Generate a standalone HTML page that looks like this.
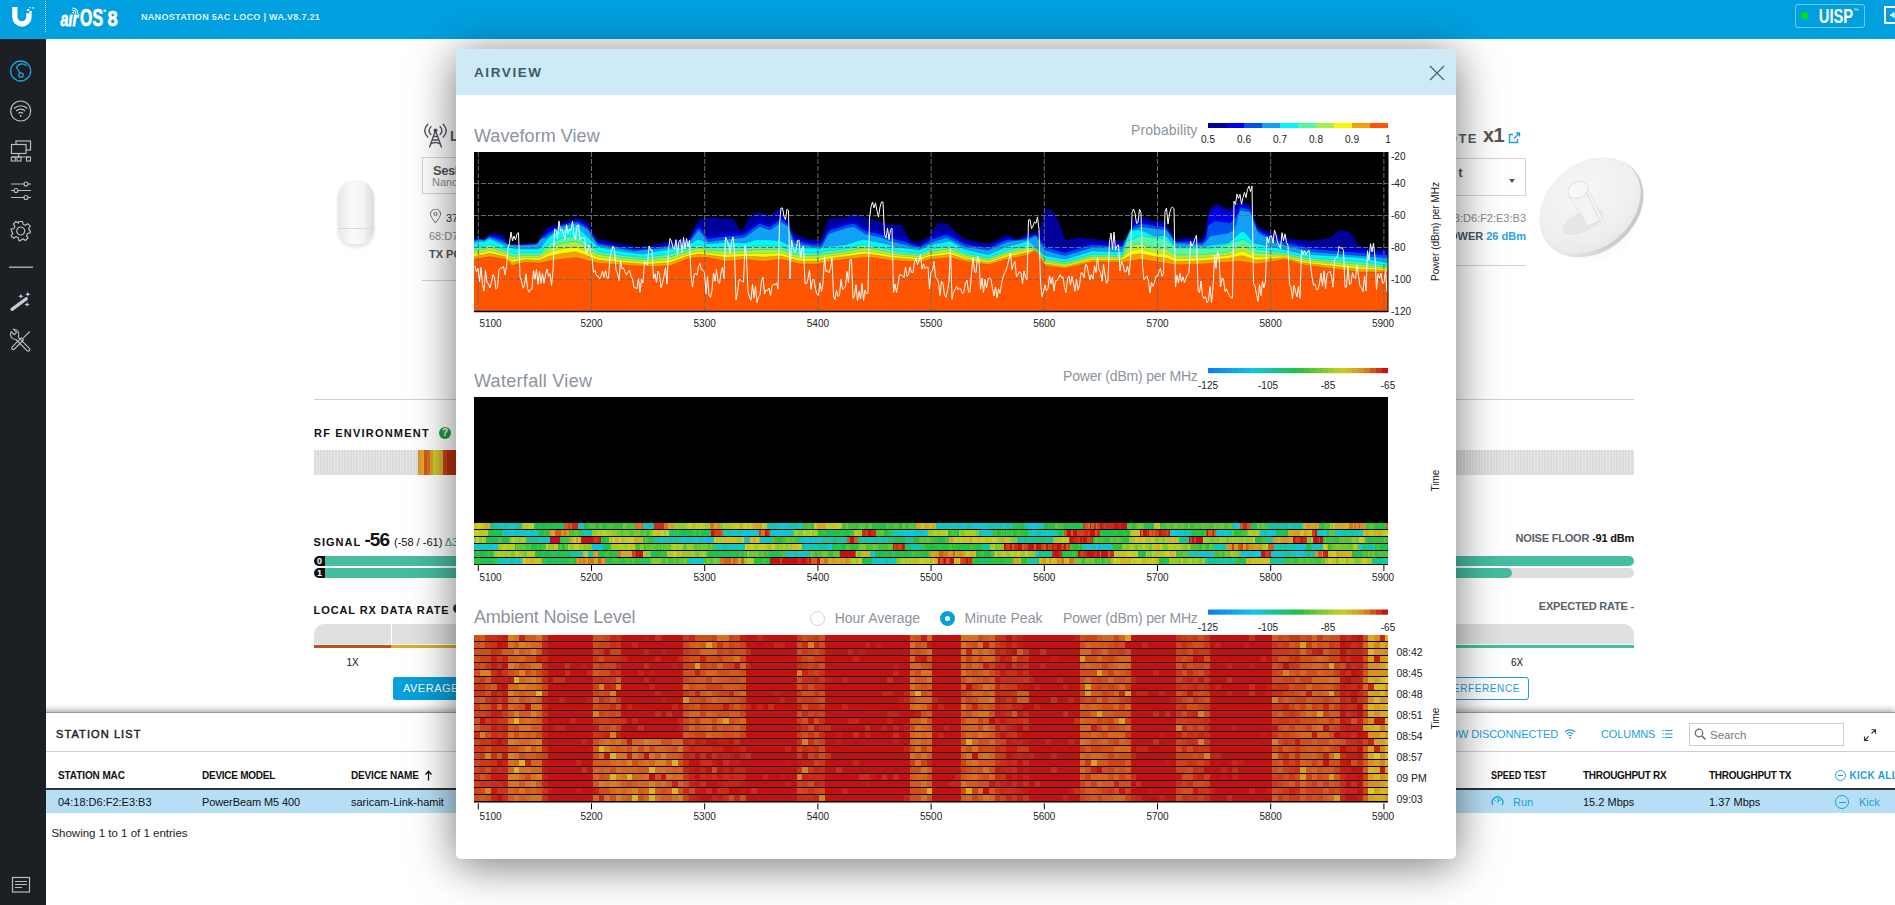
<!DOCTYPE html>
<html><head><meta charset="utf-8"><title>airOS AirView</title><style>
*{margin:0;padding:0}
html,body{width:1895px;height:905px;overflow:hidden;background:#fff;font-family:"Liberation Sans", sans-serif}
body{position:relative}
.t{position:absolute;white-space:nowrap;line-height:1}
#topbar{position:absolute;left:0;top:0;width:1895px;height:39px;background:#00a0e0}
#sidebar{position:absolute;left:0;top:39px;width:46px;height:866px;background:#1c1f24;z-index:3}
#stations{position:absolute;left:0;top:712px;width:1895px;height:193px;background:#fff;border-top:1px solid #9a9a9a;box-sizing:border-box;box-shadow:0 -2px 6px rgba(0,0,0,.32)}
#modal{position:absolute;left:456px;top:49px;width:1000px;height:810px;background:#fff;border-radius:5px;box-shadow:0 6px 45px rgba(0,0,0,.55);overflow:hidden}
#mhead{position:absolute;left:0;top:0;width:1000px;height:46px;background:#cdeaf6}
</style></head>
<body>
<div id="topbar"></div>
<svg style="position:absolute;left:0;top:0" width="40" height="39" viewBox="0 0 40 39">
<path d="M12.2 7 V17 A9.7 9.7 0 0 0 31.6 17 V13.2 H26.2 V17 A4.35 4.35 0 0 1 17.5 17 V7 Z" fill="#fff"/>
<rect x="29.3" y="11" width="2.5" height="2.2" fill="#fff"/>
<rect x="27.1" y="9" width="2.1" height="2" fill="#fff"/>
<rect x="29.6" y="7" width="1.2" height="1.3" fill="#fff"/>
<rect x="32.3" y="7.2" width="1.5" height="1.5" fill="#fff"/>
</svg>
<div style="position:absolute;left:45px;top:1px;width:0;height:31px;border-left:1px dotted rgba(255,255,255,.75)"></div>
<svg style="position:absolute;left:0;top:0" width="130" height="39" viewBox="0 0 130 39">
<text x="60.5" y="26" font-family="Liberation Sans" font-style="italic" font-weight="bold" font-size="21" fill="#fff" stroke="#fff" stroke-width="0.8" textLength="17.5" lengthAdjust="spacingAndGlyphs">a&#305;r</text>
<text x="80" y="26" font-family="Liberation Sans" font-weight="bold" font-size="23.6" fill="#fff" stroke="#fff" stroke-width="0.7" textLength="23" lengthAdjust="spacingAndGlyphs">OS</text>
<text x="107.4" y="26" font-family="Liberation Sans" font-weight="bold" font-size="22.6" fill="#fff" stroke="#fff" stroke-width="0.7" textLength="10.2" lengthAdjust="spacingAndGlyphs">8</text>
<path d="M72.3 12.3 a1.4 1.4 0 0 1 1.4 1.4 M72.3 10.2 a3.5 3.5 0 0 1 3.5 3.5 M72.3 8 a5.7 5.7 0 0 1 5.7 5.7" stroke="#fff" stroke-width="1.1" fill="none"/>
<rect x="103.5" y="9.5" width="2.6" height="2.4" fill="#d4eefa"/>
</svg>
<div class="t " style="left:141.0px;top:12.8px;font-size:9px;font-weight:bold;letter-spacing:0.3px;color:#dff2fb">NANOSTATION 5AC LOCO | WA.V8.7.21</div>
<div style="position:absolute;left:1795px;top:4px;width:68px;height:22px;border:1.5px solid rgba(255,255,255,.45);border-radius:3px;box-sizing:border-box;height:24px;width:70px"></div>
<div style="position:absolute;left:1801px;top:12px;width:7px;height:7px;border-radius:50%;background:#00e400"></div>
<svg style="position:absolute;left:1810px;top:0" width="55" height="30" viewBox="1810 0 55 30"><text x="1818.8" y="22.75" font-family="Liberation Sans" font-weight="bold" font-size="20.5" fill="#fff" textLength="34.3" lengthAdjust="spacingAndGlyphs">UISP</text><path d="M1854 8.8 h2.2 M1855.1 8.8 v2 M1856.8 10.8 v-2 l0.6 1 0.6 -1 v2" stroke="#fff" stroke-width="0.5" fill="none"/></svg>
<div style="position:absolute;left:1884px;top:6px;width:16px;height:18px;border:2px solid #fff;box-sizing:border-box"></div>
<svg style="position:absolute;left:1884px;top:0" width="11" height="39" viewBox="1884 0 11 39"><path d="M1890 15 H1896 M1894.3 12.6 L1891.8 15 L1894.3 17.4" stroke="#fff" stroke-width="1.6" fill="none"/></svg>
<div id="sidebar"></div>
<svg style="position:absolute;left:0;top:39px;z-index:4" width="46" height="866" viewBox="0 39 46 866">
<circle cx="20.7" cy="71" r="10" fill="none" stroke="#1aa3df" stroke-width="1.3"/>
<path d="M26.5 66 A6 6 0 0 0 16.5 67.5 L20 73" fill="none" stroke="#1aa3df" stroke-width="1.3"/>
<circle cx="21" cy="75" r="2.2" fill="none" stroke="#1aa3df" stroke-width="1.3"/>
<circle cx="20.7" cy="111" r="10" fill="none" stroke="#b9bec4" stroke-width="1.2"/>
<path d="M14 108.5 a9.5 9.5 0 0 1 13.4 0 M16.2 111 a6.4 6.4 0 0 1 9 0 M18.5 113.5 a3.2 3.2 0 0 1 4.4 0" fill="none" stroke="#b9bec4" stroke-width="1.2"/>
<circle cx="20.7" cy="116" r="0.9" fill="#b9bec4"/>
<rect x="16" y="141" width="14.5" height="9" fill="none" stroke="#b9bec4" stroke-width="1.2"/>
<rect x="11.5" y="144.5" width="14.5" height="9" fill="#1c1f24" stroke="#b9bec4" stroke-width="1.2"/>
<path d="M18.7 153.5 V157 M12 157 H29" stroke="#b9bec4" stroke-width="1.2"/>
<rect x="11.3" y="157" width="4" height="4" fill="none" stroke="#b9bec4" stroke-width="1.1"/>
<rect x="17" y="157" width="4" height="4" fill="none" stroke="#b9bec4" stroke-width="1.1"/>
<rect x="26.5" y="157" width="4" height="4" fill="none" stroke="#b9bec4" stroke-width="1.1"/>
<path d="M11 184 H31 M11 190.5 H31 M11 197.5 H31" stroke="#b9bec4" stroke-width="1.2"/>
<circle cx="26" cy="184" r="2" fill="#1c1f24" stroke="#b9bec4" stroke-width="1.1"/>
<circle cx="16" cy="190.5" r="2" fill="#1c1f24" stroke="#b9bec4" stroke-width="1.1"/>
<circle cx="26" cy="197.5" r="2" fill="#1c1f24" stroke="#b9bec4" stroke-width="1.1"/>
<g transform="translate(20.7,231)" fill="none" stroke="#b9bec4" stroke-width="1.2">
<path d="M-1.8,-9.5 L1.8,-9.5 L2.4,-6.8 L4.6,-5.8 L7,-7.3 L9.5,-4.8 L8,-2.4 L9,-0.2 L9.6,0 L9.6,1.8 L6.8,2.4 L5.8,4.6 L7.3,7 L4.8,9.5 L2.4,8 L0.2,9 L0,9.6 L-1.8,9.6 L-2.4,6.8 L-4.6,5.8 L-7,7.3 L-9.5,4.8 L-8,2.4 L-9,0.2 L-9.6,-1.8 L-6.8,-2.4 L-5.8,-4.6 L-7.3,-7 L-4.8,-9.5 L-2.4,-8 Z"/>
<circle cx="0" cy="0" r="4"/>
</g>
<path d="M9 267.2 H33" stroke="#b9bec4" stroke-width="1.3"/>
<path d="M12 309.3 L26.2 298.8" stroke="#b9bec4" stroke-width="3.4" stroke-linecap="round"/>
<path d="M12 309.3 L26.2 298.8" stroke="#c4d0d8" stroke-width="1.8" stroke-linecap="round"/>
<path d="M20.9 293.0 Q20.9 296.2 24.099999999999998 296.2 Q20.9 296.2 20.9 299.4 Q20.9 296.2 17.7 296.2 Q20.9 296.2 20.9 293.0Z M27.8 291.1 Q27.8 294.3 31.0 294.3 Q27.8 294.3 27.8 297.5 Q27.8 294.3 24.6 294.3 Q27.8 294.3 27.8 291.1Z M27.1 301.2 Q27.1 304.4 30.3 304.4 Q27.1 304.4 27.1 307.59999999999997 Q27.1 304.4 23.900000000000002 304.4 Q27.1 304.4 27.1 301.2Z" fill="#c4d0d8"/>
<g fill="none" stroke="#b9bec4" stroke-width="1.1">
<path d="M18.2 337.2 L29.3 348.3 a1.6 1.6 0 0 1 -2.3 2.3 L15.9 339.5"/>
<path d="M15.9 339.5 A5.2 5.2 0 0 1 11.2 331.6 L14.3 334.7 L16.6 332.4 L13.5 329.3 A5.2 5.2 0 0 1 18.2 337.2"/>
<path d="M12.2 346.8 L21.3 337.7 L23.5 339.9 L14.4 349 a1.55 1.55 0 0 1 -2.2 -2.2z"/>
<path d="M22.4 338.8 L29.7 331.5"/>
</g>
<rect x="12.5" y="877.5" width="17" height="14.5" fill="none" stroke="#b9bec4" stroke-width="1.2"/>
<path d="M15 881.5 H27 M15 884.5 H27 M15 887.5 H22" stroke="#b9bec4" stroke-width="1.2"/>
</svg>
<div style="position:absolute;left:338px;top:180px;width:36px;height:64px;border-radius:17px 17px 15px 15px;background:linear-gradient(90deg,#e8e8e8,#fafafa 40%,#f4f4f4 70%,#dcdcdc);box-shadow:0 3px 4px rgba(0,0,0,.12)"></div>
<div style="position:absolute;left:339px;top:228px;width:34px;height:1px;background:#d8d8d8"></div>
<svg style="position:absolute;left:418px;top:118px" width="36" height="32" viewBox="0 0 36 32">
<g fill="none" stroke="#50565c" stroke-width="1.4" stroke-linecap="round">
<path d="M9.8 6.2 Q3.8 12.6 9.8 19 M25.2 6.2 Q31.2 12.6 25.2 19 M12.9 8.6 Q9.3 12.6 12.9 16.6 M22.1 8.6 Q25.7 12.6 22.1 16.6"/>
<path d="M17.5 12.5 L11.6 29 M17.5 12.5 L23.4 29 M15.2 18.5 H19.8 M14.2 22 H20.8 M12.8 26 Q17.5 23 22.2 26"/>
</g><circle cx="17.5" cy="12.3" r="1.9" fill="#50565c"/></svg>
<div class="t " style="left:450.0px;top:129.1px;font-size:14px;font-weight:bold;color:#56606a">L</div>
<div style="position:absolute;left:422px;top:157px;width:120px;height:37px;border:1px solid #d4d4d4;box-sizing:border-box"></div>
<div class="t " style="left:433.0px;top:164.0px;font-size:13px;font-weight:bold;color:#555;letter-spacing:-0.5px">Seslikaya</div>
<div class="t " style="left:432.0px;top:177.2px;font-size:11px;color:#8a8a8a">NanoStation</div>
<svg style="position:absolute;left:429px;top:209px" width="13" height="15" viewBox="0 0 13 15"><path d="M6.5 14 C3 9 1.5 7 1.5 5 a5 5 0 0 1 10 0 c0 2 -1.5 4 -5 9z" fill="none" stroke="#666" stroke-width="1"/><circle cx="6.5" cy="5" r="1.6" fill="none" stroke="#666" stroke-width="1"/></svg>
<div class="t " style="left:446.0px;top:212.7px;font-size:11px;color:#333">37.1</div>
<div class="t " style="left:429.0px;top:230.7px;font-size:11px;color:#8a8a8a">68:D7:9A</div>
<div class="t " style="left:429.0px;top:248.7px;font-size:11px;font-weight:bold;color:#4a5660">TX POWER</div>
<div style="position:absolute;left:422px;top:280px;width:40px;height:1px;background:#d0d0d0"></div>
<div class="t " style="right:417.0px;top:132.0px;font-size:13px;font-weight:bold;letter-spacing:1.5px;color:#56606a">REMOTE</div>
<div class="t " style="left:1483.0px;top:125.1px;font-size:20px;font-weight:bold;color:#555;letter-spacing:-0.5px">x1</div>
<svg style="position:absolute;left:1508px;top:132px" width="13" height="12" viewBox="0 0 13 12"><path d="M5 2.5 H1.5 V10.5 H9.5 V7 M6 6.5 L11.5 1 M8 1 H11.5 V4.5" fill="none" stroke="#1f9fdc" stroke-width="1.4"/></svg>
<div style="position:absolute;left:1400px;top:158px;width:126px;height:38px;border:1px solid #d4d4d4;box-sizing:border-box"></div>
<div class="t " style="right:432.5px;top:166.0px;font-size:13px;font-weight:bold;color:#555">t</div>
<div style="position:absolute;left:1509px;top:179px;width:0;height:0;border-left:3.5px solid transparent;border-right:3.5px solid transparent;border-top:4px solid #555"></div>
<div class="t " style="right:369.0px;top:212.7px;font-size:11px;color:#8a8a8a">04:18:D6:F2:E3:B3</div>
<div class="t " style="right:369.0px;top:230.7px;font-size:11px;font-weight:bold;color:#4a5660">TX POWER <span style="color:#2aa5e0;font-weight:bold">26 dBm</span></div>
<div style="position:absolute;left:1420px;top:265px;width:106px;height:1px;background:#d0d0d0"></div>
<svg style="position:absolute;left:1530px;top:150px" width="125" height="125" viewBox="1530 150 125 125">
<defs><radialGradient id="dg" cx="0.55" cy="0.35" r="0.75"><stop offset="0" stop-color="#f6f6f6"/><stop offset="0.6" stop-color="#f0f0f0"/><stop offset="1" stop-color="#e6e6e6"/></radialGradient>
<linearGradient id="rim" x1="0" y1="0" x2="0.6" y2="1"><stop offset="0" stop-color="#f2f2f2"/><stop offset="0.6" stop-color="#e4e4e4"/><stop offset="1" stop-color="#c8c8c8"/></linearGradient>
<radialGradient id="sh" cx="0.5" cy="0.5" r="0.5"><stop offset="0" stop-color="#000" stop-opacity="0.12"/><stop offset="1" stop-color="#000" stop-opacity="0"/></radialGradient></defs>
<ellipse cx="1600" cy="222" rx="50" ry="36" transform="rotate(-40 1600 222)" fill="url(#sh)"/>
<ellipse cx="1591.5" cy="207.5" rx="57" ry="44" transform="rotate(-40 1591.5 207.5)" fill="url(#rim)"/>
<ellipse cx="1590" cy="205.5" rx="55.5" ry="42.5" transform="rotate(-40 1590 205.5)" fill="url(#dg)"/>
<ellipse cx="1583" cy="222" rx="22" ry="10" transform="rotate(-25 1583 222)" fill="#e2e2e2" opacity="0.8"/>
<path d="M1569 196 L1588 226 L1603 219 L1586 186 Z" fill="#f4f4f4" stroke="#dcdcdc" stroke-width="0.7"/>
<path d="M1585 190 L1599 219" stroke="#dedede" stroke-width="1"/>
<ellipse cx="1578" cy="190" rx="10.5" ry="8" transform="rotate(-25 1578 190)" fill="#f8f8f8" stroke="#dadada" stroke-width="0.8"/>
</svg>
<div style="position:absolute;left:314px;top:398.5px;width:1320px;height:1px;background:#cfcfcf"></div>
<div class="t " style="left:314.0px;top:427.7px;font-size:11px;font-weight:bold;letter-spacing:1.2px;color:#111">RF ENVIRONMENT</div>
<div style="position:absolute;left:439px;top:427px;width:12px;height:12px;border-radius:50%;background:#1c9d3f;color:#fff;font-size:10px;line-height:12px;text-align:center;font-weight:bold">?</div>
<div style="position:absolute;left:314px;top:450px;width:1320px;height:25px;background:repeating-linear-gradient(90deg,#dcdcdc 0 2px,#e6e6e6 2px 3px)"></div>
<div style="position:absolute;left:418px;top:450px;width:40px;height:25px;background:linear-gradient(90deg,#d89a2a 0 3px,#e0a830 3px 6px,#d05a18 6px 9px,#d86c20 9px 12px,#d8a030 12px 15px,#c8d030 15px 18px,#d0c030 18px 21px,#d0b030 21px 25px,#c84018 25px 29px,#b83010 29px 40px)"></div>
<div class="t " style="left:313.6px;top:536.7px;font-size:11px;font-weight:bold;letter-spacing:1px;color:#111">SIGNAL</div>
<div class="t " style="left:364.5px;top:529.9px;font-size:19px;color:#111;letter-spacing:-1px;font-weight:bold">-56</div>
<div class="t " style="left:394.0px;top:536.7px;font-size:11px;color:#111">(-58 / -61) <span style="color:#2aa27a">&Delta;3</span></div>
<div style="position:absolute;left:314px;top:556px;width:11px;height:10px;background:#111;border-radius:5px 0 0 5px;color:#fff;font-size:9px;line-height:10px;text-align:center;font-weight:bold">0</div>
<div style="position:absolute;left:314px;top:568px;width:11px;height:10px;background:#111;border-radius:5px 0 0 5px;color:#fff;font-size:9px;line-height:10px;text-align:center;font-weight:bold">1</div>
<div style="position:absolute;left:325px;top:556px;width:1309px;height:10px;background:#46bda0;border-radius:0 5px 5px 0"></div>
<div style="position:absolute;left:325px;top:568px;width:1309px;height:10px;background:#dcdedd;border-radius:0 5px 5px 0"></div>
<div style="position:absolute;left:325px;top:568px;width:1187px;height:10px;background:#46bda0;border-radius:0 5px 5px 0"></div>
<div class="t " style="right:261.0px;top:532.7px;font-size:11px;font-weight:bold;color:#58626a;letter-spacing:-0.2px">NOISE FLOOR <span style="color:#111">-91 dBm</span></div>
<div class="t " style="left:313.6px;top:604.7px;font-size:11px;font-weight:bold;letter-spacing:0.9px;color:#111">LOCAL RX DATA RATE</div>
<div style="position:absolute;left:453px;top:604px;width:9px;height:9px;border-radius:50%;background:#333"></div>
<div class="t " style="right:261.0px;top:600.7px;font-size:11px;font-weight:bold;color:#58626a;letter-spacing:-0.2px">EXPECTED RATE -</div>
<div style="position:absolute;left:314px;top:624px;width:1320px;height:20px;background:#dfe0e0;border-radius:10px 10px 0 0"></div>
<div style="position:absolute;left:391px;top:624px;width:1px;height:20px;background:#fff"></div>
<div style="position:absolute;left:314px;top:644.5px;width:77px;height:3.5px;background:#c84b1c"></div>
<div style="position:absolute;left:391px;top:644.5px;width:100px;height:3.5px;background:#d8ad28"></div>
<div style="position:absolute;left:1400px;top:644.5px;width:234px;height:3.5px;background:#46bda0"></div>
<div class="t " style="left:346.5px;top:657.5px;font-size:10px;color:#111">1X</div>
<div class="t " style="left:1511.0px;top:657.5px;font-size:10px;color:#111">6X</div>
<div style="position:absolute;left:393px;top:677px;width:150px;height:23px;background:#079fdc;border-radius:3px"></div>
<div class="t " style="left:403.0px;top:682.7px;font-size:11px;color:#fff;letter-spacing:0.5px">AVERAGE CCQ</div>
<div style="position:absolute;left:1380px;top:677px;width:149px;height:23px;border:1px solid #1b9fdc;border-radius:3px;box-sizing:border-box"></div>
<div class="t " style="right:375.0px;top:683.5px;font-size:10px;color:#1b9fdc;letter-spacing:0.6px">INTERFERENCE</div>
<div id="stations"></div>
<div class="t " style="left:56.0px;top:728.7px;font-size:11px;letter-spacing:1.1px;color:#222;-webkit-text-stroke:0.45px #222">STATION LIST</div>
<div style="position:absolute;left:46px;top:751px;width:1849px;height:1px;background:#cfcfcf"></div>
<div class="t " style="left:58.0px;top:770.5px;font-size:10px;font-weight:bold;color:#111;letter-spacing:-0.1px">STATION MAC</div>
<div class="t " style="left:202.0px;top:770.5px;font-size:10px;font-weight:bold;color:#111;letter-spacing:-0.25px">DEVICE MODEL</div>
<div class="t " style="left:351.0px;top:770.5px;font-size:10px;font-weight:bold;color:#111;letter-spacing:-0.15px">DEVICE NAME</div>
<svg style="position:absolute;left:424px;top:770px" width="9" height="11" viewBox="0 0 9 11"><path d="M4.5 10.5 V1.5 M1.5 4.5 L4.5 1.3 L7.5 4.5" fill="none" stroke="#111" stroke-width="1.3"/></svg>
<div class="t " style="left:1490.5px;top:770.5px;font-size:10px;font-weight:bold;color:#111;letter-spacing:-0.1px;transform:scaleX(0.9);transform-origin:0 0">SPEED TEST</div>
<div class="t " style="left:1583.0px;top:770.5px;font-size:10px;font-weight:bold;color:#111;letter-spacing:-0.3px">THROUGHPUT RX</div>
<div class="t " style="left:1709.0px;top:770.5px;font-size:10px;font-weight:bold;color:#111;letter-spacing:-0.3px">THROUGHPUT TX</div>
<div style="position:absolute;left:1835px;top:770px;width:9px;height:9px;border:1px solid #1b9fdc;border-radius:50%"></div><div style="position:absolute;left:1838px;top:775px;width:5px;height:1px;background:#1b9fdc"></div>
<div class="t " style="left:1849.5px;top:770.5px;font-size:10px;font-weight:bold;color:#1b9fdc;letter-spacing:0.3px">KICK ALL</div>
<div style="position:absolute;left:46px;top:788px;width:1849px;height:2px;background:#2f3336"></div>
<div style="position:absolute;left:46px;top:790px;width:1849px;height:23px;background:#b6dff5"></div>
<div class="t " style="left:58.0px;top:796.7px;font-size:11px;color:#111">04:18:D6:F2:E3:B3</div>
<div class="t " style="left:202.0px;top:796.7px;font-size:11px;color:#111;letter-spacing:-0.1px">PowerBeam M5 400</div>
<div class="t " style="left:351.0px;top:796.7px;font-size:11px;color:#111">saricam-Link-hamit</div>
<svg style="position:absolute;left:1491px;top:795px" width="13" height="12" viewBox="0 0 13 12"><path d="M2 10 A5.3 5.3 0 1 1 11 10" fill="none" stroke="#1b9fdc" stroke-width="1.3"/><path d="M6.5 7.5 L8.5 4" stroke="#1b9fdc" stroke-width="1.3"/><path d="M3.5 5 l1 1 M9.5 5 l-1 1 M6.5 3 v1.3" stroke="#1b9fdc" stroke-width="1"/></svg>
<div class="t " style="left:1513.0px;top:796.7px;font-size:11px;color:#1b9fdc">Run</div>
<div class="t " style="left:1583.0px;top:796.7px;font-size:11px;color:#111">15.2 Mbps</div>
<div class="t " style="left:1709.0px;top:796.7px;font-size:11px;color:#111">1.37 Mbps</div>
<div style="position:absolute;left:1835px;top:795px;width:14px;height:14px;border:1.3px solid #1b9fdc;border-radius:50%;box-sizing:border-box"></div><div style="position:absolute;left:1838.5px;top:801.5px;width:7px;height:1.3px;background:#1b9fdc"></div>
<div class="t " style="left:1859.0px;top:796.7px;font-size:11px;color:#1b9fdc">Kick</div>
<div class="t " style="left:51.4px;top:828.3px;font-size:11.5px;color:#222">Showing 1 to 1 of 1 entries</div>
<div class="t " style="right:337.0px;top:728.7px;font-size:11px;color:#1b9fdc;letter-spacing:-0.1px">SHOW DISCONNECTED</div>
<svg style="position:absolute;left:1564px;top:729px" width="12" height="10" viewBox="0 0 12 10"><path d="M1 3 a7 7 0 0 1 10 0 M2.8 5 a4.5 4.5 0 0 1 6.4 0 M4.5 7 a2 2 0 0 1 3 0" fill="none" stroke="#1b9fdc" stroke-width="1.1"/><circle cx="6" cy="8.8" r="0.9" fill="#1b9fdc"/></svg>
<div class="t " style="left:1601.0px;top:728.7px;font-size:11px;color:#1b9fdc;letter-spacing:-0.1px">COLUMNS</div>
<svg style="position:absolute;left:1662px;top:729px" width="11" height="10" viewBox="0 0 11 10"><path d="M3 1.5 H10.5 M3 5 H10.5 M3 8.5 H10.5" stroke="#1b9fdc" stroke-width="1.2"/><path d="M0.5 1.5 H1.8 M0.5 5 H1.8 M0.5 8.5 H1.8" stroke="#1b9fdc" stroke-width="1.2"/></svg>
<div style="position:absolute;left:1689px;top:723px;width:155px;height:23px;border:1px solid #cfcfcf;box-sizing:border-box"></div>
<svg style="position:absolute;left:1694px;top:728px" width="13" height="13" viewBox="0 0 13 13"><circle cx="5" cy="5" r="3.8" fill="none" stroke="#666" stroke-width="1.2"/><path d="M7.8 7.8 L11.5 11.5" stroke="#666" stroke-width="1.5"/></svg>
<div class="t " style="left:1710.0px;top:730.3px;font-size:11.5px;color:#777">Search</div>
<svg style="position:absolute;left:1863px;top:729px" width="14" height="13" viewBox="0 0 14 13"><path d="M1.5 11.5 L5.5 7.5 M8.5 4.5 L12.5 0.8 M1.5 7.5 V11.5 H5.5 M8.5 0.8 H12.5 V4.8" fill="none" stroke="#333" stroke-width="1.1"/></svg>
<div id="modal"><div id="mhead"></div></div>
<div class="t m" style="left:474.0px;top:65.8px;font-size:13.5px;font-weight:bold;letter-spacing:1.6px;color:#3d5a69">AIRVIEW</div>
<svg class="m" style="position:absolute;left:1429px;top:65px" width="16" height="16" viewBox="0 0 16 16"><path d="M1 1 L15 15 M15 1 L1 15" stroke="#4b6470" stroke-width="1.3"/></svg>
<div class="t m" style="left:474.0px;top:126.6px;font-size:18px;color:#8b949d;letter-spacing:0.05px">Waveform View</div>
<div class="t m" style="left:1131.0px;top:123.1px;font-size:14px;color:#8b949d;letter-spacing:0.1px">Probability</div>
<div class="t m" style="left:474.0px;top:371.5px;font-size:18px;color:#8b949d;letter-spacing:0.3px">Waterfall View</div>
<div class="t m" style="left:1063.0px;top:368.6px;font-size:14px;color:#8b949d;letter-spacing:-0.2px">Power (dBm) per MHz</div>
<div class="t m" style="left:474.0px;top:607.9px;font-size:18px;color:#8b949d;letter-spacing:-0.2px">Ambient Noise Level</div>
<div class="t m" style="left:834.7px;top:610.5px;font-size:14px;color:#8b949d">Hour Average</div>
<div class="t m" style="left:964.6px;top:610.5px;font-size:14px;color:#8b949d">Minute Peak</div>
<div class="t m" style="left:1063.0px;top:610.6px;font-size:14px;color:#8b949d;letter-spacing:-0.2px">Power (dBm) per MHz</div>
<div class="m" style="position:absolute;left:810px;top:611px;width:15px;height:15px;border:1px solid #cfd3d6;border-radius:50%;box-sizing:border-box;background:#fff"></div>
<div class="m" style="position:absolute;left:940px;top:611px;width:15px;height:15px;border-radius:50%;box-sizing:border-box;background:#079fdc"></div>
<div class="m" style="position:absolute;left:945px;top:616px;width:5px;height:5px;border-radius:50%;background:#fff"></div>
<svg class="m" style="position:absolute;left:0;top:0" width="1895" height="905" font-family="Liberation Sans" fill="#222"><rect x="474" y="152" width="914" height="159" fill="#000"/>
<polygon fill="#00009a" points="474,311 474,236.6 476,237.1 478,237.6 480,238.1 482,238.6 484,239.1 486,237.7 488,235.3 490,233.0 492,233.3 494,233.5 496,233.8 498,234.1 500,234.3 502,234.6 504,236.6 506,239.8 508,243.0 510,243.2 512,243.4 514,243.6 516,243.8 518,243.9 520,243.8 522,243.7 524,243.6 526,243.5 528,243.4 530,243.3 532,243.2 534,243.1 536,243.0 538,241.4 540,238.3 542,235.1 544,231.9 546,228.8 548,227.5 550,226.8 552,226.1 554,225.4 556,224.7 558,224.0 560,223.3 562,222.7 564,222.0 566,221.3 568,220.6 570,219.9 572,219.3 574,218.6 576,217.9 578,217.7 580,218.7 582,219.7 584,220.7 586,221.7 588,222.7 590,226.2 592,230.5 594,234.8 596,238.5 598,238.9 600,239.4 602,239.8 604,240.3 606,240.8 608,241.2 610,241.7 612,242.1 614,242.6 616,243.0 618,243.4 620,243.7 622,244.0 624,244.3 626,244.7 628,245.0 630,245.3 632,245.7 634,246.0 636,246.3 638,246.6 640,246.4 642,246.2 644,246.1 646,245.9 648,245.7 650,245.4 652,245.0 654,244.5 656,244.1 658,243.7 660,243.3 662,242.8 664,242.4 666,242.0 668,241.5 670,241.1 672,240.8 674,240.5 676,240.2 678,239.9 680,239.6 682,239.4 684,239.1 686,238.8 688,238.5 690,235.9 692,232.1 694,228.3 696,224.5 698,220.6 700,219.1 702,218.8 704,218.5 706,218.2 708,218.0 710,217.7 712,217.4 714,217.6 716,217.7 718,217.9 720,218.1 722,218.2 724,218.4 726,218.6 728,218.8 730,219.0 732,219.1 734,219.8 736,223.3 738,226.8 740,230.3 742,230.2 744,226.5 746,222.9 748,219.2 750,215.6 752,214.8 754,214.0 756,213.2 758,212.4 760,212.3 762,213.0 764,213.6 766,214.3 768,214.9 770,215.6 772,214.0 774,212.4 776,210.7 778,209.1 780,209.7 782,212.5 784,215.4 786,218.2 788,221.0 790,225.3 792,229.5 794,233.8 796,234.6 798,235.3 800,236.1 802,236.8 804,237.6 806,238.4 808,239.1 810,239.4 812,239.5 814,239.6 816,239.7 818,239.8 820,239.9 822,237.1 824,231.3 826,225.5 828,219.7 830,218.2 832,218.1 834,218.0 836,217.9 838,217.8 840,217.7 842,217.6 844,217.5 846,217.0 848,216.2 850,215.4 852,214.6 854,213.8 856,214.5 858,215.1 860,215.8 862,216.4 864,217.1 866,217.7 868,218.2 870,218.8 872,219.3 874,219.9 876,220.5 878,221.1 880,221.6 882,222.2 884,222.8 886,223.4 888,224.0 890,224.6 892,224.7 894,224.7 896,224.7 898,224.7 900,224.7 902,225.8 904,229.4 906,232.9 908,236.5 910,240.1 912,241.2 914,241.4 916,241.6 918,241.8 920,242.0 922,240.7 924,239.5 926,238.2 928,237.0 930,235.7 932,232.0 934,228.4 936,224.7 938,223.0 940,223.1 942,223.3 944,223.5 946,223.6 948,223.8 950,226.0 952,228.1 954,230.3 956,232.3 958,233.9 960,235.5 962,237.1 964,238.7 966,239.5 968,239.9 970,240.3 972,240.6 974,241.0 976,241.4 978,241.8 980,242.2 982,242.7 984,243.1 986,243.5 988,243.9 990,242.9 992,241.9 994,240.9 996,239.9 998,239.0 1000,238.0 1002,237.0 1004,236.0 1006,235.0 1008,235.3 1010,236.1 1012,237.0 1014,237.8 1016,238.7 1018,239.0 1020,237.9 1022,236.7 1024,235.6 1026,234.4 1028,233.3 1030,232.9 1032,232.7 1034,232.5 1036,232.3 1038,232.1 1040,228.2 1042,220.6 1044,213.0 1046,209.3 1048,209.5 1050,209.8 1052,210.0 1054,213.5 1056,217.0 1058,220.5 1060,224.8 1062,231.0 1064,237.1 1066,240.0 1068,239.6 1070,239.3 1072,238.9 1074,238.5 1076,238.2 1078,237.8 1080,237.6 1082,237.8 1084,238.0 1086,238.2 1088,238.4 1090,238.6 1092,238.9 1094,239.1 1096,239.3 1098,239.5 1100,239.8 1102,240.0 1104,240.2 1106,240.5 1108,240.7 1110,240.9 1112,240.9 1114,240.8 1116,240.7 1118,240.6 1120,240.5 1122,240.4 1124,240.3 1126,237.9 1128,233.2 1130,228.6 1132,223.9 1134,219.3 1136,218.5 1138,217.7 1140,216.9 1142,216.9 1144,217.6 1146,218.3 1148,219.0 1150,219.7 1152,220.4 1154,221.0 1156,221.0 1158,221.0 1160,221.0 1162,221.0 1164,221.0 1166,223.3 1168,226.7 1170,230.0 1172,233.3 1174,236.6 1176,239.2 1178,239.0 1180,238.8 1182,238.5 1184,238.2 1186,238.0 1188,237.8 1190,237.5 1192,237.8 1194,238.1 1196,238.3 1198,238.6 1200,238.9 1202,239.2 1204,234.9 1206,226.0 1208,217.2 1210,208.3 1212,207.1 1214,205.9 1216,204.7 1218,204.1 1220,205.2 1222,206.4 1224,207.5 1226,208.6 1228,209.8 1230,208.7 1232,207.1 1234,205.4 1236,203.8 1238,202.1 1240,201.2 1242,201.9 1244,202.6 1246,203.2 1248,203.9 1250,204.6 1252,209.8 1254,215.7 1256,221.7 1258,226.7 1260,227.6 1262,228.5 1264,229.4 1266,230.3 1268,231.2 1270,232.1 1272,233.0 1274,233.9 1276,234.8 1278,235.3 1280,235.8 1282,236.3 1284,236.8 1286,237.3 1288,237.8 1290,238.3 1292,238.8 1294,239.3 1296,239.5 1298,239.7 1300,239.9 1302,240.1 1304,240.2 1306,240.4 1308,240.6 1310,240.8 1312,241.0 1314,240.6 1316,240.2 1318,239.9 1320,239.5 1322,239.1 1324,238.7 1326,238.4 1328,238.0 1330,237.6 1332,236.3 1334,234.7 1336,233.1 1338,231.5 1340,230.3 1342,230.6 1344,230.9 1346,231.3 1348,231.6 1350,231.9 1352,234.6 1354,238.0 1356,241.4 1358,244.8 1360,245.3 1362,245.9 1364,246.4 1366,246.9 1368,247.4 1370,248.0 1372,248.5 1374,249.0 1376,249.3 1378,249.3 1380,249.3 1382,249.3 1384,249.3 1386,249.3 1388,249.3 1388,311"/>
<polygon fill="#0000ee" points="474,311 474,238.1 476,238.3 478,238.5 480,238.7 482,239.1 484,239.7 486,238.2 488,236.2 490,234.5 492,235.0 494,235.4 496,235.8 498,236.3 500,236.7 502,237.2 504,238.8 506,241.1 508,243.5 510,243.7 512,243.9 514,244.1 516,244.3 518,244.4 520,244.3 522,244.2 524,244.1 526,244.0 528,243.9 530,243.8 532,243.7 534,243.6 536,243.6 538,241.9 540,238.8 542,236.2 544,234.0 546,231.8 548,230.5 550,229.5 552,228.6 554,227.6 556,226.6 558,225.6 560,224.7 562,223.9 564,223.3 566,222.7 568,222.1 570,221.5 572,220.9 574,220.3 576,219.7 578,219.6 580,220.7 582,221.8 584,222.9 586,224.0 588,225.1 590,228.3 592,232.3 594,236.2 596,239.7 598,240.9 600,241.4 602,241.8 604,242.2 606,242.6 608,243.0 610,243.5 612,243.9 614,244.3 616,244.7 618,245.0 620,245.4 622,245.7 624,246.0 626,246.4 628,246.7 630,247.0 632,247.4 634,247.7 636,247.8 638,247.9 640,247.8 642,247.6 644,247.4 646,247.3 648,247.1 650,246.8 652,246.4 654,246.1 656,245.7 658,245.4 660,245.0 662,244.7 664,244.3 666,244.0 668,243.6 670,243.3 672,242.9 674,242.6 676,242.2 678,241.9 680,241.5 682,241.2 684,240.8 686,240.4 688,240.1 690,237.8 692,234.3 694,230.9 696,227.5 698,224.9 700,225.6 702,228.2 704,230.7 706,233.2 708,235.7 710,235.7 712,235.4 714,235.1 716,234.8 718,234.6 720,234.3 722,234.0 724,233.7 726,233.4 728,233.2 730,233.0 732,232.8 734,232.6 736,232.4 738,232.2 740,232.9 742,232.8 744,231.6 746,230.5 748,229.0 750,227.5 752,226.0 754,224.5 756,223.0 758,221.5 760,220.7 762,221.4 764,222.0 766,222.7 768,223.3 770,223.9 772,222.7 774,221.2 776,219.7 778,218.3 780,216.8 782,216.6 784,218.2 786,220.5 788,222.8 790,227.3 792,232.2 794,237.0 796,237.6 798,238.2 800,238.8 802,239.4 804,240.1 806,240.7 808,241.3 810,241.6 812,241.8 814,241.9 816,242.1 818,242.3 820,242.5 822,240.1 824,236.2 826,232.5 828,228.7 830,227.3 832,226.6 834,226.0 836,225.3 838,224.7 840,224.0 842,223.4 844,222.7 846,222.2 848,221.8 850,221.3 852,220.9 854,220.5 856,221.8 858,223.2 860,224.5 862,225.8 864,227.1 866,228.0 868,228.5 870,228.9 872,229.4 874,229.8 876,230.3 878,230.7 880,231.2 882,231.7 884,232.5 886,233.3 888,234.0 890,234.8 892,235.4 894,235.9 896,236.4 898,236.9 900,237.4 902,237.9 904,238.4 906,238.9 908,239.5 910,242.1 912,242.9 914,243.2 916,243.6 918,243.9 920,244.2 922,243.0 924,241.8 926,240.6 928,239.4 930,238.2 932,236.3 934,235.7 936,235.0 938,234.3 940,233.7 942,233.0 944,232.3 946,231.7 948,232.2 950,233.2 952,234.2 954,235.2 956,236.2 958,237.2 960,238.5 962,239.9 964,241.3 966,242.0 968,242.4 970,242.7 972,243.0 974,243.4 976,243.8 978,244.1 980,244.5 982,244.9 984,245.3 986,245.6 988,246.0 990,245.1 992,244.2 994,243.2 996,242.3 998,241.3 1000,240.3 1002,239.4 1004,238.4 1006,237.5 1008,237.5 1010,238.0 1012,238.5 1014,238.9 1016,239.4 1018,239.6 1020,238.7 1022,237.9 1024,237.0 1026,236.2 1028,235.4 1030,234.8 1032,234.3 1034,233.9 1036,233.6 1038,234.5 1040,236.4 1042,239.6 1044,242.8 1046,244.5 1048,245.1 1050,245.6 1052,246.2 1054,246.7 1056,247.3 1058,247.8 1060,248.4 1062,248.9 1064,249.5 1066,249.4 1068,248.8 1070,248.2 1072,247.6 1074,247.0 1076,246.4 1078,245.8 1080,245.2 1082,244.6 1084,244.0 1086,243.4 1088,242.8 1090,242.2 1092,241.8 1094,242.0 1096,242.1 1098,242.3 1100,242.5 1102,242.7 1104,242.8 1106,243.0 1108,243.2 1110,243.4 1112,243.4 1114,243.3 1116,243.3 1118,243.2 1120,243.1 1122,243.1 1124,241.5 1126,238.4 1128,233.7 1130,229.1 1132,225.8 1134,222.7 1136,222.1 1138,221.4 1140,220.8 1142,220.7 1144,221.0 1146,221.3 1148,221.9 1150,222.5 1152,223.0 1154,223.5 1156,223.6 1158,223.7 1160,223.8 1162,223.9 1164,224.0 1166,225.6 1168,228.5 1170,231.7 1172,234.9 1174,238.0 1176,240.5 1178,240.4 1180,240.3 1182,240.2 1184,240.1 1186,239.9 1188,239.8 1190,239.7 1192,239.9 1194,240.1 1196,240.4 1198,240.6 1200,240.8 1202,241.1 1204,237.8 1206,235.1 1208,217.2 1210,211.2 1212,210.0 1214,208.8 1216,207.6 1218,207.5 1220,208.6 1222,209.7 1224,210.8 1226,211.9 1228,213.0 1230,211.7 1232,210.3 1234,209.0 1236,207.7 1238,210.1 1240,204.3 1242,204.8 1244,205.4 1246,206.0 1248,206.5 1250,207.1 1252,212.1 1254,217.9 1256,223.7 1258,228.6 1260,229.6 1262,230.6 1264,231.6 1266,232.6 1268,233.6 1270,234.6 1272,235.6 1274,236.6 1276,237.6 1278,238.1 1280,238.6 1282,239.1 1284,239.6 1286,240.1 1288,240.6 1290,241.1 1292,241.6 1294,242.1 1296,242.4 1298,242.7 1300,243.0 1302,243.5 1304,244.0 1306,244.4 1308,244.9 1310,245.4 1312,245.9 1314,246.1 1316,246.3 1318,246.4 1320,246.6 1322,246.8 1324,246.9 1326,247.1 1328,247.2 1330,247.4 1332,247.5 1334,247.7 1336,247.8 1338,248.0 1340,248.1 1342,248.3 1344,248.5 1346,248.6 1348,248.8 1350,248.9 1352,249.1 1354,249.2 1356,249.4 1358,249.5 1360,249.7 1362,249.9 1364,250.0 1366,250.2 1368,250.5 1370,250.9 1372,251.3 1374,251.7 1376,251.9 1378,252.0 1380,252.0 1382,252.1 1384,252.1 1386,252.2 1388,252.3 1388,311"/>
<polyline fill="none" stroke="rgba(0,0,0,0.22)" stroke-width="0.6" points="474,238.1 476,238.3 478,238.5 480,238.7 482,239.1 484,239.7 486,238.2 488,236.2 490,234.5 492,235.0 494,235.4 496,235.8 498,236.3 500,236.7 502,237.2 504,238.8 506,241.1 508,243.5 510,243.7 512,243.9 514,244.1 516,244.3 518,244.4 520,244.3 522,244.2 524,244.1 526,244.0 528,243.9 530,243.8 532,243.7 534,243.6 536,243.6 538,241.9 540,238.8 542,236.2 544,234.0 546,231.8 548,230.5 550,229.5 552,228.6 554,227.6 556,226.6 558,225.6 560,224.7 562,223.9 564,223.3 566,222.7 568,222.1 570,221.5 572,220.9 574,220.3 576,219.7 578,219.6 580,220.7 582,221.8 584,222.9 586,224.0 588,225.1 590,228.3 592,232.3 594,236.2 596,239.7 598,240.9 600,241.4 602,241.8 604,242.2 606,242.6 608,243.0 610,243.5 612,243.9 614,244.3 616,244.7 618,245.0 620,245.4 622,245.7 624,246.0 626,246.4 628,246.7 630,247.0 632,247.4 634,247.7 636,247.8 638,247.9 640,247.8 642,247.6 644,247.4 646,247.3 648,247.1 650,246.8 652,246.4 654,246.1 656,245.7 658,245.4 660,245.0 662,244.7 664,244.3 666,244.0 668,243.6 670,243.3 672,242.9 674,242.6 676,242.2 678,241.9 680,241.5 682,241.2 684,240.8 686,240.4 688,240.1 690,237.8 692,234.3 694,230.9 696,227.5 698,224.9 700,225.6 702,228.2 704,230.7 706,233.2 708,235.7 710,235.7 712,235.4 714,235.1 716,234.8 718,234.6 720,234.3 722,234.0 724,233.7 726,233.4 728,233.2 730,233.0 732,232.8 734,232.6 736,232.4 738,232.2 740,232.9 742,232.8 744,231.6 746,230.5 748,229.0 750,227.5 752,226.0 754,224.5 756,223.0 758,221.5 760,220.7 762,221.4 764,222.0 766,222.7 768,223.3 770,223.9 772,222.7 774,221.2 776,219.7 778,218.3 780,216.8 782,216.6 784,218.2 786,220.5 788,222.8 790,227.3 792,232.2 794,237.0 796,237.6 798,238.2 800,238.8 802,239.4 804,240.1 806,240.7 808,241.3 810,241.6 812,241.8 814,241.9 816,242.1 818,242.3 820,242.5 822,240.1 824,236.2 826,232.5 828,228.7 830,227.3 832,226.6 834,226.0 836,225.3 838,224.7 840,224.0 842,223.4 844,222.7 846,222.2 848,221.8 850,221.3 852,220.9 854,220.5 856,221.8 858,223.2 860,224.5 862,225.8 864,227.1 866,228.0 868,228.5 870,228.9 872,229.4 874,229.8 876,230.3 878,230.7 880,231.2 882,231.7 884,232.5 886,233.3 888,234.0 890,234.8 892,235.4 894,235.9 896,236.4 898,236.9 900,237.4 902,237.9 904,238.4 906,238.9 908,239.5 910,242.1 912,242.9 914,243.2 916,243.6 918,243.9 920,244.2 922,243.0 924,241.8 926,240.6 928,239.4 930,238.2 932,236.3 934,235.7 936,235.0 938,234.3 940,233.7 942,233.0 944,232.3 946,231.7 948,232.2 950,233.2 952,234.2 954,235.2 956,236.2 958,237.2 960,238.5 962,239.9 964,241.3 966,242.0 968,242.4 970,242.7 972,243.0 974,243.4 976,243.8 978,244.1 980,244.5 982,244.9 984,245.3 986,245.6 988,246.0 990,245.1 992,244.2 994,243.2 996,242.3 998,241.3 1000,240.3 1002,239.4 1004,238.4 1006,237.5 1008,237.5 1010,238.0 1012,238.5 1014,238.9 1016,239.4 1018,239.6 1020,238.7 1022,237.9 1024,237.0 1026,236.2 1028,235.4 1030,234.8 1032,234.3 1034,233.9 1036,233.6 1038,234.5 1040,236.4 1042,239.6 1044,242.8 1046,244.5 1048,245.1 1050,245.6 1052,246.2 1054,246.7 1056,247.3 1058,247.8 1060,248.4 1062,248.9 1064,249.5 1066,249.4 1068,248.8 1070,248.2 1072,247.6 1074,247.0 1076,246.4 1078,245.8 1080,245.2 1082,244.6 1084,244.0 1086,243.4 1088,242.8 1090,242.2 1092,241.8 1094,242.0 1096,242.1 1098,242.3 1100,242.5 1102,242.7 1104,242.8 1106,243.0 1108,243.2 1110,243.4 1112,243.4 1114,243.3 1116,243.3 1118,243.2 1120,243.1 1122,243.1 1124,241.5 1126,238.4 1128,233.7 1130,229.1 1132,225.8 1134,222.7 1136,222.1 1138,221.4 1140,220.8 1142,220.7 1144,221.0 1146,221.3 1148,221.9 1150,222.5 1152,223.0 1154,223.5 1156,223.6 1158,223.7 1160,223.8 1162,223.9 1164,224.0 1166,225.6 1168,228.5 1170,231.7 1172,234.9 1174,238.0 1176,240.5 1178,240.4 1180,240.3 1182,240.2 1184,240.1 1186,239.9 1188,239.8 1190,239.7 1192,239.9 1194,240.1 1196,240.4 1198,240.6 1200,240.8 1202,241.1 1204,237.8 1206,235.1 1208,217.2 1210,211.2 1212,210.0 1214,208.8 1216,207.6 1218,207.5 1220,208.6 1222,209.7 1224,210.8 1226,211.9 1228,213.0 1230,211.7 1232,210.3 1234,209.0 1236,207.7 1238,210.1 1240,204.3 1242,204.8 1244,205.4 1246,206.0 1248,206.5 1250,207.1 1252,212.1 1254,217.9 1256,223.7 1258,228.6 1260,229.6 1262,230.6 1264,231.6 1266,232.6 1268,233.6 1270,234.6 1272,235.6 1274,236.6 1276,237.6 1278,238.1 1280,238.6 1282,239.1 1284,239.6 1286,240.1 1288,240.6 1290,241.1 1292,241.6 1294,242.1 1296,242.4 1298,242.7 1300,243.0 1302,243.5 1304,244.0 1306,244.4 1308,244.9 1310,245.4 1312,245.9 1314,246.1 1316,246.3 1318,246.4 1320,246.6 1322,246.8 1324,246.9 1326,247.1 1328,247.2 1330,247.4 1332,247.5 1334,247.7 1336,247.8 1338,248.0 1340,248.1 1342,248.3 1344,248.5 1346,248.6 1348,248.8 1350,248.9 1352,249.1 1354,249.2 1356,249.4 1358,249.5 1360,249.7 1362,249.9 1364,250.0 1366,250.2 1368,250.5 1370,250.9 1372,251.3 1374,251.7 1376,251.9 1378,252.0 1380,252.0 1382,252.1 1384,252.1 1386,252.2 1388,252.3"/>
<polygon fill="#0050f0" points="474,311 474,239.5 476,239.4 478,239.3 480,239.2 482,239.6 484,240.2 486,238.7 488,237.1 490,236.0 492,236.6 494,237.2 496,237.8 498,238.4 500,239.1 502,239.7 504,240.8 506,242.4 508,244.0 510,244.2 512,244.4 514,244.6 516,244.8 518,244.9 520,244.8 522,244.7 524,244.6 526,244.5 528,244.4 530,244.3 532,244.2 534,244.1 536,244.0 538,242.4 540,239.3 542,237.2 544,235.9 546,234.7 548,233.4 550,232.2 552,230.9 554,229.7 556,228.5 558,227.2 560,226.0 562,225.1 564,224.6 566,224.1 568,223.6 570,223.1 572,222.5 574,222.0 576,221.5 578,221.4 580,222.6 582,223.8 584,225.0 586,226.2 588,227.4 590,230.4 592,234.0 594,237.6 596,241.0 598,242.9 600,243.3 602,243.7 604,244.0 606,244.4 608,244.8 610,245.2 612,245.6 614,245.9 616,246.3 618,246.7 620,247.0 622,247.3 624,247.7 626,248.0 628,248.3 630,248.7 632,249.0 634,249.3 636,249.3 638,249.3 640,249.1 642,248.9 644,248.7 646,248.6 648,248.4 650,248.1 652,247.9 654,247.6 656,247.3 658,247.0 660,246.8 662,246.5 664,246.2 666,246.0 668,245.7 670,245.4 672,245.0 674,244.6 676,244.2 678,243.8 680,243.3 682,242.9 684,242.5 686,242.1 688,241.6 690,239.5 692,236.5 694,233.5 696,230.5 698,227.9 700,228.6 702,231.2 704,233.7 706,236.2 708,238.7 710,238.7 712,238.4 714,238.1 716,237.8 718,237.6 720,237.3 722,237.0 724,236.7 726,236.4 728,236.2 730,236.0 732,235.8 734,235.6 736,235.4 738,235.2 740,235.4 742,235.3 744,234.6 746,233.5 748,232.0 750,230.5 752,229.0 754,227.5 756,226.0 758,224.5 760,223.7 762,224.4 764,225.0 766,225.7 768,226.3 770,226.9 772,225.7 774,224.2 776,222.7 778,221.3 780,219.8 782,219.6 784,221.0 786,222.8 788,224.5 790,229.3 792,234.7 794,240.0 796,240.5 798,241.0 800,241.5 802,242.0 804,242.5 806,243.0 808,243.5 810,243.8 812,244.0 814,244.2 816,244.4 818,244.7 820,244.9 822,243.1 824,239.2 826,235.5 828,231.7 830,230.3 832,229.6 834,229.0 836,228.3 838,227.7 840,227.0 842,226.4 844,225.7 846,225.2 848,224.8 850,224.3 852,223.9 854,223.5 856,224.8 858,226.2 860,227.5 862,228.8 864,230.1 866,231.0 868,231.5 870,231.9 872,232.4 874,232.8 876,233.3 878,233.7 880,234.2 882,234.7 884,235.5 886,236.3 888,237.0 890,237.8 892,238.4 894,238.9 896,239.4 898,239.9 900,240.4 902,240.9 904,241.4 906,241.9 908,242.5 910,244.0 912,244.7 914,245.1 916,245.5 918,245.9 920,246.3 922,245.1 924,244.0 926,242.9 928,241.7 930,240.6 932,239.3 934,238.7 936,238.0 938,237.3 940,236.7 942,236.0 944,235.3 946,234.7 948,235.2 950,236.2 952,237.2 954,238.2 956,239.2 958,240.2 960,241.4 962,242.6 964,243.8 966,244.4 968,244.7 970,245.1 972,245.4 974,245.7 976,246.0 978,246.4 980,246.7 982,247.1 984,247.4 986,247.7 988,248.1 990,247.3 992,246.4 994,245.5 996,244.5 998,243.6 1000,242.7 1002,241.7 1004,240.8 1006,239.9 1008,239.7 1010,239.8 1012,239.9 1014,240.0 1016,240.1 1018,240.1 1020,239.5 1022,239.0 1024,238.4 1026,237.9 1028,237.4 1030,236.7 1032,236.0 1034,235.2 1036,234.8 1038,236.9 1040,239.4 1042,242.6 1044,245.8 1046,247.5 1048,248.1 1050,248.6 1052,249.2 1054,249.7 1056,250.3 1058,250.8 1060,251.4 1062,251.9 1064,252.5 1066,252.4 1068,251.8 1070,251.2 1072,250.6 1074,250.0 1076,249.4 1078,248.8 1080,248.2 1082,247.6 1084,247.0 1086,246.4 1088,245.8 1090,245.2 1092,244.7 1094,244.8 1096,244.9 1098,245.0 1100,245.1 1102,245.2 1104,245.3 1106,245.5 1108,245.6 1110,245.7 1112,245.7 1114,245.7 1116,245.7 1118,245.7 1120,245.7 1122,245.7 1124,242.6 1126,238.9 1128,234.2 1130,229.6 1132,227.6 1134,225.7 1136,225.1 1138,224.4 1140,223.8 1142,223.7 1144,224.0 1146,224.3 1148,224.7 1150,225.2 1152,225.6 1154,226.0 1156,226.2 1158,226.3 1160,226.5 1162,226.7 1164,226.8 1166,227.8 1168,230.3 1170,233.3 1172,236.4 1174,239.4 1176,241.8 1178,241.8 1180,241.8 1182,241.8 1184,241.8 1186,241.8 1188,241.8 1190,241.8 1192,242.0 1194,242.2 1196,242.4 1198,242.5 1200,242.7 1202,242.9 1204,240.6 1206,238.1 1208,225.4 1210,224.1 1212,222.9 1214,221.6 1216,221.1 1218,221.4 1220,221.7 1222,221.9 1224,222.2 1226,222.5 1228,222.7 1230,223.0 1232,220.7 1234,218.4 1236,216.1 1238,213.1 1240,207.2 1242,207.7 1244,208.1 1246,208.6 1248,209.1 1250,209.5 1252,214.4 1254,220.0 1256,225.7 1258,230.4 1260,231.5 1262,232.6 1264,233.7 1266,234.8 1268,235.9 1270,237.0 1272,238.2 1274,239.3 1276,240.3 1278,240.8 1280,241.3 1282,241.8 1284,242.3 1286,242.8 1288,243.3 1290,243.8 1292,244.3 1294,244.8 1296,245.2 1298,245.6 1300,246.0 1302,246.5 1304,247.0 1306,247.4 1308,247.9 1310,248.4 1312,248.9 1314,249.1 1316,249.3 1318,249.4 1320,249.6 1322,249.8 1324,249.9 1326,250.1 1328,250.2 1330,250.4 1332,250.5 1334,250.7 1336,250.8 1338,251.0 1340,251.1 1342,251.3 1344,251.5 1346,251.6 1348,251.8 1350,251.9 1352,252.1 1354,252.2 1356,252.4 1358,252.5 1360,252.7 1362,252.9 1364,253.0 1366,253.2 1368,253.4 1370,253.7 1372,254.0 1374,254.3 1376,254.5 1378,254.6 1380,254.7 1382,254.8 1384,254.9 1386,255.0 1388,255.1 1388,311"/>
<polyline fill="none" stroke="rgba(0,0,0,0.22)" stroke-width="0.6" points="474,239.5 476,239.4 478,239.3 480,239.2 482,239.6 484,240.2 486,238.7 488,237.1 490,236.0 492,236.6 494,237.2 496,237.8 498,238.4 500,239.1 502,239.7 504,240.8 506,242.4 508,244.0 510,244.2 512,244.4 514,244.6 516,244.8 518,244.9 520,244.8 522,244.7 524,244.6 526,244.5 528,244.4 530,244.3 532,244.2 534,244.1 536,244.0 538,242.4 540,239.3 542,237.2 544,235.9 546,234.7 548,233.4 550,232.2 552,230.9 554,229.7 556,228.5 558,227.2 560,226.0 562,225.1 564,224.6 566,224.1 568,223.6 570,223.1 572,222.5 574,222.0 576,221.5 578,221.4 580,222.6 582,223.8 584,225.0 586,226.2 588,227.4 590,230.4 592,234.0 594,237.6 596,241.0 598,242.9 600,243.3 602,243.7 604,244.0 606,244.4 608,244.8 610,245.2 612,245.6 614,245.9 616,246.3 618,246.7 620,247.0 622,247.3 624,247.7 626,248.0 628,248.3 630,248.7 632,249.0 634,249.3 636,249.3 638,249.3 640,249.1 642,248.9 644,248.7 646,248.6 648,248.4 650,248.1 652,247.9 654,247.6 656,247.3 658,247.0 660,246.8 662,246.5 664,246.2 666,246.0 668,245.7 670,245.4 672,245.0 674,244.6 676,244.2 678,243.8 680,243.3 682,242.9 684,242.5 686,242.1 688,241.6 690,239.5 692,236.5 694,233.5 696,230.5 698,227.9 700,228.6 702,231.2 704,233.7 706,236.2 708,238.7 710,238.7 712,238.4 714,238.1 716,237.8 718,237.6 720,237.3 722,237.0 724,236.7 726,236.4 728,236.2 730,236.0 732,235.8 734,235.6 736,235.4 738,235.2 740,235.4 742,235.3 744,234.6 746,233.5 748,232.0 750,230.5 752,229.0 754,227.5 756,226.0 758,224.5 760,223.7 762,224.4 764,225.0 766,225.7 768,226.3 770,226.9 772,225.7 774,224.2 776,222.7 778,221.3 780,219.8 782,219.6 784,221.0 786,222.8 788,224.5 790,229.3 792,234.7 794,240.0 796,240.5 798,241.0 800,241.5 802,242.0 804,242.5 806,243.0 808,243.5 810,243.8 812,244.0 814,244.2 816,244.4 818,244.7 820,244.9 822,243.1 824,239.2 826,235.5 828,231.7 830,230.3 832,229.6 834,229.0 836,228.3 838,227.7 840,227.0 842,226.4 844,225.7 846,225.2 848,224.8 850,224.3 852,223.9 854,223.5 856,224.8 858,226.2 860,227.5 862,228.8 864,230.1 866,231.0 868,231.5 870,231.9 872,232.4 874,232.8 876,233.3 878,233.7 880,234.2 882,234.7 884,235.5 886,236.3 888,237.0 890,237.8 892,238.4 894,238.9 896,239.4 898,239.9 900,240.4 902,240.9 904,241.4 906,241.9 908,242.5 910,244.0 912,244.7 914,245.1 916,245.5 918,245.9 920,246.3 922,245.1 924,244.0 926,242.9 928,241.7 930,240.6 932,239.3 934,238.7 936,238.0 938,237.3 940,236.7 942,236.0 944,235.3 946,234.7 948,235.2 950,236.2 952,237.2 954,238.2 956,239.2 958,240.2 960,241.4 962,242.6 964,243.8 966,244.4 968,244.7 970,245.1 972,245.4 974,245.7 976,246.0 978,246.4 980,246.7 982,247.1 984,247.4 986,247.7 988,248.1 990,247.3 992,246.4 994,245.5 996,244.5 998,243.6 1000,242.7 1002,241.7 1004,240.8 1006,239.9 1008,239.7 1010,239.8 1012,239.9 1014,240.0 1016,240.1 1018,240.1 1020,239.5 1022,239.0 1024,238.4 1026,237.9 1028,237.4 1030,236.7 1032,236.0 1034,235.2 1036,234.8 1038,236.9 1040,239.4 1042,242.6 1044,245.8 1046,247.5 1048,248.1 1050,248.6 1052,249.2 1054,249.7 1056,250.3 1058,250.8 1060,251.4 1062,251.9 1064,252.5 1066,252.4 1068,251.8 1070,251.2 1072,250.6 1074,250.0 1076,249.4 1078,248.8 1080,248.2 1082,247.6 1084,247.0 1086,246.4 1088,245.8 1090,245.2 1092,244.7 1094,244.8 1096,244.9 1098,245.0 1100,245.1 1102,245.2 1104,245.3 1106,245.5 1108,245.6 1110,245.7 1112,245.7 1114,245.7 1116,245.7 1118,245.7 1120,245.7 1122,245.7 1124,242.6 1126,238.9 1128,234.2 1130,229.6 1132,227.6 1134,225.7 1136,225.1 1138,224.4 1140,223.8 1142,223.7 1144,224.0 1146,224.3 1148,224.7 1150,225.2 1152,225.6 1154,226.0 1156,226.2 1158,226.3 1160,226.5 1162,226.7 1164,226.8 1166,227.8 1168,230.3 1170,233.3 1172,236.4 1174,239.4 1176,241.8 1178,241.8 1180,241.8 1182,241.8 1184,241.8 1186,241.8 1188,241.8 1190,241.8 1192,242.0 1194,242.2 1196,242.4 1198,242.5 1200,242.7 1202,242.9 1204,240.6 1206,238.1 1208,225.4 1210,224.1 1212,222.9 1214,221.6 1216,221.1 1218,221.4 1220,221.7 1222,221.9 1224,222.2 1226,222.5 1228,222.7 1230,223.0 1232,220.7 1234,218.4 1236,216.1 1238,213.1 1240,207.2 1242,207.7 1244,208.1 1246,208.6 1248,209.1 1250,209.5 1252,214.4 1254,220.0 1256,225.7 1258,230.4 1260,231.5 1262,232.6 1264,233.7 1266,234.8 1268,235.9 1270,237.0 1272,238.2 1274,239.3 1276,240.3 1278,240.8 1280,241.3 1282,241.8 1284,242.3 1286,242.8 1288,243.3 1290,243.8 1292,244.3 1294,244.8 1296,245.2 1298,245.6 1300,246.0 1302,246.5 1304,247.0 1306,247.4 1308,247.9 1310,248.4 1312,248.9 1314,249.1 1316,249.3 1318,249.4 1320,249.6 1322,249.8 1324,249.9 1326,250.1 1328,250.2 1330,250.4 1332,250.5 1334,250.7 1336,250.8 1338,251.0 1340,251.1 1342,251.3 1344,251.5 1346,251.6 1348,251.8 1350,251.9 1352,252.1 1354,252.2 1356,252.4 1358,252.5 1360,252.7 1362,252.9 1364,253.0 1366,253.2 1368,253.4 1370,253.7 1372,254.0 1374,254.3 1376,254.5 1378,254.6 1380,254.7 1382,254.8 1384,254.9 1386,255.0 1388,255.1"/>
<polygon fill="#10a0f8" points="474,311 474,241.0 476,240.6 478,240.1 480,239.7 482,240.1 484,240.6 486,239.2 488,237.9 490,237.5 492,238.3 494,239.1 496,239.8 498,240.6 500,241.4 502,242.2 504,242.9 506,243.7 508,244.5 510,244.7 512,244.9 514,245.1 516,245.3 518,245.4 520,245.3 522,245.2 524,245.1 526,245.0 528,244.9 530,244.8 532,244.7 534,244.6 536,244.5 538,242.9 540,239.8 542,238.2 544,237.9 546,237.6 548,236.4 550,234.8 552,233.3 554,231.8 556,230.3 558,228.8 560,227.3 562,226.3 564,225.9 566,225.4 568,225.0 570,224.6 572,224.2 574,223.7 576,223.3 578,223.3 580,224.6 582,225.9 584,227.1 586,228.4 588,229.7 590,232.4 592,235.7 594,238.9 596,242.2 598,244.9 600,245.2 602,245.5 604,245.9 606,246.2 608,246.6 610,246.9 612,247.3 614,247.6 616,247.9 618,248.3 620,248.6 622,249.0 624,249.3 626,249.6 628,250.0 630,250.3 632,250.7 634,251.0 636,250.8 638,250.6 640,250.4 642,250.2 644,250.0 646,249.8 648,249.7 650,249.5 652,249.3 654,249.1 656,248.9 658,248.7 660,248.5 662,248.3 664,248.1 666,247.9 668,247.7 670,247.5 672,247.1 674,246.6 676,246.1 678,245.6 680,245.2 682,244.7 684,244.2 686,243.7 688,243.2 690,241.3 692,238.7 694,236.1 696,233.5 698,230.9 700,231.6 702,234.2 704,236.7 706,239.2 708,241.7 710,241.7 712,241.4 714,241.1 716,240.8 718,240.6 720,240.3 722,240.0 724,239.7 726,239.4 728,239.2 730,239.0 732,238.8 734,238.6 736,238.4 738,238.2 740,238.0 742,237.8 744,237.6 746,236.5 748,235.0 750,233.5 752,232.0 754,230.5 756,229.0 758,227.5 760,226.7 762,227.4 764,228.0 766,228.7 768,229.3 770,229.9 772,228.7 774,227.2 776,225.7 778,224.3 780,222.8 782,222.6 784,223.8 786,225.0 788,226.3 790,231.3 792,237.3 794,243.0 796,243.4 798,243.8 800,244.1 802,244.5 804,244.9 806,245.2 808,245.6 810,245.9 812,246.2 814,246.5 816,246.8 818,247.0 820,247.3 822,246.0 824,242.2 826,238.5 828,234.7 830,233.3 832,232.6 834,232.0 836,231.3 838,230.7 840,230.0 842,229.4 844,228.7 846,228.2 848,227.8 850,227.3 852,226.9 854,226.5 856,227.8 858,229.2 860,230.5 862,231.8 864,233.1 866,234.0 868,234.5 870,234.9 872,235.4 874,235.8 876,236.3 878,236.7 880,237.2 882,237.7 884,238.5 886,239.3 888,240.0 890,240.8 892,241.4 894,241.9 896,242.4 898,242.9 900,243.4 902,243.9 904,244.4 906,244.9 908,245.4 910,245.9 912,246.4 914,246.9 916,247.4 918,247.9 920,248.4 922,247.3 924,246.2 926,245.2 928,244.1 930,243.0 932,242.3 934,241.7 936,241.0 938,240.3 940,239.7 942,239.0 944,238.3 946,237.7 948,238.2 950,239.2 952,240.2 954,241.2 956,242.2 958,243.2 960,244.2 962,245.2 964,246.2 966,246.8 968,247.1 970,247.4 972,247.7 974,248.0 976,248.3 978,248.6 980,248.9 982,249.2 984,249.5 986,249.8 988,250.1 990,249.5 992,248.6 994,247.7 996,246.8 998,245.9 1000,245.0 1002,244.1 1004,243.2 1006,242.3 1008,241.8 1010,241.6 1012,241.3 1014,241.1 1016,240.8 1018,240.6 1020,240.3 1022,240.1 1024,239.9 1026,239.6 1028,239.4 1030,238.6 1032,237.6 1034,236.6 1036,236.0 1038,239.2 1040,242.4 1042,245.6 1044,248.8 1046,250.5 1048,251.1 1050,251.6 1052,252.2 1054,252.7 1056,253.3 1058,253.8 1060,254.4 1062,254.9 1064,255.5 1066,255.4 1068,254.8 1070,254.2 1072,253.6 1074,253.0 1076,252.4 1078,251.8 1080,251.2 1082,250.6 1084,250.0 1086,249.4 1088,248.8 1090,248.2 1092,247.6 1094,247.6 1096,247.6 1098,247.7 1100,247.7 1102,247.8 1104,247.9 1106,247.9 1108,248.0 1110,248.0 1112,248.1 1114,248.2 1116,248.2 1118,248.3 1120,248.3 1122,248.4 1124,243.8 1126,239.4 1128,234.7 1130,230.1 1132,229.4 1134,228.7 1136,228.1 1138,227.4 1140,226.8 1142,226.7 1144,227.0 1146,227.3 1148,227.6 1150,227.9 1152,228.1 1154,228.4 1156,228.7 1158,228.9 1160,229.2 1162,229.4 1164,229.7 1166,229.9 1168,232.1 1170,235.0 1172,237.9 1174,240.7 1176,243.0 1178,243.2 1180,243.3 1182,243.4 1184,243.6 1186,243.7 1188,243.8 1190,243.9 1192,244.1 1194,244.2 1196,244.3 1198,244.5 1200,244.6 1202,244.7 1204,243.5 1206,241.1 1208,238.7 1210,236.2 1212,235.7 1214,235.4 1216,235.0 1218,234.7 1220,234.4 1222,234.1 1224,233.7 1226,233.4 1228,233.1 1230,232.0 1232,230.8 1234,229.6 1236,224.7 1238,216.1 1240,210.2 1242,210.6 1244,210.9 1246,211.3 1248,211.6 1250,211.9 1252,216.7 1254,222.1 1256,227.6 1258,232.2 1260,233.5 1262,234.7 1264,235.9 1266,237.1 1268,238.3 1270,239.5 1272,240.7 1274,241.9 1276,243.0 1278,243.5 1280,244.0 1282,244.5 1284,245.0 1286,245.5 1288,246.0 1290,246.5 1292,247.0 1294,247.5 1296,248.0 1298,248.5 1300,249.0 1302,249.5 1304,250.0 1306,250.4 1308,250.9 1310,251.4 1312,251.9 1314,252.1 1316,252.3 1318,252.4 1320,252.6 1322,252.8 1324,252.9 1326,253.1 1328,253.2 1330,253.4 1332,253.5 1334,253.7 1336,253.8 1338,254.0 1340,254.1 1342,254.3 1344,254.5 1346,254.6 1348,254.8 1350,254.9 1352,255.1 1354,255.2 1356,255.4 1358,255.5 1360,255.7 1362,255.9 1364,256.0 1366,256.2 1368,256.4 1370,256.5 1372,256.7 1374,256.9 1376,257.0 1378,257.2 1380,257.3 1382,257.5 1384,257.7 1386,257.8 1388,258.0 1388,311"/>
<polyline fill="none" stroke="rgba(0,0,0,0.22)" stroke-width="0.6" points="474,241.0 476,240.6 478,240.1 480,239.7 482,240.1 484,240.6 486,239.2 488,237.9 490,237.5 492,238.3 494,239.1 496,239.8 498,240.6 500,241.4 502,242.2 504,242.9 506,243.7 508,244.5 510,244.7 512,244.9 514,245.1 516,245.3 518,245.4 520,245.3 522,245.2 524,245.1 526,245.0 528,244.9 530,244.8 532,244.7 534,244.6 536,244.5 538,242.9 540,239.8 542,238.2 544,237.9 546,237.6 548,236.4 550,234.8 552,233.3 554,231.8 556,230.3 558,228.8 560,227.3 562,226.3 564,225.9 566,225.4 568,225.0 570,224.6 572,224.2 574,223.7 576,223.3 578,223.3 580,224.6 582,225.9 584,227.1 586,228.4 588,229.7 590,232.4 592,235.7 594,238.9 596,242.2 598,244.9 600,245.2 602,245.5 604,245.9 606,246.2 608,246.6 610,246.9 612,247.3 614,247.6 616,247.9 618,248.3 620,248.6 622,249.0 624,249.3 626,249.6 628,250.0 630,250.3 632,250.7 634,251.0 636,250.8 638,250.6 640,250.4 642,250.2 644,250.0 646,249.8 648,249.7 650,249.5 652,249.3 654,249.1 656,248.9 658,248.7 660,248.5 662,248.3 664,248.1 666,247.9 668,247.7 670,247.5 672,247.1 674,246.6 676,246.1 678,245.6 680,245.2 682,244.7 684,244.2 686,243.7 688,243.2 690,241.3 692,238.7 694,236.1 696,233.5 698,230.9 700,231.6 702,234.2 704,236.7 706,239.2 708,241.7 710,241.7 712,241.4 714,241.1 716,240.8 718,240.6 720,240.3 722,240.0 724,239.7 726,239.4 728,239.2 730,239.0 732,238.8 734,238.6 736,238.4 738,238.2 740,238.0 742,237.8 744,237.6 746,236.5 748,235.0 750,233.5 752,232.0 754,230.5 756,229.0 758,227.5 760,226.7 762,227.4 764,228.0 766,228.7 768,229.3 770,229.9 772,228.7 774,227.2 776,225.7 778,224.3 780,222.8 782,222.6 784,223.8 786,225.0 788,226.3 790,231.3 792,237.3 794,243.0 796,243.4 798,243.8 800,244.1 802,244.5 804,244.9 806,245.2 808,245.6 810,245.9 812,246.2 814,246.5 816,246.8 818,247.0 820,247.3 822,246.0 824,242.2 826,238.5 828,234.7 830,233.3 832,232.6 834,232.0 836,231.3 838,230.7 840,230.0 842,229.4 844,228.7 846,228.2 848,227.8 850,227.3 852,226.9 854,226.5 856,227.8 858,229.2 860,230.5 862,231.8 864,233.1 866,234.0 868,234.5 870,234.9 872,235.4 874,235.8 876,236.3 878,236.7 880,237.2 882,237.7 884,238.5 886,239.3 888,240.0 890,240.8 892,241.4 894,241.9 896,242.4 898,242.9 900,243.4 902,243.9 904,244.4 906,244.9 908,245.4 910,245.9 912,246.4 914,246.9 916,247.4 918,247.9 920,248.4 922,247.3 924,246.2 926,245.2 928,244.1 930,243.0 932,242.3 934,241.7 936,241.0 938,240.3 940,239.7 942,239.0 944,238.3 946,237.7 948,238.2 950,239.2 952,240.2 954,241.2 956,242.2 958,243.2 960,244.2 962,245.2 964,246.2 966,246.8 968,247.1 970,247.4 972,247.7 974,248.0 976,248.3 978,248.6 980,248.9 982,249.2 984,249.5 986,249.8 988,250.1 990,249.5 992,248.6 994,247.7 996,246.8 998,245.9 1000,245.0 1002,244.1 1004,243.2 1006,242.3 1008,241.8 1010,241.6 1012,241.3 1014,241.1 1016,240.8 1018,240.6 1020,240.3 1022,240.1 1024,239.9 1026,239.6 1028,239.4 1030,238.6 1032,237.6 1034,236.6 1036,236.0 1038,239.2 1040,242.4 1042,245.6 1044,248.8 1046,250.5 1048,251.1 1050,251.6 1052,252.2 1054,252.7 1056,253.3 1058,253.8 1060,254.4 1062,254.9 1064,255.5 1066,255.4 1068,254.8 1070,254.2 1072,253.6 1074,253.0 1076,252.4 1078,251.8 1080,251.2 1082,250.6 1084,250.0 1086,249.4 1088,248.8 1090,248.2 1092,247.6 1094,247.6 1096,247.6 1098,247.7 1100,247.7 1102,247.8 1104,247.9 1106,247.9 1108,248.0 1110,248.0 1112,248.1 1114,248.2 1116,248.2 1118,248.3 1120,248.3 1122,248.4 1124,243.8 1126,239.4 1128,234.7 1130,230.1 1132,229.4 1134,228.7 1136,228.1 1138,227.4 1140,226.8 1142,226.7 1144,227.0 1146,227.3 1148,227.6 1150,227.9 1152,228.1 1154,228.4 1156,228.7 1158,228.9 1160,229.2 1162,229.4 1164,229.7 1166,229.9 1168,232.1 1170,235.0 1172,237.9 1174,240.7 1176,243.0 1178,243.2 1180,243.3 1182,243.4 1184,243.6 1186,243.7 1188,243.8 1190,243.9 1192,244.1 1194,244.2 1196,244.3 1198,244.5 1200,244.6 1202,244.7 1204,243.5 1206,241.1 1208,238.7 1210,236.2 1212,235.7 1214,235.4 1216,235.0 1218,234.7 1220,234.4 1222,234.1 1224,233.7 1226,233.4 1228,233.1 1230,232.0 1232,230.8 1234,229.6 1236,224.7 1238,216.1 1240,210.2 1242,210.6 1244,210.9 1246,211.3 1248,211.6 1250,211.9 1252,216.7 1254,222.1 1256,227.6 1258,232.2 1260,233.5 1262,234.7 1264,235.9 1266,237.1 1268,238.3 1270,239.5 1272,240.7 1274,241.9 1276,243.0 1278,243.5 1280,244.0 1282,244.5 1284,245.0 1286,245.5 1288,246.0 1290,246.5 1292,247.0 1294,247.5 1296,248.0 1298,248.5 1300,249.0 1302,249.5 1304,250.0 1306,250.4 1308,250.9 1310,251.4 1312,251.9 1314,252.1 1316,252.3 1318,252.4 1320,252.6 1322,252.8 1324,252.9 1326,253.1 1328,253.2 1330,253.4 1332,253.5 1334,253.7 1336,253.8 1338,254.0 1340,254.1 1342,254.3 1344,254.5 1346,254.6 1348,254.8 1350,254.9 1352,255.1 1354,255.2 1356,255.4 1358,255.5 1360,255.7 1362,255.9 1364,256.0 1366,256.2 1368,256.4 1370,256.5 1372,256.7 1374,256.9 1376,257.0 1378,257.2 1380,257.3 1382,257.5 1384,257.7 1386,257.8 1388,258.0"/>
<polygon fill="#00f8f8" points="474,311 474,243.0 476,242.5 478,242.0 480,241.5 482,241.6 484,242.1 486,240.7 488,239.5 490,239.0 492,239.9 494,240.8 496,241.8 498,242.7 500,243.6 502,244.5 504,245.4 506,246.4 508,246.9 510,247.4 512,247.8 514,248.3 516,248.7 518,249.0 520,249.0 522,249.0 524,249.0 526,249.0 528,249.0 530,249.0 532,249.0 534,249.0 536,249.0 538,249.0 540,248.1 542,245.7 544,243.3 546,240.8 548,238.4 550,236.3 552,234.8 554,233.7 556,232.7 558,231.6 560,230.6 562,229.8 564,229.3 566,228.8 568,228.3 570,227.9 572,227.4 574,226.9 576,226.8 578,228.4 580,230.1 582,231.8 584,233.5 586,235.2 588,237.1 590,239.1 592,241.1 594,243.0 596,245.0 598,246.7 600,247.1 602,247.5 604,247.9 606,248.3 608,248.7 610,249.1 612,249.4 614,249.8 616,250.2 618,250.6 620,251.0 622,251.4 624,251.8 626,252.1 628,252.3 630,252.6 632,252.8 634,253.0 636,253.2 638,253.4 640,253.7 642,253.9 644,253.8 646,253.5 648,253.1 650,252.7 652,252.4 654,252.0 656,251.6 658,251.3 660,250.9 662,250.6 664,250.2 666,249.8 668,249.5 670,249.1 672,248.7 674,248.2 676,247.7 678,247.3 680,246.8 682,246.3 684,245.9 686,245.4 688,245.0 690,244.0 692,242.9 694,241.7 696,240.6 698,239.4 700,239.7 702,240.7 704,241.7 706,242.8 708,243.8 710,243.7 712,243.5 714,243.3 716,243.1 718,242.9 720,242.7 722,242.5 724,242.3 726,242.1 728,242.1 730,242.2 732,242.3 734,242.4 736,242.5 738,242.6 740,242.7 742,242.9 744,243.0 746,242.7 748,242.2 750,241.7 752,241.2 754,240.6 756,240.1 758,239.6 760,239.4 762,239.5 764,239.7 766,239.8 768,240.0 770,240.1 772,240.3 774,240.4 776,240.6 778,240.8 780,240.9 782,241.5 784,242.5 786,243.5 788,244.5 790,245.5 792,246.5 794,246.8 796,247.0 798,247.2 800,247.5 802,247.7 804,247.9 806,248.1 808,248.3 810,248.3 812,248.1 814,248.0 816,248.3 818,248.5 820,248.8 822,247.5 824,246.9 826,246.7 828,246.5 830,246.3 832,246.1 834,245.9 836,245.7 838,245.5 840,245.3 842,245.1 844,244.9 846,244.5 848,243.9 850,243.3 852,242.7 854,242.1 856,241.4 858,240.8 860,240.2 862,239.6 864,239.5 866,239.9 868,240.3 870,240.7 872,241.1 874,241.5 876,241.9 878,242.3 880,242.7 882,243.1 884,243.6 886,244.1 888,244.6 890,245.1 892,245.6 894,246.1 896,246.6 898,247.1 900,247.5 902,247.8 904,248.0 906,248.3 908,248.5 910,248.8 912,249.0 914,249.3 916,249.5 918,249.8 920,250.0 922,249.0 924,247.9 926,246.9 928,245.8 930,244.8 932,244.4 934,244.0 936,243.7 938,243.3 940,242.9 942,242.5 944,242.2 946,241.8 948,241.4 950,241.0 952,242.1 954,243.2 956,244.4 958,245.5 960,246.6 962,247.8 964,248.9 966,249.6 968,250.1 970,250.5 972,251.0 974,251.5 976,251.9 978,252.4 980,252.9 982,253.3 984,253.8 986,254.2 988,254.7 990,254.1 992,253.2 994,252.3 996,251.4 998,250.5 1000,249.6 1002,248.7 1004,247.8 1006,246.9 1008,246.2 1010,245.7 1012,245.2 1014,244.7 1016,244.2 1018,243.7 1020,243.2 1022,242.7 1024,242.2 1026,241.6 1028,241.1 1030,242.3 1032,244.1 1034,245.9 1036,247.7 1038,249.5 1040,251.3 1042,253.1 1044,254.9 1046,255.9 1048,256.3 1050,256.6 1052,257.0 1054,257.3 1056,257.7 1058,258.1 1060,258.4 1062,258.8 1064,259.1 1066,259.0 1068,258.4 1070,257.7 1072,257.1 1074,256.5 1076,255.9 1078,255.3 1080,254.7 1082,254.1 1084,253.5 1086,252.9 1088,252.3 1090,251.7 1092,251.1 1094,251.1 1096,251.1 1098,251.2 1100,251.3 1102,251.3 1104,251.4 1106,251.5 1108,251.5 1110,251.6 1112,251.7 1114,251.7 1116,251.8 1118,251.9 1120,251.9 1122,252.0 1124,246.5 1126,241.0 1128,236.2 1130,231.6 1132,230.9 1134,230.2 1136,230.0 1138,230.0 1140,230.0 1142,230.5 1144,231.5 1146,232.4 1148,233.3 1150,234.3 1152,235.2 1154,236.0 1156,236.0 1158,236.0 1160,236.0 1162,236.0 1164,236.0 1166,236.0 1168,237.7 1170,240.1 1172,242.4 1174,244.7 1176,246.6 1178,246.6 1180,246.6 1182,246.6 1184,246.6 1186,246.6 1188,246.6 1190,246.6 1192,246.6 1194,246.6 1196,246.6 1198,246.6 1200,246.6 1202,246.6 1204,246.4 1206,246.1 1208,245.8 1210,245.4 1212,245.1 1214,244.8 1216,244.5 1218,244.3 1220,244.0 1222,243.8 1224,243.5 1226,243.3 1228,243.0 1230,241.6 1232,239.8 1234,238.1 1236,236.3 1238,234.6 1240,232.8 1242,231.1 1244,231.4 1246,233.7 1248,236.1 1250,238.4 1252,240.8 1254,243.0 1256,243.4 1258,243.8 1260,244.3 1262,244.7 1264,245.1 1266,245.5 1268,245.9 1270,246.3 1272,246.7 1274,247.1 1276,247.5 1278,248.0 1280,248.5 1282,249.0 1284,249.5 1286,250.0 1288,250.5 1290,251.0 1292,251.5 1294,252.0 1296,252.3 1298,252.6 1300,252.9 1302,253.2 1304,253.5 1306,253.8 1308,254.1 1310,254.4 1312,254.8 1314,254.9 1316,255.0 1318,255.1 1320,255.2 1322,255.3 1324,255.5 1326,255.6 1328,255.7 1330,255.8 1332,255.9 1334,256.0 1336,256.1 1338,256.3 1340,256.4 1342,256.5 1344,256.6 1346,256.7 1348,256.8 1350,256.9 1352,257.0 1354,257.2 1356,257.3 1358,257.4 1360,257.5 1362,257.9 1364,258.3 1366,258.7 1368,259.1 1370,259.5 1372,259.9 1374,260.2 1376,260.6 1378,261.0 1380,261.4 1382,261.8 1384,262.2 1386,262.6 1388,263.0 1388,311"/>
<polyline fill="none" stroke="rgba(0,0,0,0.22)" stroke-width="0.6" points="474,243.0 476,242.5 478,242.0 480,241.5 482,241.6 484,242.1 486,240.7 488,239.5 490,239.0 492,239.9 494,240.8 496,241.8 498,242.7 500,243.6 502,244.5 504,245.4 506,246.4 508,246.9 510,247.4 512,247.8 514,248.3 516,248.7 518,249.0 520,249.0 522,249.0 524,249.0 526,249.0 528,249.0 530,249.0 532,249.0 534,249.0 536,249.0 538,249.0 540,248.1 542,245.7 544,243.3 546,240.8 548,238.4 550,236.3 552,234.8 554,233.7 556,232.7 558,231.6 560,230.6 562,229.8 564,229.3 566,228.8 568,228.3 570,227.9 572,227.4 574,226.9 576,226.8 578,228.4 580,230.1 582,231.8 584,233.5 586,235.2 588,237.1 590,239.1 592,241.1 594,243.0 596,245.0 598,246.7 600,247.1 602,247.5 604,247.9 606,248.3 608,248.7 610,249.1 612,249.4 614,249.8 616,250.2 618,250.6 620,251.0 622,251.4 624,251.8 626,252.1 628,252.3 630,252.6 632,252.8 634,253.0 636,253.2 638,253.4 640,253.7 642,253.9 644,253.8 646,253.5 648,253.1 650,252.7 652,252.4 654,252.0 656,251.6 658,251.3 660,250.9 662,250.6 664,250.2 666,249.8 668,249.5 670,249.1 672,248.7 674,248.2 676,247.7 678,247.3 680,246.8 682,246.3 684,245.9 686,245.4 688,245.0 690,244.0 692,242.9 694,241.7 696,240.6 698,239.4 700,239.7 702,240.7 704,241.7 706,242.8 708,243.8 710,243.7 712,243.5 714,243.3 716,243.1 718,242.9 720,242.7 722,242.5 724,242.3 726,242.1 728,242.1 730,242.2 732,242.3 734,242.4 736,242.5 738,242.6 740,242.7 742,242.9 744,243.0 746,242.7 748,242.2 750,241.7 752,241.2 754,240.6 756,240.1 758,239.6 760,239.4 762,239.5 764,239.7 766,239.8 768,240.0 770,240.1 772,240.3 774,240.4 776,240.6 778,240.8 780,240.9 782,241.5 784,242.5 786,243.5 788,244.5 790,245.5 792,246.5 794,246.8 796,247.0 798,247.2 800,247.5 802,247.7 804,247.9 806,248.1 808,248.3 810,248.3 812,248.1 814,248.0 816,248.3 818,248.5 820,248.8 822,247.5 824,246.9 826,246.7 828,246.5 830,246.3 832,246.1 834,245.9 836,245.7 838,245.5 840,245.3 842,245.1 844,244.9 846,244.5 848,243.9 850,243.3 852,242.7 854,242.1 856,241.4 858,240.8 860,240.2 862,239.6 864,239.5 866,239.9 868,240.3 870,240.7 872,241.1 874,241.5 876,241.9 878,242.3 880,242.7 882,243.1 884,243.6 886,244.1 888,244.6 890,245.1 892,245.6 894,246.1 896,246.6 898,247.1 900,247.5 902,247.8 904,248.0 906,248.3 908,248.5 910,248.8 912,249.0 914,249.3 916,249.5 918,249.8 920,250.0 922,249.0 924,247.9 926,246.9 928,245.8 930,244.8 932,244.4 934,244.0 936,243.7 938,243.3 940,242.9 942,242.5 944,242.2 946,241.8 948,241.4 950,241.0 952,242.1 954,243.2 956,244.4 958,245.5 960,246.6 962,247.8 964,248.9 966,249.6 968,250.1 970,250.5 972,251.0 974,251.5 976,251.9 978,252.4 980,252.9 982,253.3 984,253.8 986,254.2 988,254.7 990,254.1 992,253.2 994,252.3 996,251.4 998,250.5 1000,249.6 1002,248.7 1004,247.8 1006,246.9 1008,246.2 1010,245.7 1012,245.2 1014,244.7 1016,244.2 1018,243.7 1020,243.2 1022,242.7 1024,242.2 1026,241.6 1028,241.1 1030,242.3 1032,244.1 1034,245.9 1036,247.7 1038,249.5 1040,251.3 1042,253.1 1044,254.9 1046,255.9 1048,256.3 1050,256.6 1052,257.0 1054,257.3 1056,257.7 1058,258.1 1060,258.4 1062,258.8 1064,259.1 1066,259.0 1068,258.4 1070,257.7 1072,257.1 1074,256.5 1076,255.9 1078,255.3 1080,254.7 1082,254.1 1084,253.5 1086,252.9 1088,252.3 1090,251.7 1092,251.1 1094,251.1 1096,251.1 1098,251.2 1100,251.3 1102,251.3 1104,251.4 1106,251.5 1108,251.5 1110,251.6 1112,251.7 1114,251.7 1116,251.8 1118,251.9 1120,251.9 1122,252.0 1124,246.5 1126,241.0 1128,236.2 1130,231.6 1132,230.9 1134,230.2 1136,230.0 1138,230.0 1140,230.0 1142,230.5 1144,231.5 1146,232.4 1148,233.3 1150,234.3 1152,235.2 1154,236.0 1156,236.0 1158,236.0 1160,236.0 1162,236.0 1164,236.0 1166,236.0 1168,237.7 1170,240.1 1172,242.4 1174,244.7 1176,246.6 1178,246.6 1180,246.6 1182,246.6 1184,246.6 1186,246.6 1188,246.6 1190,246.6 1192,246.6 1194,246.6 1196,246.6 1198,246.6 1200,246.6 1202,246.6 1204,246.4 1206,246.1 1208,245.8 1210,245.4 1212,245.1 1214,244.8 1216,244.5 1218,244.3 1220,244.0 1222,243.8 1224,243.5 1226,243.3 1228,243.0 1230,241.6 1232,239.8 1234,238.1 1236,236.3 1238,234.6 1240,232.8 1242,231.1 1244,231.4 1246,233.7 1248,236.1 1250,238.4 1252,240.8 1254,243.0 1256,243.4 1258,243.8 1260,244.3 1262,244.7 1264,245.1 1266,245.5 1268,245.9 1270,246.3 1272,246.7 1274,247.1 1276,247.5 1278,248.0 1280,248.5 1282,249.0 1284,249.5 1286,250.0 1288,250.5 1290,251.0 1292,251.5 1294,252.0 1296,252.3 1298,252.6 1300,252.9 1302,253.2 1304,253.5 1306,253.8 1308,254.1 1310,254.4 1312,254.8 1314,254.9 1316,255.0 1318,255.1 1320,255.2 1322,255.3 1324,255.5 1326,255.6 1328,255.7 1330,255.8 1332,255.9 1334,256.0 1336,256.1 1338,256.3 1340,256.4 1342,256.5 1344,256.6 1346,256.7 1348,256.8 1350,256.9 1352,257.0 1354,257.2 1356,257.3 1358,257.4 1360,257.5 1362,257.9 1364,258.3 1366,258.7 1368,259.1 1370,259.5 1372,259.9 1374,260.2 1376,260.6 1378,261.0 1380,261.4 1382,261.8 1384,262.2 1386,262.6 1388,263.0"/>
<polygon fill="#50f8a8" points="474,311 474,247.8 476,247.3 478,246.8 480,246.4 482,246.4 484,246.6 486,245.5 488,244.6 490,244.1 492,244.9 494,245.6 496,246.4 498,247.1 500,247.9 502,248.6 504,249.4 506,250.1 508,251.1 510,252.0 512,253.0 514,253.1 516,253.3 518,253.3 520,253.2 522,253.0 524,252.8 526,252.8 528,252.8 530,252.9 532,252.9 534,253.0 536,253.0 538,253.0 540,252.4 542,250.6 544,248.7 546,246.8 548,245.0 550,243.4 552,242.2 554,241.4 556,240.5 558,239.7 560,238.9 562,238.3 564,237.9 566,237.5 568,237.1 570,236.7 572,236.2 574,235.8 576,235.7 578,237.0 580,238.4 582,239.7 584,241.1 586,242.4 588,243.9 590,245.5 592,247.0 594,248.6 596,250.1 598,251.4 600,251.7 602,252.1 604,252.4 606,252.7 608,253.0 610,253.4 612,253.7 614,254.0 616,254.3 618,254.7 620,255.0 622,255.3 624,255.6 626,255.9 628,256.1 630,256.3 632,256.5 634,256.7 636,256.9 638,257.1 640,257.2 642,257.4 644,257.4 646,257.2 648,257.0 650,256.7 652,256.5 654,256.2 656,255.9 658,255.6 660,255.4 662,255.1 664,254.8 666,254.5 668,254.2 670,253.9 672,253.4 674,252.9 676,252.3 678,251.7 680,251.2 682,250.6 684,250.1 686,249.5 688,248.9 690,248.2 692,247.3 694,246.4 696,245.5 698,244.7 700,244.8 702,245.6 704,246.3 706,247.0 708,247.8 710,247.8 712,247.8 714,247.8 716,247.7 718,247.7 720,247.7 722,247.6 724,247.6 726,247.6 728,247.6 730,247.6 732,247.6 734,247.6 736,247.7 738,247.7 740,247.7 742,247.7 744,247.7 746,247.5 748,247.2 750,246.9 752,246.6 754,246.3 756,246.0 758,245.7 760,245.6 762,245.8 764,245.9 766,245.9 768,246.0 770,246.0 772,246.1 774,246.1 776,246.2 778,246.2 780,246.3 782,246.7 784,247.6 786,248.4 788,249.3 790,250.2 792,251.0 794,251.4 796,251.7 798,252.0 800,252.2 802,252.4 804,252.5 806,252.7 808,252.9 810,252.8 812,252.6 814,252.6 816,252.8 818,253.0 820,253.1 822,252.0 824,251.4 826,251.2 828,250.9 830,250.7 832,250.4 834,250.2 836,249.9 838,249.7 840,249.5 842,249.3 844,249.1 846,248.8 848,248.3 850,247.8 852,247.3 854,246.8 856,246.3 858,245.8 860,245.3 862,244.8 864,244.7 866,245.0 868,245.3 870,245.6 872,245.9 874,246.2 876,246.6 878,247.0 880,247.4 882,247.7 884,248.2 886,248.6 888,249.1 890,249.5 892,249.9 894,250.3 896,250.7 898,251.1 900,251.4 902,251.6 904,251.8 906,252.0 908,252.2 910,252.4 912,252.7 914,252.9 916,253.1 918,253.3 920,253.5 922,252.6 924,251.7 926,250.8 928,249.9 930,249.0 932,248.7 934,248.4 936,248.0 938,247.7 940,247.4 942,247.1 944,246.8 946,246.4 948,246.1 950,245.8 952,246.7 954,247.6 956,248.6 958,249.6 960,250.5 962,251.5 964,252.4 966,253.0 968,253.4 970,253.9 972,254.3 974,254.7 976,255.1 978,255.5 980,255.9 982,256.4 984,256.8 986,257.2 988,257.6 990,257.0 992,256.2 994,255.4 996,254.6 998,253.8 1000,253.0 1002,252.2 1004,251.3 1006,250.5 1008,249.9 1010,249.5 1012,249.0 1014,248.5 1016,248.0 1018,247.5 1020,247.1 1022,246.6 1024,246.1 1026,245.6 1028,245.1 1030,245.7 1032,246.6 1034,247.5 1036,248.9 1038,250.8 1040,253.1 1042,255.3 1044,257.6 1046,258.8 1048,259.1 1050,259.5 1052,259.8 1054,260.1 1056,260.5 1058,260.8 1060,261.1 1062,261.5 1064,261.8 1066,261.7 1068,261.1 1070,260.5 1072,259.9 1074,259.4 1076,258.8 1078,258.2 1080,257.7 1082,257.1 1084,256.5 1086,256.0 1088,255.4 1090,254.8 1092,254.2 1094,254.2 1096,254.3 1098,254.3 1100,254.4 1102,254.4 1104,254.5 1106,254.5 1108,254.6 1110,254.6 1112,254.7 1114,254.7 1116,254.8 1118,254.8 1120,254.9 1122,254.9 1124,251.0 1126,242.0 1128,241.2 1130,240.1 1132,239.5 1134,238.6 1136,237.8 1138,237.0 1140,236.1 1142,235.8 1144,236.1 1146,236.4 1148,236.7 1150,237.0 1152,237.3 1154,237.6 1156,237.9 1158,238.1 1160,238.4 1162,238.7 1164,239.0 1166,239.3 1168,241.0 1170,242.8 1172,244.5 1174,246.3 1176,248.0 1178,248.0 1180,248.0 1182,248.1 1184,248.1 1186,248.1 1188,248.1 1190,248.2 1192,248.2 1194,248.2 1196,248.2 1198,248.3 1200,248.3 1202,248.3 1204,248.3 1206,248.4 1208,248.4 1210,248.4 1212,247.9 1214,247.5 1216,247.0 1218,246.6 1220,246.1 1222,245.7 1224,245.2 1226,244.7 1228,244.1 1230,243.4 1232,242.8 1234,242.2 1236,241.5 1238,240.9 1240,240.2 1242,239.6 1244,239.9 1246,241.0 1248,242.1 1250,243.2 1252,244.3 1254,245.4 1256,249.3 1258,249.6 1260,249.8 1262,250.0 1264,250.2 1266,250.4 1268,250.6 1270,250.8 1272,251.0 1274,251.2 1276,251.4 1278,251.6 1280,251.9 1282,252.2 1284,252.4 1286,252.8 1288,253.3 1290,253.9 1292,254.4 1294,254.9 1296,255.3 1298,255.7 1300,256.1 1302,256.5 1304,256.8 1306,257.1 1308,257.4 1310,257.7 1312,258.0 1314,258.2 1316,258.3 1318,258.5 1320,258.6 1322,258.8 1324,258.9 1326,259.1 1328,259.2 1330,259.4 1332,259.6 1334,259.7 1336,259.9 1338,260.0 1340,260.2 1342,260.3 1344,260.5 1346,260.6 1348,260.8 1350,260.9 1352,261.1 1354,261.2 1356,261.4 1358,261.6 1360,261.7 1362,262.0 1364,262.3 1366,262.5 1368,262.8 1370,263.1 1372,263.4 1374,263.7 1376,263.9 1378,264.2 1380,264.5 1382,264.8 1384,265.1 1386,265.3 1388,265.6 1388,311"/>
<polyline fill="none" stroke="rgba(0,0,0,0.22)" stroke-width="0.6" points="474,247.8 476,247.3 478,246.8 480,246.4 482,246.4 484,246.6 486,245.5 488,244.6 490,244.1 492,244.9 494,245.6 496,246.4 498,247.1 500,247.9 502,248.6 504,249.4 506,250.1 508,251.1 510,252.0 512,253.0 514,253.1 516,253.3 518,253.3 520,253.2 522,253.0 524,252.8 526,252.8 528,252.8 530,252.9 532,252.9 534,253.0 536,253.0 538,253.0 540,252.4 542,250.6 544,248.7 546,246.8 548,245.0 550,243.4 552,242.2 554,241.4 556,240.5 558,239.7 560,238.9 562,238.3 564,237.9 566,237.5 568,237.1 570,236.7 572,236.2 574,235.8 576,235.7 578,237.0 580,238.4 582,239.7 584,241.1 586,242.4 588,243.9 590,245.5 592,247.0 594,248.6 596,250.1 598,251.4 600,251.7 602,252.1 604,252.4 606,252.7 608,253.0 610,253.4 612,253.7 614,254.0 616,254.3 618,254.7 620,255.0 622,255.3 624,255.6 626,255.9 628,256.1 630,256.3 632,256.5 634,256.7 636,256.9 638,257.1 640,257.2 642,257.4 644,257.4 646,257.2 648,257.0 650,256.7 652,256.5 654,256.2 656,255.9 658,255.6 660,255.4 662,255.1 664,254.8 666,254.5 668,254.2 670,253.9 672,253.4 674,252.9 676,252.3 678,251.7 680,251.2 682,250.6 684,250.1 686,249.5 688,248.9 690,248.2 692,247.3 694,246.4 696,245.5 698,244.7 700,244.8 702,245.6 704,246.3 706,247.0 708,247.8 710,247.8 712,247.8 714,247.8 716,247.7 718,247.7 720,247.7 722,247.6 724,247.6 726,247.6 728,247.6 730,247.6 732,247.6 734,247.6 736,247.7 738,247.7 740,247.7 742,247.7 744,247.7 746,247.5 748,247.2 750,246.9 752,246.6 754,246.3 756,246.0 758,245.7 760,245.6 762,245.8 764,245.9 766,245.9 768,246.0 770,246.0 772,246.1 774,246.1 776,246.2 778,246.2 780,246.3 782,246.7 784,247.6 786,248.4 788,249.3 790,250.2 792,251.0 794,251.4 796,251.7 798,252.0 800,252.2 802,252.4 804,252.5 806,252.7 808,252.9 810,252.8 812,252.6 814,252.6 816,252.8 818,253.0 820,253.1 822,252.0 824,251.4 826,251.2 828,250.9 830,250.7 832,250.4 834,250.2 836,249.9 838,249.7 840,249.5 842,249.3 844,249.1 846,248.8 848,248.3 850,247.8 852,247.3 854,246.8 856,246.3 858,245.8 860,245.3 862,244.8 864,244.7 866,245.0 868,245.3 870,245.6 872,245.9 874,246.2 876,246.6 878,247.0 880,247.4 882,247.7 884,248.2 886,248.6 888,249.1 890,249.5 892,249.9 894,250.3 896,250.7 898,251.1 900,251.4 902,251.6 904,251.8 906,252.0 908,252.2 910,252.4 912,252.7 914,252.9 916,253.1 918,253.3 920,253.5 922,252.6 924,251.7 926,250.8 928,249.9 930,249.0 932,248.7 934,248.4 936,248.0 938,247.7 940,247.4 942,247.1 944,246.8 946,246.4 948,246.1 950,245.8 952,246.7 954,247.6 956,248.6 958,249.6 960,250.5 962,251.5 964,252.4 966,253.0 968,253.4 970,253.9 972,254.3 974,254.7 976,255.1 978,255.5 980,255.9 982,256.4 984,256.8 986,257.2 988,257.6 990,257.0 992,256.2 994,255.4 996,254.6 998,253.8 1000,253.0 1002,252.2 1004,251.3 1006,250.5 1008,249.9 1010,249.5 1012,249.0 1014,248.5 1016,248.0 1018,247.5 1020,247.1 1022,246.6 1024,246.1 1026,245.6 1028,245.1 1030,245.7 1032,246.6 1034,247.5 1036,248.9 1038,250.8 1040,253.1 1042,255.3 1044,257.6 1046,258.8 1048,259.1 1050,259.5 1052,259.8 1054,260.1 1056,260.5 1058,260.8 1060,261.1 1062,261.5 1064,261.8 1066,261.7 1068,261.1 1070,260.5 1072,259.9 1074,259.4 1076,258.8 1078,258.2 1080,257.7 1082,257.1 1084,256.5 1086,256.0 1088,255.4 1090,254.8 1092,254.2 1094,254.2 1096,254.3 1098,254.3 1100,254.4 1102,254.4 1104,254.5 1106,254.5 1108,254.6 1110,254.6 1112,254.7 1114,254.7 1116,254.8 1118,254.8 1120,254.9 1122,254.9 1124,251.0 1126,242.0 1128,241.2 1130,240.1 1132,239.5 1134,238.6 1136,237.8 1138,237.0 1140,236.1 1142,235.8 1144,236.1 1146,236.4 1148,236.7 1150,237.0 1152,237.3 1154,237.6 1156,237.9 1158,238.1 1160,238.4 1162,238.7 1164,239.0 1166,239.3 1168,241.0 1170,242.8 1172,244.5 1174,246.3 1176,248.0 1178,248.0 1180,248.0 1182,248.1 1184,248.1 1186,248.1 1188,248.1 1190,248.2 1192,248.2 1194,248.2 1196,248.2 1198,248.3 1200,248.3 1202,248.3 1204,248.3 1206,248.4 1208,248.4 1210,248.4 1212,247.9 1214,247.5 1216,247.0 1218,246.6 1220,246.1 1222,245.7 1224,245.2 1226,244.7 1228,244.1 1230,243.4 1232,242.8 1234,242.2 1236,241.5 1238,240.9 1240,240.2 1242,239.6 1244,239.9 1246,241.0 1248,242.1 1250,243.2 1252,244.3 1254,245.4 1256,249.3 1258,249.6 1260,249.8 1262,250.0 1264,250.2 1266,250.4 1268,250.6 1270,250.8 1272,251.0 1274,251.2 1276,251.4 1278,251.6 1280,251.9 1282,252.2 1284,252.4 1286,252.8 1288,253.3 1290,253.9 1292,254.4 1294,254.9 1296,255.3 1298,255.7 1300,256.1 1302,256.5 1304,256.8 1306,257.1 1308,257.4 1310,257.7 1312,258.0 1314,258.2 1316,258.3 1318,258.5 1320,258.6 1322,258.8 1324,258.9 1326,259.1 1328,259.2 1330,259.4 1332,259.6 1334,259.7 1336,259.9 1338,260.0 1340,260.2 1342,260.3 1344,260.5 1346,260.6 1348,260.8 1350,260.9 1352,261.1 1354,261.2 1356,261.4 1358,261.6 1360,261.7 1362,262.0 1364,262.3 1366,262.5 1368,262.8 1370,263.1 1372,263.4 1374,263.7 1376,263.9 1378,264.2 1380,264.5 1382,264.8 1384,265.1 1386,265.3 1388,265.6"/>
<polygon fill="#a8f048" points="474,311 474,250.7 476,250.3 478,249.8 480,249.4 482,249.3 484,249.4 486,248.5 488,247.7 490,247.3 492,247.9 494,248.6 496,249.2 498,249.9 500,250.5 502,251.2 504,251.8 506,252.5 508,253.6 510,254.9 512,256.2 514,256.2 516,256.1 518,256.0 520,255.7 522,255.5 524,255.2 526,255.2 528,255.2 530,255.3 532,255.3 534,255.4 536,255.5 538,255.5 540,255.1 542,253.6 544,252.1 546,250.6 548,249.1 550,247.8 552,246.8 554,246.1 556,245.4 558,244.8 560,244.1 562,243.6 564,243.2 566,242.8 568,242.5 570,242.1 572,241.7 574,241.4 576,241.2 578,242.4 580,243.5 582,244.6 584,245.8 586,246.9 588,248.1 590,249.4 592,250.7 594,252.0 596,253.3 598,254.4 600,254.6 602,254.9 604,255.2 606,255.5 608,255.8 610,256.0 612,256.3 614,256.6 616,256.9 618,257.2 620,257.4 622,257.7 624,258.0 626,258.2 628,258.4 630,258.6 632,258.8 634,259.0 636,259.1 638,259.3 640,259.5 642,259.6 644,259.6 646,259.5 648,259.4 650,259.2 652,259.1 654,258.8 656,258.6 658,258.3 660,258.1 662,257.9 664,257.6 666,257.4 668,257.1 670,256.9 672,256.4 674,255.8 676,255.1 678,254.5 680,253.9 682,253.3 684,252.7 686,252.0 688,251.4 690,250.7 692,250.0 694,249.3 696,248.6 698,247.9 700,248.1 702,248.6 704,249.1 706,249.7 708,250.2 710,250.4 712,250.4 714,250.5 716,250.6 718,250.7 720,250.8 722,250.8 724,250.9 726,251.0 728,251.0 730,251.0 732,250.9 734,250.9 736,250.8 738,250.8 740,250.8 742,250.7 744,250.7 746,250.6 748,250.4 750,250.2 752,250.0 754,249.9 756,249.7 758,249.5 760,249.5 762,249.7 764,249.7 766,249.7 768,249.7 770,249.7 772,249.7 774,249.7 776,249.6 778,249.6 780,249.6 782,250.0 784,250.7 786,251.5 788,252.3 790,253.1 792,253.8 794,254.2 796,254.6 798,254.9 800,255.2 802,255.3 804,255.4 806,255.5 808,255.7 810,255.6 812,255.5 814,255.5 816,255.6 818,255.7 820,255.7 822,254.8 824,254.3 826,254.0 828,253.7 830,253.4 832,253.1 834,252.8 836,252.5 838,252.3 840,252.1 842,251.9 844,251.7 846,251.4 848,251.0 850,250.6 852,250.2 854,249.8 856,249.3 858,248.9 860,248.5 862,248.1 864,248.0 866,248.2 868,248.4 870,248.6 872,248.8 874,249.2 876,249.5 878,249.9 880,250.2 882,250.6 884,251.0 886,251.4 888,251.8 890,252.2 892,252.6 894,252.9 896,253.2 898,253.5 900,253.8 902,254.0 904,254.2 906,254.4 908,254.5 910,254.7 912,254.9 914,255.1 916,255.3 918,255.5 920,255.6 922,254.8 924,254.0 926,253.2 928,252.4 930,251.6 932,251.3 934,251.0 936,250.8 938,250.5 940,250.2 942,249.9 944,249.6 946,249.3 948,249.1 950,248.8 952,249.6 954,250.4 956,251.2 958,252.1 960,252.9 962,253.8 964,254.6 966,255.1 968,255.5 970,255.9 972,256.3 974,256.7 976,257.1 978,257.5 980,257.9 982,258.3 984,258.6 986,259.0 988,259.4 990,258.9 992,258.1 994,257.4 996,256.6 998,255.8 1000,255.1 1002,254.3 1004,253.6 1006,252.8 1008,252.2 1010,251.8 1012,251.3 1014,250.9 1016,250.4 1018,249.9 1020,249.5 1022,249.0 1024,248.5 1026,248.1 1028,247.6 1030,247.8 1032,248.1 1034,248.5 1036,249.6 1038,251.6 1040,254.1 1042,256.7 1044,259.3 1046,260.6 1048,260.9 1050,261.2 1052,261.5 1054,261.9 1056,262.2 1058,262.5 1060,262.8 1062,263.2 1064,263.5 1066,263.3 1068,262.8 1070,262.2 1072,261.7 1074,261.1 1076,260.6 1078,260.0 1080,259.5 1082,259.0 1084,258.4 1086,257.9 1088,257.3 1090,256.8 1092,256.2 1094,256.2 1096,256.2 1098,256.3 1100,256.3 1102,256.3 1104,256.4 1106,256.4 1108,256.5 1110,256.5 1112,256.5 1114,256.6 1116,256.6 1118,256.6 1120,256.7 1122,256.7 1124,253.8 1126,250.8 1128,248.1 1130,245.5 1132,244.9 1134,244.4 1136,244.1 1138,243.9 1140,243.8 1142,244.2 1144,244.8 1146,245.4 1148,246.1 1150,246.7 1152,247.3 1154,247.9 1156,248.0 1158,248.2 1160,248.3 1162,248.5 1164,248.6 1166,248.8 1168,249.9 1170,251.3 1172,252.7 1174,254.0 1176,255.1 1178,255.1 1180,255.1 1182,255.1 1184,255.0 1186,255.0 1188,255.0 1190,254.9 1192,254.9 1194,254.9 1196,254.8 1198,254.8 1200,254.8 1202,254.7 1204,254.6 1206,254.4 1208,254.1 1210,253.9 1212,253.6 1214,253.4 1216,253.2 1218,253.0 1220,252.8 1222,252.6 1224,252.4 1226,252.2 1228,252.0 1230,251.1 1232,250.1 1234,249.1 1236,248.1 1238,247.1 1240,246.2 1242,245.4 1244,245.7 1246,247.1 1248,248.5 1250,249.9 1252,251.3 1254,252.6 1256,252.9 1258,253.2 1260,253.3 1262,253.4 1264,253.4 1266,253.5 1268,253.5 1270,253.6 1272,253.7 1274,253.7 1276,253.8 1278,253.9 1280,254.0 1282,254.1 1284,254.2 1286,254.5 1288,255.1 1290,255.6 1292,256.2 1294,256.7 1296,257.2 1298,257.6 1300,258.1 1302,258.5 1304,258.9 1306,259.2 1308,259.4 1310,259.7 1312,260.0 1314,260.2 1316,260.4 1318,260.6 1320,260.7 1322,260.9 1324,261.1 1326,261.3 1328,261.5 1330,261.6 1332,261.8 1334,262.0 1336,262.2 1338,262.3 1340,262.5 1342,262.7 1344,262.9 1346,263.1 1348,263.2 1350,263.4 1352,263.6 1354,263.8 1356,264.0 1358,264.1 1360,264.3 1362,264.5 1364,264.7 1366,264.9 1368,265.1 1370,265.4 1372,265.6 1374,265.8 1376,266.0 1378,266.2 1380,266.4 1382,266.6 1384,266.8 1386,267.0 1388,267.2 1388,311"/>
<polyline fill="none" stroke="rgba(0,0,0,0.22)" stroke-width="0.6" points="474,250.7 476,250.3 478,249.8 480,249.4 482,249.3 484,249.4 486,248.5 488,247.7 490,247.3 492,247.9 494,248.6 496,249.2 498,249.9 500,250.5 502,251.2 504,251.8 506,252.5 508,253.6 510,254.9 512,256.2 514,256.2 516,256.1 518,256.0 520,255.7 522,255.5 524,255.2 526,255.2 528,255.2 530,255.3 532,255.3 534,255.4 536,255.5 538,255.5 540,255.1 542,253.6 544,252.1 546,250.6 548,249.1 550,247.8 552,246.8 554,246.1 556,245.4 558,244.8 560,244.1 562,243.6 564,243.2 566,242.8 568,242.5 570,242.1 572,241.7 574,241.4 576,241.2 578,242.4 580,243.5 582,244.6 584,245.8 586,246.9 588,248.1 590,249.4 592,250.7 594,252.0 596,253.3 598,254.4 600,254.6 602,254.9 604,255.2 606,255.5 608,255.8 610,256.0 612,256.3 614,256.6 616,256.9 618,257.2 620,257.4 622,257.7 624,258.0 626,258.2 628,258.4 630,258.6 632,258.8 634,259.0 636,259.1 638,259.3 640,259.5 642,259.6 644,259.6 646,259.5 648,259.4 650,259.2 652,259.1 654,258.8 656,258.6 658,258.3 660,258.1 662,257.9 664,257.6 666,257.4 668,257.1 670,256.9 672,256.4 674,255.8 676,255.1 678,254.5 680,253.9 682,253.3 684,252.7 686,252.0 688,251.4 690,250.7 692,250.0 694,249.3 696,248.6 698,247.9 700,248.1 702,248.6 704,249.1 706,249.7 708,250.2 710,250.4 712,250.4 714,250.5 716,250.6 718,250.7 720,250.8 722,250.8 724,250.9 726,251.0 728,251.0 730,251.0 732,250.9 734,250.9 736,250.8 738,250.8 740,250.8 742,250.7 744,250.7 746,250.6 748,250.4 750,250.2 752,250.0 754,249.9 756,249.7 758,249.5 760,249.5 762,249.7 764,249.7 766,249.7 768,249.7 770,249.7 772,249.7 774,249.7 776,249.6 778,249.6 780,249.6 782,250.0 784,250.7 786,251.5 788,252.3 790,253.1 792,253.8 794,254.2 796,254.6 798,254.9 800,255.2 802,255.3 804,255.4 806,255.5 808,255.7 810,255.6 812,255.5 814,255.5 816,255.6 818,255.7 820,255.7 822,254.8 824,254.3 826,254.0 828,253.7 830,253.4 832,253.1 834,252.8 836,252.5 838,252.3 840,252.1 842,251.9 844,251.7 846,251.4 848,251.0 850,250.6 852,250.2 854,249.8 856,249.3 858,248.9 860,248.5 862,248.1 864,248.0 866,248.2 868,248.4 870,248.6 872,248.8 874,249.2 876,249.5 878,249.9 880,250.2 882,250.6 884,251.0 886,251.4 888,251.8 890,252.2 892,252.6 894,252.9 896,253.2 898,253.5 900,253.8 902,254.0 904,254.2 906,254.4 908,254.5 910,254.7 912,254.9 914,255.1 916,255.3 918,255.5 920,255.6 922,254.8 924,254.0 926,253.2 928,252.4 930,251.6 932,251.3 934,251.0 936,250.8 938,250.5 940,250.2 942,249.9 944,249.6 946,249.3 948,249.1 950,248.8 952,249.6 954,250.4 956,251.2 958,252.1 960,252.9 962,253.8 964,254.6 966,255.1 968,255.5 970,255.9 972,256.3 974,256.7 976,257.1 978,257.5 980,257.9 982,258.3 984,258.6 986,259.0 988,259.4 990,258.9 992,258.1 994,257.4 996,256.6 998,255.8 1000,255.1 1002,254.3 1004,253.6 1006,252.8 1008,252.2 1010,251.8 1012,251.3 1014,250.9 1016,250.4 1018,249.9 1020,249.5 1022,249.0 1024,248.5 1026,248.1 1028,247.6 1030,247.8 1032,248.1 1034,248.5 1036,249.6 1038,251.6 1040,254.1 1042,256.7 1044,259.3 1046,260.6 1048,260.9 1050,261.2 1052,261.5 1054,261.9 1056,262.2 1058,262.5 1060,262.8 1062,263.2 1064,263.5 1066,263.3 1068,262.8 1070,262.2 1072,261.7 1074,261.1 1076,260.6 1078,260.0 1080,259.5 1082,259.0 1084,258.4 1086,257.9 1088,257.3 1090,256.8 1092,256.2 1094,256.2 1096,256.2 1098,256.3 1100,256.3 1102,256.3 1104,256.4 1106,256.4 1108,256.5 1110,256.5 1112,256.5 1114,256.6 1116,256.6 1118,256.6 1120,256.7 1122,256.7 1124,253.8 1126,250.8 1128,248.1 1130,245.5 1132,244.9 1134,244.4 1136,244.1 1138,243.9 1140,243.8 1142,244.2 1144,244.8 1146,245.4 1148,246.1 1150,246.7 1152,247.3 1154,247.9 1156,248.0 1158,248.2 1160,248.3 1162,248.5 1164,248.6 1166,248.8 1168,249.9 1170,251.3 1172,252.7 1174,254.0 1176,255.1 1178,255.1 1180,255.1 1182,255.1 1184,255.0 1186,255.0 1188,255.0 1190,254.9 1192,254.9 1194,254.9 1196,254.8 1198,254.8 1200,254.8 1202,254.7 1204,254.6 1206,254.4 1208,254.1 1210,253.9 1212,253.6 1214,253.4 1216,253.2 1218,253.0 1220,252.8 1222,252.6 1224,252.4 1226,252.2 1228,252.0 1230,251.1 1232,250.1 1234,249.1 1236,248.1 1238,247.1 1240,246.2 1242,245.4 1244,245.7 1246,247.1 1248,248.5 1250,249.9 1252,251.3 1254,252.6 1256,252.9 1258,253.2 1260,253.3 1262,253.4 1264,253.4 1266,253.5 1268,253.5 1270,253.6 1272,253.7 1274,253.7 1276,253.8 1278,253.9 1280,254.0 1282,254.1 1284,254.2 1286,254.5 1288,255.1 1290,255.6 1292,256.2 1294,256.7 1296,257.2 1298,257.6 1300,258.1 1302,258.5 1304,258.9 1306,259.2 1308,259.4 1310,259.7 1312,260.0 1314,260.2 1316,260.4 1318,260.6 1320,260.7 1322,260.9 1324,261.1 1326,261.3 1328,261.5 1330,261.6 1332,261.8 1334,262.0 1336,262.2 1338,262.3 1340,262.5 1342,262.7 1344,262.9 1346,263.1 1348,263.2 1350,263.4 1352,263.6 1354,263.8 1356,264.0 1358,264.1 1360,264.3 1362,264.5 1364,264.7 1366,264.9 1368,265.1 1370,265.4 1372,265.6 1374,265.8 1376,266.0 1378,266.2 1380,266.4 1382,266.6 1384,266.8 1386,267.0 1388,267.2"/>
<polygon fill="#f8f800" points="474,311 474,253.7 476,253.3 478,252.9 480,252.5 482,252.3 484,252.2 486,251.5 488,250.8 490,250.4 492,251.0 494,251.5 496,252.1 498,252.6 500,253.2 502,253.7 504,254.2 506,254.8 508,256.2 510,257.8 512,259.4 514,259.2 516,259.0 518,258.7 520,258.3 522,258.0 524,257.6 526,257.5 528,257.6 530,257.7 532,257.8 534,257.9 536,258.0 538,258.0 540,257.7 542,256.6 544,255.4 546,254.3 548,253.2 550,252.2 552,251.4 554,250.8 556,250.3 558,249.8 560,249.3 562,248.9 564,248.5 566,248.2 568,247.9 570,247.6 572,247.2 574,246.9 576,246.8 578,247.7 580,248.6 582,249.5 584,250.5 586,251.4 588,252.4 590,253.4 592,254.4 594,255.4 596,256.4 598,257.3 600,257.5 602,257.8 604,258.0 606,258.2 608,258.5 610,258.7 612,259.0 614,259.2 616,259.4 618,259.7 620,259.9 622,260.1 624,260.4 626,260.6 628,260.7 630,260.9 632,261.1 634,261.3 636,261.4 638,261.5 640,261.7 642,261.8 644,261.9 646,261.8 648,261.7 650,261.7 652,261.6 654,261.4 656,261.2 658,261.1 660,260.9 662,260.7 664,260.5 666,260.3 668,260.1 670,259.9 672,259.3 674,258.7 676,258.0 678,257.3 680,256.6 682,255.9 684,255.2 686,254.6 688,253.9 690,253.3 692,252.8 694,252.3 696,251.7 698,251.2 700,251.3 702,251.6 704,252.0 706,252.3 708,252.7 710,252.9 712,253.1 714,253.3 716,253.5 718,253.7 720,253.9 722,254.1 724,254.2 726,254.4 728,254.4 730,254.3 732,254.2 734,254.1 736,254.0 738,253.9 740,253.8 742,253.7 744,253.6 746,253.6 748,253.5 750,253.5 752,253.4 754,253.4 756,253.4 758,253.3 760,253.4 762,253.5 764,253.6 766,253.5 768,253.4 770,253.3 772,253.3 774,253.2 776,253.1 778,253.0 780,252.9 782,253.2 784,253.9 786,254.6 788,255.3 790,255.9 792,256.6 794,257.0 796,257.5 798,257.9 800,258.1 802,258.2 804,258.3 806,258.4 808,258.5 810,258.4 812,258.4 814,258.3 816,258.4 818,258.5 820,258.3 822,257.6 824,257.1 826,256.8 828,256.5 830,256.1 832,255.8 834,255.5 836,255.2 838,255.0 840,254.8 842,254.6 844,254.4 846,254.1 848,253.7 850,253.4 852,253.0 854,252.7 856,252.4 858,252.0 860,251.7 862,251.3 864,251.2 866,251.3 868,251.5 870,251.6 872,251.8 874,252.1 876,252.4 878,252.8 880,253.1 882,253.5 884,253.8 886,254.2 888,254.6 890,254.9 892,255.2 894,255.5 896,255.7 898,256.0 900,256.2 902,256.4 904,256.5 906,256.7 908,256.8 910,257.0 912,257.2 914,257.3 916,257.5 918,257.6 920,257.8 922,257.1 924,256.4 926,255.7 928,254.9 930,254.2 932,254.0 934,253.7 936,253.5 938,253.2 940,253.0 942,252.7 944,252.5 946,252.2 948,252.0 950,251.7 952,252.4 954,253.1 956,253.9 958,254.6 960,255.3 962,256.1 964,256.8 966,257.3 968,257.6 970,258.0 972,258.3 974,258.7 976,259.1 978,259.4 980,259.8 982,260.1 984,260.5 986,260.9 988,261.2 990,260.7 992,260.0 994,259.3 996,258.6 998,257.9 1000,257.2 1002,256.5 1004,255.8 1006,255.1 1008,254.5 1010,254.1 1012,253.7 1014,253.2 1016,252.8 1018,252.3 1020,251.9 1022,251.4 1024,251.0 1026,250.5 1028,250.1 1030,249.8 1032,249.6 1034,249.4 1036,250.3 1038,252.4 1040,255.2 1042,258.1 1044,260.9 1046,262.4 1048,262.7 1050,263.0 1052,263.3 1054,263.6 1056,263.9 1058,264.2 1060,264.5 1062,264.8 1064,265.1 1066,265.0 1068,264.5 1070,263.9 1072,263.4 1074,262.9 1076,262.4 1078,261.9 1080,261.3 1082,260.8 1084,260.3 1086,259.8 1088,259.2 1090,258.7 1092,258.2 1094,258.2 1096,258.2 1098,258.2 1100,258.2 1102,258.3 1104,258.3 1106,258.3 1108,258.3 1110,258.4 1112,258.4 1114,258.4 1116,258.4 1118,258.5 1120,258.5 1122,258.5 1124,256.6 1126,254.5 1128,252.6 1130,250.8 1132,250.3 1134,249.8 1136,249.5 1138,249.3 1140,249.0 1142,249.4 1144,249.9 1146,250.4 1148,250.9 1150,251.4 1152,251.9 1154,252.4 1156,252.6 1158,252.8 1160,253.1 1162,253.3 1164,253.5 1166,253.7 1168,254.5 1170,255.5 1172,256.6 1174,257.6 1176,258.4 1178,258.4 1180,258.3 1182,258.3 1184,258.2 1186,258.2 1188,258.2 1190,258.1 1192,258.1 1194,258.0 1196,258.0 1198,257.9 1200,257.9 1202,257.9 1204,257.7 1206,257.5 1208,257.3 1210,257.1 1212,256.9 1214,256.7 1216,256.5 1218,256.3 1220,256.1 1222,255.9 1224,255.8 1226,255.6 1228,255.4 1230,254.8 1232,254.1 1234,253.4 1236,252.7 1238,252.0 1240,251.3 1242,250.9 1244,251.2 1246,252.2 1248,253.2 1250,254.2 1252,255.3 1254,256.2 1256,256.6 1258,256.8 1260,256.8 1262,256.7 1264,256.6 1266,256.5 1268,256.5 1270,256.4 1272,256.3 1274,256.2 1276,256.2 1278,256.1 1280,256.1 1282,256.0 1284,256.0 1286,256.3 1288,256.8 1290,257.4 1292,258.0 1294,258.5 1296,259.0 1298,259.5 1300,260.0 1302,260.5 1304,260.9 1306,261.2 1308,261.5 1310,261.7 1312,262.0 1314,262.2 1316,262.4 1318,262.6 1320,262.8 1322,263.0 1324,263.3 1326,263.5 1328,263.7 1330,263.9 1332,264.1 1334,264.3 1336,264.5 1338,264.7 1340,264.9 1342,265.1 1344,265.3 1346,265.5 1348,265.7 1350,265.9 1352,266.1 1354,266.3 1356,266.5 1358,266.7 1360,266.9 1362,267.1 1364,267.2 1366,267.3 1368,267.5 1370,267.6 1372,267.8 1374,267.9 1376,268.0 1378,268.2 1380,268.3 1382,268.4 1384,268.6 1386,268.7 1388,268.9 1388,311"/>
<polyline fill="none" stroke="rgba(0,0,0,0.22)" stroke-width="0.6" points="474,253.7 476,253.3 478,252.9 480,252.5 482,252.3 484,252.2 486,251.5 488,250.8 490,250.4 492,251.0 494,251.5 496,252.1 498,252.6 500,253.2 502,253.7 504,254.2 506,254.8 508,256.2 510,257.8 512,259.4 514,259.2 516,259.0 518,258.7 520,258.3 522,258.0 524,257.6 526,257.5 528,257.6 530,257.7 532,257.8 534,257.9 536,258.0 538,258.0 540,257.7 542,256.6 544,255.4 546,254.3 548,253.2 550,252.2 552,251.4 554,250.8 556,250.3 558,249.8 560,249.3 562,248.9 564,248.5 566,248.2 568,247.9 570,247.6 572,247.2 574,246.9 576,246.8 578,247.7 580,248.6 582,249.5 584,250.5 586,251.4 588,252.4 590,253.4 592,254.4 594,255.4 596,256.4 598,257.3 600,257.5 602,257.8 604,258.0 606,258.2 608,258.5 610,258.7 612,259.0 614,259.2 616,259.4 618,259.7 620,259.9 622,260.1 624,260.4 626,260.6 628,260.7 630,260.9 632,261.1 634,261.3 636,261.4 638,261.5 640,261.7 642,261.8 644,261.9 646,261.8 648,261.7 650,261.7 652,261.6 654,261.4 656,261.2 658,261.1 660,260.9 662,260.7 664,260.5 666,260.3 668,260.1 670,259.9 672,259.3 674,258.7 676,258.0 678,257.3 680,256.6 682,255.9 684,255.2 686,254.6 688,253.9 690,253.3 692,252.8 694,252.3 696,251.7 698,251.2 700,251.3 702,251.6 704,252.0 706,252.3 708,252.7 710,252.9 712,253.1 714,253.3 716,253.5 718,253.7 720,253.9 722,254.1 724,254.2 726,254.4 728,254.4 730,254.3 732,254.2 734,254.1 736,254.0 738,253.9 740,253.8 742,253.7 744,253.6 746,253.6 748,253.5 750,253.5 752,253.4 754,253.4 756,253.4 758,253.3 760,253.4 762,253.5 764,253.6 766,253.5 768,253.4 770,253.3 772,253.3 774,253.2 776,253.1 778,253.0 780,252.9 782,253.2 784,253.9 786,254.6 788,255.3 790,255.9 792,256.6 794,257.0 796,257.5 798,257.9 800,258.1 802,258.2 804,258.3 806,258.4 808,258.5 810,258.4 812,258.4 814,258.3 816,258.4 818,258.5 820,258.3 822,257.6 824,257.1 826,256.8 828,256.5 830,256.1 832,255.8 834,255.5 836,255.2 838,255.0 840,254.8 842,254.6 844,254.4 846,254.1 848,253.7 850,253.4 852,253.0 854,252.7 856,252.4 858,252.0 860,251.7 862,251.3 864,251.2 866,251.3 868,251.5 870,251.6 872,251.8 874,252.1 876,252.4 878,252.8 880,253.1 882,253.5 884,253.8 886,254.2 888,254.6 890,254.9 892,255.2 894,255.5 896,255.7 898,256.0 900,256.2 902,256.4 904,256.5 906,256.7 908,256.8 910,257.0 912,257.2 914,257.3 916,257.5 918,257.6 920,257.8 922,257.1 924,256.4 926,255.7 928,254.9 930,254.2 932,254.0 934,253.7 936,253.5 938,253.2 940,253.0 942,252.7 944,252.5 946,252.2 948,252.0 950,251.7 952,252.4 954,253.1 956,253.9 958,254.6 960,255.3 962,256.1 964,256.8 966,257.3 968,257.6 970,258.0 972,258.3 974,258.7 976,259.1 978,259.4 980,259.8 982,260.1 984,260.5 986,260.9 988,261.2 990,260.7 992,260.0 994,259.3 996,258.6 998,257.9 1000,257.2 1002,256.5 1004,255.8 1006,255.1 1008,254.5 1010,254.1 1012,253.7 1014,253.2 1016,252.8 1018,252.3 1020,251.9 1022,251.4 1024,251.0 1026,250.5 1028,250.1 1030,249.8 1032,249.6 1034,249.4 1036,250.3 1038,252.4 1040,255.2 1042,258.1 1044,260.9 1046,262.4 1048,262.7 1050,263.0 1052,263.3 1054,263.6 1056,263.9 1058,264.2 1060,264.5 1062,264.8 1064,265.1 1066,265.0 1068,264.5 1070,263.9 1072,263.4 1074,262.9 1076,262.4 1078,261.9 1080,261.3 1082,260.8 1084,260.3 1086,259.8 1088,259.2 1090,258.7 1092,258.2 1094,258.2 1096,258.2 1098,258.2 1100,258.2 1102,258.3 1104,258.3 1106,258.3 1108,258.3 1110,258.4 1112,258.4 1114,258.4 1116,258.4 1118,258.5 1120,258.5 1122,258.5 1124,256.6 1126,254.5 1128,252.6 1130,250.8 1132,250.3 1134,249.8 1136,249.5 1138,249.3 1140,249.0 1142,249.4 1144,249.9 1146,250.4 1148,250.9 1150,251.4 1152,251.9 1154,252.4 1156,252.6 1158,252.8 1160,253.1 1162,253.3 1164,253.5 1166,253.7 1168,254.5 1170,255.5 1172,256.6 1174,257.6 1176,258.4 1178,258.4 1180,258.3 1182,258.3 1184,258.2 1186,258.2 1188,258.2 1190,258.1 1192,258.1 1194,258.0 1196,258.0 1198,257.9 1200,257.9 1202,257.9 1204,257.7 1206,257.5 1208,257.3 1210,257.1 1212,256.9 1214,256.7 1216,256.5 1218,256.3 1220,256.1 1222,255.9 1224,255.8 1226,255.6 1228,255.4 1230,254.8 1232,254.1 1234,253.4 1236,252.7 1238,252.0 1240,251.3 1242,250.9 1244,251.2 1246,252.2 1248,253.2 1250,254.2 1252,255.3 1254,256.2 1256,256.6 1258,256.8 1260,256.8 1262,256.7 1264,256.6 1266,256.5 1268,256.5 1270,256.4 1272,256.3 1274,256.2 1276,256.2 1278,256.1 1280,256.1 1282,256.0 1284,256.0 1286,256.3 1288,256.8 1290,257.4 1292,258.0 1294,258.5 1296,259.0 1298,259.5 1300,260.0 1302,260.5 1304,260.9 1306,261.2 1308,261.5 1310,261.7 1312,262.0 1314,262.2 1316,262.4 1318,262.6 1320,262.8 1322,263.0 1324,263.3 1326,263.5 1328,263.7 1330,263.9 1332,264.1 1334,264.3 1336,264.5 1338,264.7 1340,264.9 1342,265.1 1344,265.3 1346,265.5 1348,265.7 1350,265.9 1352,266.1 1354,266.3 1356,266.5 1358,266.7 1360,266.9 1362,267.1 1364,267.2 1366,267.3 1368,267.5 1370,267.6 1372,267.8 1374,267.9 1376,268.0 1378,268.2 1380,268.3 1382,268.4 1384,268.6 1386,268.7 1388,268.9"/>
<polygon fill="#f8a000" points="474,311 474,256.3 476,255.9 478,255.5 480,255.1 482,254.9 484,254.7 486,254.1 488,253.6 490,253.3 492,253.7 494,254.2 496,254.6 498,255.1 500,255.5 502,256.0 504,256.4 506,256.9 508,258.4 510,260.4 512,262.3 514,261.9 516,261.5 518,261.1 520,260.6 522,260.2 524,259.7 526,259.6 528,259.7 530,259.8 532,259.9 534,260.0 536,260.2 538,260.3 540,260.1 542,259.2 544,258.4 546,257.6 548,256.8 550,256.1 552,255.5 554,255.1 556,254.7 558,254.3 560,253.9 562,253.5 564,253.3 566,253.0 568,252.7 570,252.4 572,252.1 574,251.9 576,251.7 578,252.4 580,253.2 582,253.9 584,254.6 586,255.4 588,256.1 590,256.9 592,257.7 594,258.5 596,259.3 598,259.9 600,260.1 602,260.3 604,260.5 606,260.7 608,260.9 610,261.1 612,261.3 614,261.5 616,261.7 618,261.9 620,262.1 622,262.3 624,262.5 626,262.6 628,262.8 630,263.0 632,263.1 634,263.3 636,263.4 638,263.5 640,263.7 642,263.8 644,263.8 646,263.9 648,263.9 650,263.9 652,263.9 654,263.8 656,263.6 658,263.5 660,263.3 662,263.2 664,263.0 666,262.9 668,262.7 670,262.6 672,262.0 674,261.2 676,260.5 678,259.8 680,259.0 682,258.3 684,257.5 686,256.8 688,256.1 690,255.6 692,255.2 694,254.8 696,254.5 698,254.1 700,254.1 702,254.3 704,254.5 706,254.7 708,254.9 710,255.2 712,255.5 714,255.8 716,256.0 718,256.3 720,256.6 722,256.9 724,257.2 726,257.5 728,257.4 730,257.3 732,257.1 734,257.0 736,256.8 738,256.7 740,256.6 742,256.4 744,256.3 746,256.3 748,256.3 750,256.4 752,256.5 754,256.5 756,256.6 758,256.7 760,256.8 762,257.0 764,257.0 766,256.9 768,256.7 770,256.6 772,256.5 774,256.3 776,256.2 778,256.0 780,255.9 782,256.1 784,256.7 786,257.3 788,257.9 790,258.5 792,259.1 794,259.6 796,260.0 798,260.5 800,260.8 802,260.8 804,260.9 806,260.9 808,260.9 810,260.9 812,260.9 814,260.9 816,260.9 818,260.9 820,260.7 822,260.1 824,259.6 826,259.3 828,258.9 830,258.6 832,258.2 834,257.8 836,257.5 838,257.3 840,257.1 842,256.9 844,256.7 846,256.4 848,256.2 850,255.9 852,255.6 854,255.3 856,255.0 858,254.8 860,254.5 862,254.2 864,254.1 866,254.2 868,254.2 870,254.3 872,254.4 874,254.7 876,255.0 878,255.3 880,255.7 882,256.0 884,256.3 886,256.7 888,257.0 890,257.4 892,257.6 894,257.8 896,258.0 898,258.1 900,258.3 902,258.5 904,258.6 906,258.7 908,258.9 910,259.0 912,259.2 914,259.3 916,259.4 918,259.6 920,259.7 922,259.1 924,258.5 926,257.8 928,257.2 930,256.5 932,256.3 934,256.1 936,255.9 938,255.7 940,255.5 942,255.2 944,255.0 946,254.8 948,254.6 950,254.4 952,255.0 954,255.6 956,256.2 958,256.8 960,257.5 962,258.1 964,258.7 966,259.2 968,259.5 970,259.8 972,260.2 974,260.5 976,260.8 978,261.2 980,261.5 982,261.8 984,262.2 986,262.5 988,262.8 990,262.4 992,261.7 994,261.0 996,260.4 998,259.7 1000,259.1 1002,258.4 1004,257.7 1006,257.1 1008,256.6 1010,256.2 1012,255.7 1014,255.3 1016,254.9 1018,254.4 1020,254.0 1022,253.6 1024,253.1 1026,252.7 1028,252.3 1030,251.7 1032,251.0 1034,250.3 1036,251.0 1038,253.1 1040,256.2 1042,259.3 1044,262.4 1046,264.0 1048,264.3 1050,264.6 1052,264.8 1054,265.1 1056,265.4 1058,265.7 1060,266.0 1062,266.3 1064,266.6 1066,266.5 1068,266.0 1070,265.5 1072,265.0 1074,264.5 1076,264.0 1078,263.5 1080,263.0 1082,262.5 1084,262.0 1086,261.5 1088,261.0 1090,260.5 1092,260.0 1094,259.9 1096,259.9 1098,259.9 1100,260.0 1102,260.0 1104,260.0 1106,260.0 1108,260.0 1110,260.0 1112,260.0 1114,260.0 1116,260.1 1118,260.1 1120,260.1 1122,260.1 1124,259.1 1126,257.9 1128,256.7 1130,255.5 1132,255.1 1134,254.6 1136,254.3 1138,254.0 1140,253.7 1142,254.1 1144,254.5 1146,254.9 1148,255.3 1150,255.7 1152,256.1 1154,256.5 1156,256.7 1158,257.0 1160,257.3 1162,257.5 1164,257.8 1166,258.0 1168,258.6 1170,259.4 1172,260.1 1174,260.8 1176,261.3 1178,261.3 1180,261.2 1182,261.2 1184,261.1 1186,261.1 1188,261.0 1190,261.0 1192,260.9 1194,260.9 1196,260.8 1198,260.7 1200,260.7 1202,260.6 1204,260.5 1206,260.3 1208,260.1 1210,260.0 1212,259.8 1214,259.6 1216,259.4 1218,259.3 1220,259.1 1222,258.9 1224,258.8 1226,258.6 1228,258.4 1230,258.0 1232,257.6 1234,257.1 1236,256.7 1238,256.2 1240,255.9 1242,255.8 1244,256.1 1246,256.8 1248,257.5 1250,258.1 1252,258.8 1254,259.5 1256,259.8 1258,260.0 1260,259.8 1262,259.6 1264,259.4 1266,259.3 1268,259.1 1270,258.9 1272,258.7 1274,258.5 1276,258.3 1278,258.1 1280,257.9 1282,257.7 1284,257.6 1286,257.8 1288,258.4 1290,259.0 1292,259.6 1294,260.1 1296,260.7 1298,261.2 1300,261.8 1302,262.3 1304,262.8 1306,263.0 1308,263.3 1310,263.5 1312,263.8 1314,264.0 1316,264.3 1318,264.5 1320,264.7 1322,264.9 1324,265.2 1326,265.4 1328,265.6 1330,265.8 1332,266.1 1334,266.3 1336,266.5 1338,266.8 1340,267.0 1342,267.2 1344,267.4 1346,267.7 1348,267.9 1350,268.1 1352,268.3 1354,268.6 1356,268.8 1358,269.0 1360,269.2 1362,269.3 1364,269.4 1366,269.5 1368,269.5 1370,269.6 1372,269.7 1374,269.8 1376,269.8 1378,269.9 1380,270.0 1382,270.1 1384,270.1 1386,270.2 1388,270.3 1388,311"/>
<polyline fill="none" stroke="rgba(0,0,0,0.22)" stroke-width="0.6" points="474,256.3 476,255.9 478,255.5 480,255.1 482,254.9 484,254.7 486,254.1 488,253.6 490,253.3 492,253.7 494,254.2 496,254.6 498,255.1 500,255.5 502,256.0 504,256.4 506,256.9 508,258.4 510,260.4 512,262.3 514,261.9 516,261.5 518,261.1 520,260.6 522,260.2 524,259.7 526,259.6 528,259.7 530,259.8 532,259.9 534,260.0 536,260.2 538,260.3 540,260.1 542,259.2 544,258.4 546,257.6 548,256.8 550,256.1 552,255.5 554,255.1 556,254.7 558,254.3 560,253.9 562,253.5 564,253.3 566,253.0 568,252.7 570,252.4 572,252.1 574,251.9 576,251.7 578,252.4 580,253.2 582,253.9 584,254.6 586,255.4 588,256.1 590,256.9 592,257.7 594,258.5 596,259.3 598,259.9 600,260.1 602,260.3 604,260.5 606,260.7 608,260.9 610,261.1 612,261.3 614,261.5 616,261.7 618,261.9 620,262.1 622,262.3 624,262.5 626,262.6 628,262.8 630,263.0 632,263.1 634,263.3 636,263.4 638,263.5 640,263.7 642,263.8 644,263.8 646,263.9 648,263.9 650,263.9 652,263.9 654,263.8 656,263.6 658,263.5 660,263.3 662,263.2 664,263.0 666,262.9 668,262.7 670,262.6 672,262.0 674,261.2 676,260.5 678,259.8 680,259.0 682,258.3 684,257.5 686,256.8 688,256.1 690,255.6 692,255.2 694,254.8 696,254.5 698,254.1 700,254.1 702,254.3 704,254.5 706,254.7 708,254.9 710,255.2 712,255.5 714,255.8 716,256.0 718,256.3 720,256.6 722,256.9 724,257.2 726,257.5 728,257.4 730,257.3 732,257.1 734,257.0 736,256.8 738,256.7 740,256.6 742,256.4 744,256.3 746,256.3 748,256.3 750,256.4 752,256.5 754,256.5 756,256.6 758,256.7 760,256.8 762,257.0 764,257.0 766,256.9 768,256.7 770,256.6 772,256.5 774,256.3 776,256.2 778,256.0 780,255.9 782,256.1 784,256.7 786,257.3 788,257.9 790,258.5 792,259.1 794,259.6 796,260.0 798,260.5 800,260.8 802,260.8 804,260.9 806,260.9 808,260.9 810,260.9 812,260.9 814,260.9 816,260.9 818,260.9 820,260.7 822,260.1 824,259.6 826,259.3 828,258.9 830,258.6 832,258.2 834,257.8 836,257.5 838,257.3 840,257.1 842,256.9 844,256.7 846,256.4 848,256.2 850,255.9 852,255.6 854,255.3 856,255.0 858,254.8 860,254.5 862,254.2 864,254.1 866,254.2 868,254.2 870,254.3 872,254.4 874,254.7 876,255.0 878,255.3 880,255.7 882,256.0 884,256.3 886,256.7 888,257.0 890,257.4 892,257.6 894,257.8 896,258.0 898,258.1 900,258.3 902,258.5 904,258.6 906,258.7 908,258.9 910,259.0 912,259.2 914,259.3 916,259.4 918,259.6 920,259.7 922,259.1 924,258.5 926,257.8 928,257.2 930,256.5 932,256.3 934,256.1 936,255.9 938,255.7 940,255.5 942,255.2 944,255.0 946,254.8 948,254.6 950,254.4 952,255.0 954,255.6 956,256.2 958,256.8 960,257.5 962,258.1 964,258.7 966,259.2 968,259.5 970,259.8 972,260.2 974,260.5 976,260.8 978,261.2 980,261.5 982,261.8 984,262.2 986,262.5 988,262.8 990,262.4 992,261.7 994,261.0 996,260.4 998,259.7 1000,259.1 1002,258.4 1004,257.7 1006,257.1 1008,256.6 1010,256.2 1012,255.7 1014,255.3 1016,254.9 1018,254.4 1020,254.0 1022,253.6 1024,253.1 1026,252.7 1028,252.3 1030,251.7 1032,251.0 1034,250.3 1036,251.0 1038,253.1 1040,256.2 1042,259.3 1044,262.4 1046,264.0 1048,264.3 1050,264.6 1052,264.8 1054,265.1 1056,265.4 1058,265.7 1060,266.0 1062,266.3 1064,266.6 1066,266.5 1068,266.0 1070,265.5 1072,265.0 1074,264.5 1076,264.0 1078,263.5 1080,263.0 1082,262.5 1084,262.0 1086,261.5 1088,261.0 1090,260.5 1092,260.0 1094,259.9 1096,259.9 1098,259.9 1100,260.0 1102,260.0 1104,260.0 1106,260.0 1108,260.0 1110,260.0 1112,260.0 1114,260.0 1116,260.1 1118,260.1 1120,260.1 1122,260.1 1124,259.1 1126,257.9 1128,256.7 1130,255.5 1132,255.1 1134,254.6 1136,254.3 1138,254.0 1140,253.7 1142,254.1 1144,254.5 1146,254.9 1148,255.3 1150,255.7 1152,256.1 1154,256.5 1156,256.7 1158,257.0 1160,257.3 1162,257.5 1164,257.8 1166,258.0 1168,258.6 1170,259.4 1172,260.1 1174,260.8 1176,261.3 1178,261.3 1180,261.2 1182,261.2 1184,261.1 1186,261.1 1188,261.0 1190,261.0 1192,260.9 1194,260.9 1196,260.8 1198,260.7 1200,260.7 1202,260.6 1204,260.5 1206,260.3 1208,260.1 1210,260.0 1212,259.8 1214,259.6 1216,259.4 1218,259.3 1220,259.1 1222,258.9 1224,258.8 1226,258.6 1228,258.4 1230,258.0 1232,257.6 1234,257.1 1236,256.7 1238,256.2 1240,255.9 1242,255.8 1244,256.1 1246,256.8 1248,257.5 1250,258.1 1252,258.8 1254,259.5 1256,259.8 1258,260.0 1260,259.8 1262,259.6 1264,259.4 1266,259.3 1268,259.1 1270,258.9 1272,258.7 1274,258.5 1276,258.3 1278,258.1 1280,257.9 1282,257.7 1284,257.6 1286,257.8 1288,258.4 1290,259.0 1292,259.6 1294,260.1 1296,260.7 1298,261.2 1300,261.8 1302,262.3 1304,262.8 1306,263.0 1308,263.3 1310,263.5 1312,263.8 1314,264.0 1316,264.3 1318,264.5 1320,264.7 1322,264.9 1324,265.2 1326,265.4 1328,265.6 1330,265.8 1332,266.1 1334,266.3 1336,266.5 1338,266.8 1340,267.0 1342,267.2 1344,267.4 1346,267.7 1348,267.9 1350,268.1 1352,268.3 1354,268.6 1356,268.8 1358,269.0 1360,269.2 1362,269.3 1364,269.4 1366,269.5 1368,269.5 1370,269.6 1372,269.7 1374,269.8 1376,269.8 1378,269.9 1380,270.0 1382,270.1 1384,270.1 1386,270.2 1388,270.3"/>
<polygon fill="#ff5500" points="474,311 474,259.4 476,259.0 478,258.7 480,258.4 482,258.0 484,257.6 486,257.3 488,257.0 490,256.6 492,256.9 494,257.3 496,257.6 498,258.0 500,258.3 502,258.6 504,259.0 506,259.3 508,261.1 510,263.5 512,265.7 514,265.1 516,264.5 518,263.9 520,263.4 522,262.8 524,262.2 526,262.1 528,262.2 530,262.4 532,262.5 534,262.6 536,262.8 538,262.9 540,262.9 542,262.4 544,262.0 546,261.6 548,261.2 550,260.7 552,260.3 554,260.1 556,259.8 558,259.6 560,259.4 562,259.1 564,258.9 566,258.6 568,258.4 570,258.2 572,257.9 574,257.7 576,257.6 578,258.1 580,258.6 582,259.1 584,259.6 586,260.1 588,260.6 590,261.1 592,261.6 594,262.1 596,262.6 598,263.0 600,263.2 602,263.3 604,263.5 606,263.6 608,263.8 610,263.9 612,264.1 614,264.2 616,264.4 618,264.5 620,264.7 622,264.8 624,265.0 626,265.1 628,265.3 630,265.4 632,265.6 634,265.7 636,265.8 638,265.9 640,266.0 642,266.1 644,266.2 646,266.3 648,266.4 650,266.5 652,266.6 654,266.5 656,266.4 658,266.3 660,266.2 662,266.1 664,266.0 666,265.9 668,265.8 670,265.7 672,265.1 674,264.3 676,263.5 678,262.7 680,261.9 682,261.1 684,260.3 686,259.5 688,258.7 690,258.3 692,258.1 694,257.9 696,257.7 698,257.6 700,257.5 702,257.5 704,257.5 706,257.5 708,257.5 710,257.9 712,258.3 714,258.7 716,259.1 718,259.5 720,259.9 722,260.3 724,260.7 726,261.1 728,261.0 730,260.8 732,260.6 734,260.4 736,260.2 738,260.0 740,259.8 742,259.6 744,259.4 746,259.4 748,259.6 750,259.9 752,260.1 754,260.3 756,260.5 758,260.7 760,260.9 762,261.1 764,261.1 766,260.9 768,260.7 770,260.5 772,260.2 774,260.0 776,259.8 778,259.6 780,259.4 782,259.5 784,260.0 786,260.5 788,261.0 790,261.5 792,262.1 794,262.6 796,263.1 798,263.6 800,263.9 802,263.9 804,263.9 806,263.9 808,263.9 810,263.9 812,263.9 814,263.9 816,263.9 818,263.8 820,263.4 822,263.0 824,262.6 826,262.2 828,261.8 830,261.4 832,261.1 834,260.7 836,260.3 838,260.1 840,259.9 842,259.7 844,259.5 846,259.3 848,259.0 850,258.8 852,258.6 854,258.4 856,258.2 858,258.0 860,257.8 862,257.6 864,257.5 866,257.5 868,257.5 870,257.5 872,257.5 874,257.8 876,258.1 878,258.4 880,258.7 882,259.0 884,259.3 886,259.6 888,259.9 890,260.2 892,260.4 894,260.5 896,260.6 898,260.7 900,260.8 902,261.0 904,261.1 906,261.2 908,261.3 910,261.4 912,261.5 914,261.7 916,261.8 918,261.9 920,262.0 922,261.5 924,260.9 926,260.4 928,259.8 930,259.3 932,259.1 934,258.9 936,258.8 938,258.6 940,258.4 942,258.2 944,258.0 946,257.9 948,257.7 950,257.5 952,258.0 954,258.5 956,259.0 958,259.5 960,260.0 962,260.5 964,261.0 966,261.4 968,261.7 970,262.0 972,262.3 974,262.6 976,262.9 978,263.2 980,263.5 982,263.8 984,264.1 986,264.4 988,264.7 990,264.3 992,263.7 994,263.1 996,262.5 998,261.9 1000,261.3 1002,260.7 1004,260.1 1006,259.5 1008,259.0 1010,258.6 1012,258.2 1014,257.8 1016,257.4 1018,257.0 1020,256.5 1022,256.1 1024,255.7 1026,255.3 1028,254.9 1030,253.9 1032,252.6 1034,251.3 1036,251.7 1038,253.9 1040,257.4 1042,260.8 1044,264.2 1046,265.9 1048,266.1 1050,266.4 1052,266.7 1054,267.0 1056,267.3 1058,267.5 1060,267.8 1062,268.1 1064,268.4 1066,268.2 1068,267.8 1070,267.3 1072,266.8 1074,266.3 1076,265.9 1078,265.4 1080,264.9 1082,264.4 1084,264.0 1086,263.5 1088,263.0 1090,262.5 1092,262.0 1094,262.0 1096,262.0 1098,262.0 1100,262.0 1102,262.0 1104,262.0 1106,262.0 1108,262.0 1110,262.0 1112,262.0 1114,262.0 1116,262.0 1118,262.0 1120,262.0 1122,262.0 1124,262.0 1126,261.8 1128,261.5 1130,261.1 1132,260.7 1134,260.4 1136,260.0 1138,259.7 1140,259.3 1142,259.6 1144,259.9 1146,260.1 1148,260.4 1150,260.7 1152,261.0 1154,261.2 1156,261.6 1158,261.9 1160,262.2 1162,262.6 1164,262.9 1166,263.2 1168,263.6 1170,263.9 1172,264.2 1174,264.5 1176,264.8 1178,264.7 1180,264.7 1182,264.6 1184,264.5 1186,264.5 1188,264.4 1190,264.3 1192,264.3 1194,264.2 1196,264.1 1198,264.1 1200,264.0 1202,263.9 1204,263.8 1206,263.7 1208,263.5 1210,263.4 1212,263.2 1214,263.1 1216,262.9 1218,262.8 1220,262.6 1222,262.5 1224,262.3 1226,262.2 1228,262.0 1230,261.9 1232,261.7 1234,261.6 1236,261.5 1238,261.3 1240,261.3 1242,261.6 1244,261.9 1246,262.2 1248,262.5 1250,262.8 1252,263.1 1254,263.4 1256,263.7 1258,263.8 1260,263.5 1262,263.2 1264,262.8 1266,262.5 1268,262.1 1270,261.8 1272,261.5 1274,261.1 1276,260.8 1278,260.5 1280,260.1 1282,259.8 1284,259.5 1286,259.6 1288,260.2 1290,260.8 1292,261.4 1294,262.1 1296,262.7 1298,263.3 1300,263.9 1302,264.5 1304,264.9 1306,265.2 1308,265.4 1310,265.7 1312,265.9 1314,266.2 1316,266.4 1318,266.7 1320,266.9 1322,267.2 1324,267.4 1326,267.7 1328,268.0 1330,268.2 1332,268.5 1334,268.7 1336,269.0 1338,269.2 1340,269.5 1342,269.7 1344,270.0 1346,270.2 1348,270.5 1350,270.7 1352,271.0 1354,271.2 1356,271.5 1358,271.7 1360,272.0 1362,272.0 1364,272.0 1366,272.0 1368,272.0 1370,272.0 1372,272.0 1374,272.0 1376,272.0 1378,272.0 1380,272.0 1382,272.0 1384,272.0 1386,272.0 1388,272.0 1388,311"/>
<polyline fill="none" stroke="rgba(0,0,0,0.22)" stroke-width="0.6" points="474,259.4 476,259.0 478,258.7 480,258.4 482,258.0 484,257.6 486,257.3 488,257.0 490,256.6 492,256.9 494,257.3 496,257.6 498,258.0 500,258.3 502,258.6 504,259.0 506,259.3 508,261.1 510,263.5 512,265.7 514,265.1 516,264.5 518,263.9 520,263.4 522,262.8 524,262.2 526,262.1 528,262.2 530,262.4 532,262.5 534,262.6 536,262.8 538,262.9 540,262.9 542,262.4 544,262.0 546,261.6 548,261.2 550,260.7 552,260.3 554,260.1 556,259.8 558,259.6 560,259.4 562,259.1 564,258.9 566,258.6 568,258.4 570,258.2 572,257.9 574,257.7 576,257.6 578,258.1 580,258.6 582,259.1 584,259.6 586,260.1 588,260.6 590,261.1 592,261.6 594,262.1 596,262.6 598,263.0 600,263.2 602,263.3 604,263.5 606,263.6 608,263.8 610,263.9 612,264.1 614,264.2 616,264.4 618,264.5 620,264.7 622,264.8 624,265.0 626,265.1 628,265.3 630,265.4 632,265.6 634,265.7 636,265.8 638,265.9 640,266.0 642,266.1 644,266.2 646,266.3 648,266.4 650,266.5 652,266.6 654,266.5 656,266.4 658,266.3 660,266.2 662,266.1 664,266.0 666,265.9 668,265.8 670,265.7 672,265.1 674,264.3 676,263.5 678,262.7 680,261.9 682,261.1 684,260.3 686,259.5 688,258.7 690,258.3 692,258.1 694,257.9 696,257.7 698,257.6 700,257.5 702,257.5 704,257.5 706,257.5 708,257.5 710,257.9 712,258.3 714,258.7 716,259.1 718,259.5 720,259.9 722,260.3 724,260.7 726,261.1 728,261.0 730,260.8 732,260.6 734,260.4 736,260.2 738,260.0 740,259.8 742,259.6 744,259.4 746,259.4 748,259.6 750,259.9 752,260.1 754,260.3 756,260.5 758,260.7 760,260.9 762,261.1 764,261.1 766,260.9 768,260.7 770,260.5 772,260.2 774,260.0 776,259.8 778,259.6 780,259.4 782,259.5 784,260.0 786,260.5 788,261.0 790,261.5 792,262.1 794,262.6 796,263.1 798,263.6 800,263.9 802,263.9 804,263.9 806,263.9 808,263.9 810,263.9 812,263.9 814,263.9 816,263.9 818,263.8 820,263.4 822,263.0 824,262.6 826,262.2 828,261.8 830,261.4 832,261.1 834,260.7 836,260.3 838,260.1 840,259.9 842,259.7 844,259.5 846,259.3 848,259.0 850,258.8 852,258.6 854,258.4 856,258.2 858,258.0 860,257.8 862,257.6 864,257.5 866,257.5 868,257.5 870,257.5 872,257.5 874,257.8 876,258.1 878,258.4 880,258.7 882,259.0 884,259.3 886,259.6 888,259.9 890,260.2 892,260.4 894,260.5 896,260.6 898,260.7 900,260.8 902,261.0 904,261.1 906,261.2 908,261.3 910,261.4 912,261.5 914,261.7 916,261.8 918,261.9 920,262.0 922,261.5 924,260.9 926,260.4 928,259.8 930,259.3 932,259.1 934,258.9 936,258.8 938,258.6 940,258.4 942,258.2 944,258.0 946,257.9 948,257.7 950,257.5 952,258.0 954,258.5 956,259.0 958,259.5 960,260.0 962,260.5 964,261.0 966,261.4 968,261.7 970,262.0 972,262.3 974,262.6 976,262.9 978,263.2 980,263.5 982,263.8 984,264.1 986,264.4 988,264.7 990,264.3 992,263.7 994,263.1 996,262.5 998,261.9 1000,261.3 1002,260.7 1004,260.1 1006,259.5 1008,259.0 1010,258.6 1012,258.2 1014,257.8 1016,257.4 1018,257.0 1020,256.5 1022,256.1 1024,255.7 1026,255.3 1028,254.9 1030,253.9 1032,252.6 1034,251.3 1036,251.7 1038,253.9 1040,257.4 1042,260.8 1044,264.2 1046,265.9 1048,266.1 1050,266.4 1052,266.7 1054,267.0 1056,267.3 1058,267.5 1060,267.8 1062,268.1 1064,268.4 1066,268.2 1068,267.8 1070,267.3 1072,266.8 1074,266.3 1076,265.9 1078,265.4 1080,264.9 1082,264.4 1084,264.0 1086,263.5 1088,263.0 1090,262.5 1092,262.0 1094,262.0 1096,262.0 1098,262.0 1100,262.0 1102,262.0 1104,262.0 1106,262.0 1108,262.0 1110,262.0 1112,262.0 1114,262.0 1116,262.0 1118,262.0 1120,262.0 1122,262.0 1124,262.0 1126,261.8 1128,261.5 1130,261.1 1132,260.7 1134,260.4 1136,260.0 1138,259.7 1140,259.3 1142,259.6 1144,259.9 1146,260.1 1148,260.4 1150,260.7 1152,261.0 1154,261.2 1156,261.6 1158,261.9 1160,262.2 1162,262.6 1164,262.9 1166,263.2 1168,263.6 1170,263.9 1172,264.2 1174,264.5 1176,264.8 1178,264.7 1180,264.7 1182,264.6 1184,264.5 1186,264.5 1188,264.4 1190,264.3 1192,264.3 1194,264.2 1196,264.1 1198,264.1 1200,264.0 1202,263.9 1204,263.8 1206,263.7 1208,263.5 1210,263.4 1212,263.2 1214,263.1 1216,262.9 1218,262.8 1220,262.6 1222,262.5 1224,262.3 1226,262.2 1228,262.0 1230,261.9 1232,261.7 1234,261.6 1236,261.5 1238,261.3 1240,261.3 1242,261.6 1244,261.9 1246,262.2 1248,262.5 1250,262.8 1252,263.1 1254,263.4 1256,263.7 1258,263.8 1260,263.5 1262,263.2 1264,262.8 1266,262.5 1268,262.1 1270,261.8 1272,261.5 1274,261.1 1276,260.8 1278,260.5 1280,260.1 1282,259.8 1284,259.5 1286,259.6 1288,260.2 1290,260.8 1292,261.4 1294,262.1 1296,262.7 1298,263.3 1300,263.9 1302,264.5 1304,264.9 1306,265.2 1308,265.4 1310,265.7 1312,265.9 1314,266.2 1316,266.4 1318,266.7 1320,266.9 1322,267.2 1324,267.4 1326,267.7 1328,268.0 1330,268.2 1332,268.5 1334,268.7 1336,269.0 1338,269.2 1340,269.5 1342,269.7 1344,270.0 1346,270.2 1348,270.5 1350,270.7 1352,271.0 1354,271.2 1356,271.5 1358,271.7 1360,272.0 1362,272.0 1364,272.0 1366,272.0 1368,272.0 1370,272.0 1372,272.0 1374,272.0 1376,272.0 1378,272.0 1380,272.0 1382,272.0 1384,272.0 1386,272.0 1388,272.0"/>
<line x1="478.3" y1="152" x2="478.3" y2="311" stroke="#6c6c6c" stroke-width="1" stroke-dasharray="5,2"/>
<line x1="591.5" y1="152" x2="591.5" y2="311" stroke="#6c6c6c" stroke-width="1" stroke-dasharray="5,2"/>
<line x1="704.7" y1="152" x2="704.7" y2="311" stroke="#6c6c6c" stroke-width="1" stroke-dasharray="5,2"/>
<line x1="817.9" y1="152" x2="817.9" y2="311" stroke="#6c6c6c" stroke-width="1" stroke-dasharray="5,2"/>
<line x1="931.1" y1="152" x2="931.1" y2="311" stroke="#6c6c6c" stroke-width="1" stroke-dasharray="5,2"/>
<line x1="1044.3" y1="152" x2="1044.3" y2="311" stroke="#6c6c6c" stroke-width="1" stroke-dasharray="5,2"/>
<line x1="1157.5" y1="152" x2="1157.5" y2="311" stroke="#6c6c6c" stroke-width="1" stroke-dasharray="5,2"/>
<line x1="1270.7" y1="152" x2="1270.7" y2="311" stroke="#6c6c6c" stroke-width="1" stroke-dasharray="5,2"/>
<line x1="1383.9" y1="152" x2="1383.9" y2="311" stroke="#6c6c6c" stroke-width="1" stroke-dasharray="5,2"/>
<line x1="474" y1="183.5" x2="1388" y2="183.5" stroke="#6c6c6c" stroke-width="1" stroke-dasharray="5,2"/>
<line x1="474" y1="215.5" x2="1388" y2="215.5" stroke="#6c6c6c" stroke-width="1" stroke-dasharray="5,2"/>
<line x1="474" y1="247.5" x2="1388" y2="247.5" stroke="#6c6c6c" stroke-width="1" stroke-dasharray="5,2"/>
<line x1="474" y1="279.5" x2="1388" y2="279.5" stroke="#6c6c6c" stroke-width="1" stroke-dasharray="5,2"/>
<polyline points="475.0,266.2 476.5,272.0 478.0,268.2 479.5,281.6 481.0,267.5 482.5,284.3 484.0,291.0 485.5,270.4 487.0,282.8 488.5,283.7 490.0,288.0 491.5,281.9 493.0,274.7 494.5,277.7 496.0,289.3 497.5,287.4 499.0,269.7 500.5,268.3 502.0,268.1 503.5,266.2 505.0,274.6 506.5,266.6 508.0,248.1 509.5,243.4 511.0,232.0 512.5,240.9 514.0,236.1 515.5,239.9 517.0,233.8 518.5,232.7 520.0,276.5 521.5,280.8 523.0,288.2 524.5,284.8 526.0,273.8 527.5,288.6 529.0,292.2 530.5,289.7 532.0,289.0 533.5,270.5 535.0,279.2 536.5,269.4 538.0,284.4 539.5,271.6 541.0,283.4 542.5,273.4 544.0,283.2 545.5,274.9 547.0,269.0 548.5,276.3 550.0,273.7 551.5,285.5 553.0,271.0 554.5,229.1 556.0,230.1 557.5,238.9 559.0,221.0 560.5,231.2 562.0,229.2 563.5,234.2 565.0,239.3 566.5,224.8 568.0,233.4 569.5,229.6 571.0,230.3 572.5,221.0 574.0,235.9 575.5,239.5 577.0,225.8 578.5,225.0 580.0,239.9 581.5,238.0 583.0,238.0 584.5,238.0 586.0,252.9 587.5,251.7 589.0,244.9 590.5,248.7 592.0,258.0 593.5,272.6 595.0,270.6 596.5,275.6 598.0,276.1 599.5,278.9 601.0,276.0 602.5,271.1 604.0,277.4 605.5,270.5 607.0,277.8 608.5,278.2 610.0,256.9 611.5,251.0 613.0,246.2 614.5,249.5 616.0,270.0 617.5,273.2 619.0,280.4 620.5,260.8 622.0,268.7 623.5,268.0 625.0,271.9 626.5,275.0 628.0,272.2 629.5,270.1 631.0,276.5 632.5,279.0 634.0,287.7 635.5,287.7 637.0,288.7 638.5,278.6 640.0,292.3 641.5,279.3 643.0,283.0 644.5,261.1 646.0,264.2 647.5,264.8 649.0,246.0 650.5,249.9 652.0,249.9 653.5,279.0 655.0,273.8 656.5,282.4 658.0,271.1 659.5,274.8 661.0,287.7 662.5,282.5 664.0,276.0 665.5,267.5 667.0,284.2 668.5,249.5 670.0,238.5 671.5,241.4 673.0,248.1 674.5,249.0 676.0,239.7 677.5,254.9 679.0,241.1 680.5,239.6 682.0,252.6 683.5,237.4 685.0,249.0 686.5,238.4 688.0,247.2 689.5,240.1 691.0,275.3 692.5,287.2 694.0,275.4 695.5,273.0 697.0,275.2 698.5,266.5 700.0,263.6 701.5,269.5 703.0,270.2 704.5,272.5 706.0,293.7 707.5,276.6 709.0,295.2 710.5,297.4 712.0,290.5 713.5,273.0 715.0,281.2 716.5,269.2 718.0,281.3 719.5,283.5 721.0,273.0 722.5,267.3 724.0,278.5 725.5,237.0 727.0,240.8 728.5,244.0 730.0,253.7 731.5,242.1 733.0,237.0 734.5,251.4 736.0,299.9 737.5,292.7 739.0,279.8 740.5,279.7 742.0,281.2 743.5,282.0 745.0,245.0 746.5,257.7 748.0,291.6 749.5,297.3 751.0,300.3 752.5,284.2 754.0,297.9 755.5,286.2 757.0,302.5 758.5,296.9 760.0,295.0 761.5,280.7 763.0,277.2 764.5,294.1 766.0,289.9 767.5,290.8 769.0,288.0 770.5,295.7 772.0,285.7 773.5,284.0 775.0,285.1 776.5,282.9 778.0,289.2 779.5,224.6 781.0,208.0 782.5,208.0 784.0,216.3 785.5,219.9 787.0,209.2 788.5,210.9 790.0,278.7 791.5,240.0 793.0,247.9 794.5,252.0 796.0,251.4 797.5,240.5 799.0,240.0 800.5,257.5 802.0,248.8 803.5,246.0 805.0,283.5 806.5,283.6 808.0,278.7 809.5,269.9 811.0,289.3 812.5,279.6 814.0,279.6 815.5,289.3 817.0,294.3 818.5,295.3 820.0,282.8 821.5,291.4 823.0,283.4 824.5,256.6 826.0,271.7 827.5,270.7 829.0,272.9 830.5,267.9 832.0,257.8 833.5,295.9 835.0,299.4 836.5,290.4 838.0,296.5 839.5,295.0 841.0,279.4 842.5,289.4 844.0,288.3 845.5,286.1 847.0,271.5 848.5,282.5 850.0,259.5 851.5,259.4 853.0,298.4 854.5,295.7 856.0,284.6 857.5,300.9 859.0,291.6 860.5,298.8 862.0,283.6 863.5,300.6 865.0,290.1 866.5,294.1 868.0,292.5 869.5,218.4 871.0,207.0 872.5,202.0 874.0,207.9 875.5,202.9 877.0,210.9 878.5,216.9 880.0,207.0 881.5,202.0 883.0,202.0 884.5,234.3 886.0,237.8 887.5,228.0 889.0,239.6 890.5,229.6 892.0,228.0 893.5,292.4 895.0,284.1 896.5,292.6 898.0,284.3 899.5,274.6 901.0,274.8 902.5,275.7 904.0,277.4 905.5,267.0 907.0,276.3 908.5,274.4 910.0,266.8 911.5,272.3 913.0,272.7 914.5,261.8 916.0,258.8 917.5,264.8 919.0,261.1 920.5,254.0 922.0,269.1 923.5,263.9 925.0,268.7 926.5,267.2 928.0,267.1 929.5,288.5 931.0,272.1 932.5,270.5 934.0,261.3 935.5,277.3 937.0,278.6 938.5,282.4 940.0,295.6 941.5,281.2 943.0,283.5 944.5,295.1 946.0,297.3 947.5,290.4 949.0,281.4 950.5,248.1 952.0,299.3 953.5,291.9 955.0,289.8 956.5,286.4 958.0,289.9 959.5,287.8 961.0,289.6 962.5,293.7 964.0,291.3 965.5,283.0 967.0,280.2 968.5,291.9 970.0,292.1 971.5,273.4 973.0,257.4 974.5,271.6 976.0,272.6 977.5,256.0 979.0,259.8 980.5,289.3 982.0,278.0 983.5,292.5 985.0,279.4 986.5,288.1 988.0,279.1 989.5,278.0 991.0,279.6 992.5,288.6 994.0,296.0 995.5,287.0 997.0,297.8 998.5,288.9 1000.0,293.2 1001.5,283.8 1003.0,276.8 1004.5,273.1 1006.0,270.1 1007.5,265.3 1009.0,259.1 1010.5,253.0 1012.0,269.4 1013.5,264.4 1015.0,261.4 1016.5,277.0 1018.0,274.4 1019.5,271.5 1021.0,273.1 1022.5,283.6 1024.0,270.8 1025.5,277.6 1027.0,280.1 1028.5,220.0 1030.0,219.6 1031.5,228.6 1033.0,226.0 1034.5,222.1 1036.0,223.3 1037.5,216.9 1039.0,229.4 1040.5,282.2 1042.0,296.5 1043.5,291.8 1045.0,285.0 1046.5,290.8 1048.0,288.4 1049.5,275.8 1051.0,284.0 1052.5,277.0 1054.0,291.0 1055.5,280.6 1057.0,280.7 1058.5,278.2 1060.0,274.5 1061.5,277.6 1063.0,277.0 1064.5,287.5 1066.0,292.5 1067.5,278.6 1069.0,276.0 1070.5,285.2 1072.0,276.3 1073.5,283.1 1075.0,291.4 1076.5,279.4 1078.0,290.1 1079.5,285.2 1081.0,272.7 1082.5,273.1 1084.0,277.9 1085.5,264.3 1087.0,265.3 1088.5,273.6 1090.0,279.8 1091.5,274.6 1093.0,279.2 1094.5,265.8 1096.0,272.5 1097.5,257.0 1099.0,270.1 1100.5,272.3 1102.0,281.3 1103.5,264.5 1105.0,274.5 1106.5,283.3 1108.0,280.9 1109.5,241.8 1111.0,233.0 1112.5,249.4 1114.0,232.0 1115.5,250.2 1117.0,246.1 1118.5,244.8 1120.0,270.8 1121.5,261.2 1123.0,264.6 1124.5,271.8 1126.0,271.8 1127.5,266.0 1129.0,275.2 1130.5,258.8 1132.0,212.3 1133.5,209.0 1135.0,213.1 1136.5,223.4 1138.0,222.6 1139.5,209.3 1141.0,212.8 1142.5,265.5 1144.0,279.8 1145.5,277.8 1147.0,276.0 1148.5,281.3 1150.0,293.0 1151.5,282.5 1153.0,286.3 1154.5,282.2 1156.0,276.2 1157.5,276.2 1159.0,271.4 1160.5,268.4 1162.0,276.3 1163.5,273.7 1165.0,211.3 1166.5,208.1 1168.0,224.1 1169.5,213.4 1171.0,208.4 1172.5,207.0 1174.0,208.7 1175.5,287.1 1177.0,275.4 1178.5,282.9 1180.0,273.0 1181.5,281.7 1183.0,276.7 1184.5,282.6 1186.0,278.1 1187.5,274.9 1189.0,273.0 1190.5,241.1 1192.0,246.3 1193.5,243.2 1195.0,238.6 1196.5,235.2 1198.0,290.2 1199.5,292.8 1201.0,281.0 1202.5,295.5 1204.0,298.6 1205.5,296.4 1207.0,302.6 1208.5,300.5 1210.0,286.4 1211.5,302.7 1213.0,287.9 1214.5,255.4 1216.0,268.5 1217.5,250.7 1219.0,255.7 1220.5,286.9 1222.0,278.5 1223.5,278.8 1225.0,291.5 1226.5,288.9 1228.0,293.3 1229.5,295.4 1231.0,297.6 1232.5,298.1 1234.0,201.1 1235.5,204.5 1237.0,194.0 1238.5,198.4 1240.0,194.3 1241.5,204.3 1243.0,197.4 1244.5,192.5 1246.0,197.6 1247.5,189.5 1249.0,186.0 1250.5,191.5 1252.0,186.0 1253.5,283.7 1255.0,286.0 1256.5,294.2 1258.0,301.2 1259.5,284.7 1261.0,295.7 1262.5,281.5 1264.0,287.7 1265.5,281.0 1267.0,236.8 1268.5,242.7 1270.0,236.1 1271.5,235.6 1273.0,243.0 1274.5,230.0 1276.0,234.7 1277.5,242.4 1279.0,245.4 1280.5,248.5 1282.0,232.7 1283.5,240.8 1285.0,233.9 1286.5,242.4 1288.0,245.6 1289.5,284.5 1291.0,287.2 1292.5,298.7 1294.0,285.2 1295.5,291.6 1297.0,296.7 1298.5,286.0 1300.0,298.3 1301.5,250.0 1303.0,254.5 1304.5,250.7 1306.0,254.6 1307.5,251.7 1309.0,250.0 1310.5,264.7 1312.0,276.8 1313.5,285.2 1315.0,284.2 1316.5,289.9 1318.0,289.2 1319.5,283.6 1321.0,273.3 1322.5,286.0 1324.0,270.8 1325.5,288.4 1327.0,274.1 1328.5,272.3 1330.0,271.3 1331.5,276.2 1333.0,287.2 1334.5,259.8 1336.0,257.4 1337.5,257.0 1339.0,246.4 1340.5,248.1 1342.0,247.7 1343.5,250.5 1345.0,287.1 1346.5,287.0 1348.0,265.7 1349.5,284.8 1351.0,283.3 1352.5,272.7 1354.0,277.2 1355.5,278.7 1357.0,265.3 1358.5,275.7 1360.0,286.3 1361.5,287.5 1363.0,291.7 1364.5,276.1 1366.0,290.9 1367.5,250.7 1369.0,260.0 1370.5,243.7 1372.0,252.1 1373.5,243.0 1375.0,257.7 1376.5,289.8 1378.0,273.5 1379.5,278.3 1381.0,273.2 1382.5,283.1 1384.0,282.6 1385.5,270.7 1387.0,291.7" fill="none" stroke="#fff" stroke-width="1" stroke-linejoin="round"/>
<line x1="474" y1="311.5" x2="1388" y2="311.5" stroke="#000" stroke-width="1.3"/>
<rect x="474" y="397" width="914" height="168" fill="#000"/>
<g shape-rendering="crispEdges">
<path fill="#cbc320" d="M474 523h3v6h-3zM481 523h4v6h-4zM489 523h1v6h-1zM526 523h1v6h-1zM731 523h4v6h-4zM747 523h2v6h-2zM751 523h2v6h-2zM764 523h3v6h-3zM832 523h4v6h-4zM930 523h2v6h-2zM935 523h1v6h-1zM1154 523h4v6h-4zM479 530h2v6h-2zM483 530h5v6h-5zM611 530h1v6h-1zM655 530h3v6h-3zM659 530h2v6h-2zM855 530h3v6h-3zM1133 530h7v6h-7zM1300 530h4v6h-4zM1308 530h4v6h-4zM1370 530h3v6h-3zM609 537h1v6h-1zM623 537h1v6h-1zM626 537h2v6h-2zM642 537h1v6h-1zM716 537h1v6h-1zM724 537h3v6h-3zM728 537h7v6h-7zM750 537h3v6h-3zM953 537h2v6h-2zM962 537h8v6h-8zM977 537h3v6h-3zM1138 537h3v6h-3zM1172 537h2v6h-2zM554 544h4v6h-4zM632 544h2v6h-2zM747 544h3v6h-3zM765 544h2v6h-2zM790 544h1v6h-1zM792 544h5v6h-5zM1154 544h2v6h-2zM667 551h4v6h-4zM679 551h3v6h-3zM968 551h2v6h-2zM974 551h2v6h-2zM1001 551h3v6h-3zM1119 551h8v6h-8zM1171 551h1v6h-1zM1328 551h4v6h-4zM528 558h2v6h-2zM534 558h4v6h-4zM540 558h1v6h-1zM752 558h2v6h-2zM852 558h3v6h-3zM954 558h1v6h-1zM1020 558h1v6h-1zM1046 558h3v6h-3zM1051 558h4v6h-4zM1068 558h1v6h-1zM1126 558h1v6h-1zM1149 558h2v6h-2zM1251 558h2v6h-2zM1256 558h4v6h-4zM1261 558h8v6h-8zM1332 558h3v6h-3z"/>
<path fill="#c8d020" d="M477 523h4v6h-4zM532 523h2v6h-2zM688 523h4v6h-4zM696 523h2v6h-2zM700 523h2v6h-2zM709 523h1v6h-1zM735 523h4v6h-4zM743 523h4v6h-4zM749 523h2v6h-2zM762 523h2v6h-2zM814 523h3v6h-3zM826 523h2v6h-2zM836 523h4v6h-4zM922 523h2v6h-2zM1330 523h1v6h-1zM476 530h3v6h-3zM653 530h2v6h-2zM661 530h3v6h-3zM666 530h3v6h-3zM810 530h2v6h-2zM971 530h1v6h-1zM1386 530h2v6h-2zM477 537h2v6h-2zM574 537h2v6h-2zM578 537h1v6h-1zM610 537h1v6h-1zM612 537h3v6h-3zM619 537h3v6h-3zM628 537h6v6h-6zM714 537h2v6h-2zM721 537h1v6h-1zM727 537h1v6h-1zM742 537h2v6h-2zM756 537h3v6h-3zM955 537h2v6h-2zM960 537h2v6h-2zM972 537h5v6h-5zM980 537h5v6h-5zM992 537h5v6h-5zM1062 537h2v6h-2zM1135 537h3v6h-3zM1141 537h4v6h-4zM1151 537h2v6h-2zM1244 537h1v6h-1zM1253 537h2v6h-2zM1359 537h4v6h-4zM504 544h2v6h-2zM546 544h2v6h-2zM575 544h4v6h-4zM628 544h1v6h-1zM634 544h1v6h-1zM745 544h2v6h-2zM750 544h4v6h-4zM759 544h6v6h-6zM771 544h4v6h-4zM797 544h4v6h-4zM1160 544h2v6h-2zM1266 544h2v6h-2zM1324 544h3v6h-3zM673 551h4v6h-4zM966 551h1v6h-1zM1017 551h3v6h-3zM1025 551h3v6h-3zM1127 551h5v6h-5zM1136 551h2v6h-2zM1146 551h1v6h-1zM1166 551h4v6h-4zM1174 551h2v6h-2zM1332 551h4v6h-4zM523 558h3v6h-3zM858 558h4v6h-4zM920 558h4v6h-4zM933 558h2v6h-2zM959 558h1v6h-1zM1113 558h4v6h-4zM1119 558h1v6h-1zM1131 558h2v6h-2zM1135 558h7v6h-7zM1152 558h2v6h-2zM1328 558h4v6h-4zM1335 558h1v6h-1zM1339 558h3v6h-3zM1344 558h2v6h-2zM1364 558h2v6h-2z"/>
<path fill="#d2aa20" d="M485 523h4v6h-4zM668 523h3v6h-3zM714 523h2v6h-2zM741 523h2v6h-2zM753 523h2v6h-2zM756 523h4v6h-4zM817 523h8v6h-8zM916 523h4v6h-4zM924 523h4v6h-4zM932 523h3v6h-3zM1311 523h4v6h-4zM1317 523h2v6h-2zM1335 523h10v6h-10zM1353 523h1v6h-1zM551 530h4v6h-4zM1288 530h6v6h-6zM1305 530h3v6h-3zM1366 530h2v6h-2zM1379 530h2v6h-2zM570 537h3v6h-3zM611 537h1v6h-1zM634 537h8v6h-8zM759 537h1v6h-1zM950 537h3v6h-3zM970 537h2v6h-2zM1289 537h2v6h-2zM769 544h2v6h-2zM596 551h2v6h-2zM621 551h11v6h-11zM932 551h3v6h-3zM955 551h2v6h-2zM963 551h3v6h-3zM1170 551h1v6h-1zM1336 551h2v6h-2zM1341 551h2v6h-2zM594 558h4v6h-4zM738 558h3v6h-3zM828 558h4v6h-4zM836 558h5v6h-5zM842 558h3v6h-3zM935 558h3v6h-3zM1014 558h6v6h-6zM1060 558h1v6h-1zM1111 558h2v6h-2zM1158 558h1v6h-1zM1250 558h1v6h-1z"/>
<path fill="#16c5a0" d="M490 523h1v6h-1zM494 523h4v6h-4zM504 523h4v6h-4zM648 523h3v6h-3zM653 523h1v6h-1zM793 523h4v6h-4zM802 523h1v6h-1zM967 523h2v6h-2zM970 523h2v6h-2zM989 523h1v6h-1zM995 523h2v6h-2zM1000 523h2v6h-2zM1005 523h4v6h-4zM1027 523h1v6h-1zM1268 523h5v6h-5zM1277 523h1v6h-1zM1285 523h3v6h-3zM1297 523h2v6h-2zM581 530h2v6h-2zM1035 530h3v6h-3zM1264 530h2v6h-2zM1326 530h3v6h-3zM1344 530h3v6h-3zM1349 530h4v6h-4zM529 537h1v6h-1zM531 537h4v6h-4zM537 537h1v6h-1zM655 537h3v6h-3zM669 537h4v6h-4zM674 537h4v6h-4zM867 537h2v6h-2zM873 537h5v6h-5zM885 537h1v6h-1zM1018 537h2v6h-2zM1027 537h2v6h-2zM1037 537h3v6h-3zM1049 537h2v6h-2zM1179 537h4v6h-4zM1186 537h3v6h-3zM723 544h4v6h-4zM802 544h3v6h-3zM817 544h10v6h-10zM914 544h2v6h-2zM920 544h2v6h-2zM982 544h6v6h-6zM1278 544h4v6h-4zM1320 544h2v6h-2zM1369 544h3v6h-3zM571 551h3v6h-3zM588 551h5v6h-5zM809 551h1v6h-1zM1042 551h2v6h-2zM1051 551h1v6h-1zM1275 551h1v6h-1zM1286 551h4v6h-4zM1312 551h2v6h-2zM509 558h4v6h-4zM1036 558h3v6h-3zM1212 558h3v6h-3zM1219 558h4v6h-4zM1227 558h3v6h-3zM1276 558h3v6h-3z"/>
<path fill="#1ac380" d="M491 523h3v6h-3zM670 530h4v6h-4zM1190 530h2v6h-2zM833 537h4v6h-4zM888 537h6v6h-6zM1024 537h3v6h-3zM1031 537h2v6h-2zM1035 537h2v6h-2zM1040 537h3v6h-3zM1051 537h2v6h-2zM551 551h2v6h-2zM1044 551h2v6h-2zM1047 551h4v6h-4zM1307 551h3v6h-3zM1314 551h1v6h-1zM1208 558h4v6h-4z"/>
<path fill="#10c8e0" d="M498 523h1v6h-1zM578 523h2v6h-2zM780 523h5v6h-5zM799 523h2v6h-2zM936 523h1v6h-1zM941 523h2v6h-2zM951 523h3v6h-3zM963 523h4v6h-4zM972 523h7v6h-7zM983 523h2v6h-2zM1002 523h3v6h-3zM1011 523h1v6h-1zM1028 523h8v6h-8zM1043 523h1v6h-1zM1236 523h4v6h-4zM1301 523h2v6h-2zM507 530h1v6h-1zM510 530h4v6h-4zM750 530h6v6h-6zM905 530h2v6h-2zM911 530h2v6h-2zM925 530h3v6h-3zM1033 530h2v6h-2zM1041 530h3v6h-3zM1170 530h8v6h-8zM1218 530h4v6h-4zM1224 530h3v6h-3zM1268 530h2v6h-2zM1323 530h3v6h-3zM1338 530h2v6h-2zM1359 530h4v6h-4zM682 537h4v6h-4zM695 537h2v6h-2zM807 537h3v6h-3zM812 537h3v6h-3zM493 544h4v6h-4zM596 544h1v6h-1zM599 544h2v6h-2zM602 544h1v6h-1zM738 544h1v6h-1zM830 544h2v6h-2zM1090 544h1v6h-1zM1096 544h2v6h-2zM1359 544h3v6h-3zM873 551h2v6h-2zM1211 551h3v6h-3zM1243 551h4v6h-4zM1254 551h7v6h-7zM1273 551h2v6h-2zM507 558h2v6h-2zM520 558h2v6h-2zM694 558h3v6h-3zM1035 558h1v6h-1z"/>
<path fill="#15c6b0" d="M499 523h2v6h-2zM521 523h1v6h-1zM768 523h6v6h-6zM789 523h4v6h-4zM937 523h4v6h-4zM949 523h2v6h-2zM954 523h1v6h-1zM990 523h3v6h-3zM999 523h1v6h-1zM1024 523h3v6h-3zM1041 523h2v6h-2zM1232 523h2v6h-2zM1276 523h1v6h-1zM1290 523h3v6h-3zM1295 523h1v6h-1zM508 530h2v6h-2zM514 530h3v6h-3zM530 530h2v6h-2zM587 530h4v6h-4zM674 530h1v6h-1zM729 530h4v6h-4zM737 530h2v6h-2zM789 530h2v6h-2zM898 530h2v6h-2zM920 530h2v6h-2zM1044 530h2v6h-2zM1053 530h2v6h-2zM1231 530h1v6h-1zM1275 530h1v6h-1zM1321 530h2v6h-2zM1347 530h2v6h-2zM1353 530h2v6h-2zM538 537h2v6h-2zM673 537h1v6h-1zM678 537h2v6h-2zM688 537h2v6h-2zM713 537h1v6h-1zM747 537h3v6h-3zM810 537h2v6h-2zM815 537h2v6h-2zM821 537h2v6h-2zM825 537h2v6h-2zM829 537h2v6h-2zM837 537h6v6h-6zM846 537h1v6h-1zM905 537h4v6h-4zM911 537h1v6h-1zM1020 537h4v6h-4zM1029 537h2v6h-2zM1033 537h2v6h-2zM1046 537h1v6h-1zM1267 537h6v6h-6zM489 544h2v6h-2zM497 544h1v6h-1zM718 544h2v6h-2zM808 544h1v6h-1zM811 544h2v6h-2zM814 544h1v6h-1zM912 544h2v6h-2zM916 544h4v6h-4zM988 544h2v6h-2zM1082 544h4v6h-4zM1091 544h5v6h-5zM1214 544h7v6h-7zM1222 544h2v6h-2zM1274 544h1v6h-1zM1286 544h9v6h-9zM1311 544h2v6h-2zM1372 544h1v6h-1zM578 551h3v6h-3zM582 551h1v6h-1zM798 551h1v6h-1zM803 551h6v6h-6zM870 551h1v6h-1zM1193 551h7v6h-7zM1285 551h1v6h-1zM1290 551h5v6h-5zM1305 551h2v6h-2zM513 558h1v6h-1zM518 558h2v6h-2zM688 558h2v6h-2zM698 558h1v6h-1zM1031 558h4v6h-4zM1223 558h4v6h-4zM1279 558h1v6h-1zM1384 558h1v6h-1z"/>
<path fill="#12c7d0" d="M501 523h3v6h-3zM508 523h4v6h-4zM582 523h2v6h-2zM643 523h3v6h-3zM767 523h1v6h-1zM785 523h4v6h-4zM801 523h1v6h-1zM979 523h3v6h-3zM988 523h1v6h-1zM997 523h2v6h-2zM1036 523h2v6h-2zM1281 523h2v6h-2zM1288 523h2v6h-2zM521 530h9v6h-9zM534 530h4v6h-4zM723 530h2v6h-2zM733 530h4v6h-4zM743 530h2v6h-2zM779 530h4v6h-4zM791 530h3v6h-3zM895 530h3v6h-3zM900 530h2v6h-2zM908 530h3v6h-3zM982 530h9v6h-9zM1046 530h2v6h-2zM1050 530h3v6h-3zM1180 530h2v6h-2zM1260 530h4v6h-4zM1267 530h1v6h-1zM1270 530h2v6h-2zM1335 530h3v6h-3zM540 537h2v6h-2zM546 537h4v6h-4zM660 537h2v6h-2zM668 537h1v6h-1zM690 537h5v6h-5zM697 537h2v6h-2zM803 537h4v6h-4zM817 537h4v6h-4zM887 537h1v6h-1zM479 544h4v6h-4zM485 544h4v6h-4zM715 544h3v6h-3zM720 544h1v6h-1zM734 544h4v6h-4zM805 544h3v6h-3zM1086 544h1v6h-1zM1105 544h2v6h-2zM1109 544h3v6h-3zM1221 544h1v6h-1zM1298 544h8v6h-8zM1313 544h7v6h-7zM1322 544h1v6h-1zM1373 544h2v6h-2zM791 551h3v6h-3zM799 551h4v6h-4zM1191 551h2v6h-2zM1200 551h8v6h-8zM1210 551h1v6h-1zM1247 551h7v6h-7zM1295 551h6v6h-6zM498 558h3v6h-3zM516 558h2v6h-2zM697 558h1v6h-1zM699 558h2v6h-2zM881 558h4v6h-4zM888 558h7v6h-7z"/>
<path fill="#13c6c0" d="M512 523h5v6h-5zM580 523h2v6h-2zM646 523h2v6h-2zM651 523h2v6h-2zM774 523h6v6h-6zM797 523h2v6h-2zM943 523h6v6h-6zM955 523h8v6h-8zM969 523h1v6h-1zM982 523h1v6h-1zM985 523h3v6h-3zM993 523h2v6h-2zM1009 523h2v6h-2zM1038 523h3v6h-3zM1234 523h2v6h-2zM1267 523h1v6h-1zM1296 523h1v6h-1zM502 530h5v6h-5zM517 530h4v6h-4zM532 530h2v6h-2zM584 530h3v6h-3zM591 530h1v6h-1zM725 530h4v6h-4zM739 530h2v6h-2zM772 530h3v6h-3zM786 530h3v6h-3zM892 530h3v6h-3zM907 530h1v6h-1zM917 530h2v6h-2zM979 530h3v6h-3zM991 530h2v6h-2zM1029 530h4v6h-4zM1048 530h2v6h-2zM1055 530h2v6h-2zM1182 530h2v6h-2zM1186 530h4v6h-4zM1222 530h2v6h-2zM1227 530h4v6h-4zM1266 530h1v6h-1zM1272 530h3v6h-3zM1317 530h4v6h-4zM1340 530h4v6h-4zM1355 530h4v6h-4zM530 537h1v6h-1zM542 537h4v6h-4zM654 537h1v6h-1zM662 537h6v6h-6zM680 537h2v6h-2zM686 537h2v6h-2zM700 537h4v6h-4zM760 537h12v6h-12zM801 537h2v6h-2zM831 537h2v6h-2zM843 537h3v6h-3zM862 537h2v6h-2zM869 537h4v6h-4zM878 537h4v6h-4zM886 537h1v6h-1zM912 537h1v6h-1zM1017 537h1v6h-1zM477 544h2v6h-2zM483 544h2v6h-2zM491 544h2v6h-2zM721 544h2v6h-2zM727 544h7v6h-7zM739 544h6v6h-6zM809 544h2v6h-2zM813 544h1v6h-1zM815 544h2v6h-2zM827 544h3v6h-3zM1101 544h4v6h-4zM1224 544h2v6h-2zM1275 544h3v6h-3zM1282 544h2v6h-2zM786 551h5v6h-5zM796 551h2v6h-2zM871 551h2v6h-2zM1036 551h3v6h-3zM1188 551h3v6h-3zM1208 551h2v6h-2zM1271 551h2v6h-2zM1276 551h9v6h-9zM1303 551h2v6h-2zM1310 551h2v6h-2zM501 558h6v6h-6zM514 558h2v6h-2zM690 558h4v6h-4zM701 558h3v6h-3zM872 558h9v6h-9zM1029 558h2v6h-2zM1205 558h3v6h-3zM1232 558h3v6h-3zM1281 558h2v6h-2zM1385 558h3v6h-3z"/>
<path fill="#18c490" d="M517 523h4v6h-4zM1273 523h3v6h-3zM1278 523h3v6h-3zM1283 523h2v6h-2zM1293 523h2v6h-2zM1299 523h2v6h-2zM583 530h1v6h-1zM669 530h1v6h-1zM1038 530h3v6h-3zM1057 530h2v6h-2zM1184 530h2v6h-2zM526 537h3v6h-3zM535 537h2v6h-2zM658 537h2v6h-2zM823 537h2v6h-2zM827 537h2v6h-2zM858 537h4v6h-4zM864 537h3v6h-3zM882 537h3v6h-3zM909 537h2v6h-2zM1044 537h2v6h-2zM1047 537h2v6h-2zM1183 537h3v6h-3zM910 544h2v6h-2zM1284 544h2v6h-2zM1362 544h7v6h-7zM574 551h4v6h-4zM581 551h1v6h-1zM794 551h2v6h-2zM1046 551h1v6h-1zM885 558h3v6h-3zM895 558h1v6h-1zM1215 558h4v6h-4zM1230 558h2v6h-2zM1270 558h6v6h-6zM1280 558h1v6h-1zM1283 558h1v6h-1zM1372 558h12v6h-12z"/>
<path fill="#96cb2a" d="M522 523h1v6h-1zM674 523h12v6h-12zM707 523h2v6h-2zM1331 523h2v6h-2zM592 530h3v6h-3zM600 530h1v6h-1zM614 530h3v6h-3zM797 530h2v6h-2zM854 530h1v6h-1zM858 530h2v6h-2zM928 530h5v6h-5zM937 530h1v6h-1zM959 530h2v6h-2zM1258 530h2v6h-2zM479 537h3v6h-3zM510 537h2v6h-2zM515 537h2v6h-2zM520 537h2v6h-2zM1001 537h2v6h-2zM1016 537h1v6h-1zM1053 537h3v6h-3zM1129 537h3v6h-3zM1206 537h4v6h-4zM1215 537h2v6h-2zM1223 537h4v6h-4zM1233 537h8v6h-8zM1249 537h4v6h-4zM1307 537h1v6h-1zM498 544h3v6h-3zM550 544h4v6h-4zM587 544h1v6h-1zM689 544h2v6h-2zM779 544h1v6h-1zM785 544h4v6h-4zM791 544h1v6h-1zM991 544h2v6h-2zM1123 544h3v6h-3zM1128 544h2v6h-2zM1140 544h2v6h-2zM1145 544h4v6h-4zM1327 544h1v6h-1zM495 551h2v6h-2zM519 551h2v6h-2zM523 551h1v6h-1zM648 551h2v6h-2zM677 551h2v6h-2zM682 551h9v6h-9zM699 551h4v6h-4zM861 551h1v6h-1zM994 551h1v6h-1zM997 551h4v6h-4zM1006 551h4v6h-4zM1023 551h2v6h-2zM1028 551h6v6h-6zM850 558h2v6h-2zM856 558h2v6h-2zM900 558h1v6h-1zM905 558h2v6h-2zM1169 558h9v6h-9zM1187 558h1v6h-1zM1194 558h5v6h-5zM1327 558h1v6h-1zM1368 558h2v6h-2z"/>
<path fill="#b7ce23" d="M523 523h3v6h-3zM528 523h4v6h-4zM687 523h1v6h-1zM698 523h2v6h-2zM702 523h3v6h-3zM723 523h2v6h-2zM828 523h4v6h-4zM840 523h2v6h-2zM1158 523h2v6h-2zM1333 523h2v6h-2zM474 530h2v6h-2zM597 530h3v6h-3zM601 530h6v6h-6zM803 530h3v6h-3zM933 530h4v6h-4zM941 530h7v6h-7zM965 530h1v6h-1zM1250 530h2v6h-2zM1256 530h2v6h-2zM1363 530h1v6h-1zM1383 530h3v6h-3zM476 537h1v6h-1zM482 537h1v6h-1zM512 537h3v6h-3zM517 537h1v6h-1zM624 537h2v6h-2zM717 537h3v6h-3zM722 537h2v6h-2zM735 537h1v6h-1zM949 537h1v6h-1zM957 537h3v6h-3zM988 537h4v6h-4zM1005 537h4v6h-4zM1065 537h4v6h-4zM1145 537h1v6h-1zM1154 537h1v6h-1zM1165 537h2v6h-2zM1178 537h1v6h-1zM1232 537h1v6h-1zM501 544h3v6h-3zM506 544h9v6h-9zM568 544h2v6h-2zM573 544h2v6h-2zM618 544h6v6h-6zM629 544h3v6h-3zM673 544h2v6h-2zM679 544h4v6h-4zM767 544h1v6h-1zM782 544h3v6h-3zM789 544h1v6h-1zM801 544h1v6h-1zM990 544h1v6h-1zM993 544h2v6h-2zM1130 544h2v6h-2zM1142 544h3v6h-3zM1152 544h2v6h-2zM1168 544h6v6h-6zM1176 544h4v6h-4zM1188 544h2v6h-2zM1323 544h1v6h-1zM1354 544h3v6h-3zM497 551h2v6h-2zM515 551h4v6h-4zM521 551h1v6h-1zM527 551h7v6h-7zM585 551h3v6h-3zM703 551h2v6h-2zM856 551h1v6h-1zM967 551h1v6h-1zM995 551h2v6h-2zM1004 551h2v6h-2zM1010 551h4v6h-4zM1114 551h4v6h-4zM1132 551h4v6h-4zM1152 551h2v6h-2zM1164 551h2v6h-2zM538 558h2v6h-2zM747 558h5v6h-5zM901 558h4v6h-4zM907 558h2v6h-2zM918 558h2v6h-2zM924 558h6v6h-6zM1117 558h2v6h-2zM1133 558h2v6h-2zM1146 558h3v6h-3zM1151 558h1v6h-1zM1154 558h2v6h-2zM1181 558h2v6h-2zM1188 558h1v6h-1zM1191 558h1v6h-1zM1253 558h2v6h-2zM1269 558h1v6h-1zM1342 558h2v6h-2zM1348 558h6v6h-6zM1361 558h3v6h-3zM1366 558h2v6h-2z"/>
<path fill="#a6cd26" d="M527 523h1v6h-1zM686 523h1v6h-1zM692 523h4v6h-4zM705 523h2v6h-2zM725 523h6v6h-6zM481 530h2v6h-2zM595 530h2v6h-2zM607 530h4v6h-4zM664 530h2v6h-2zM794 530h3v6h-3zM806 530h4v6h-4zM813 530h5v6h-5zM860 530h2v6h-2zM938 530h3v6h-3zM966 530h5v6h-5zM972 530h4v6h-4zM1248 530h2v6h-2zM1252 530h4v6h-4zM483 537h3v6h-3zM522 537h4v6h-4zM720 537h1v6h-1zM736 537h6v6h-6zM985 537h3v6h-3zM997 537h4v6h-4zM1009 537h3v6h-3zM1058 537h4v6h-4zM1064 537h1v6h-1zM1132 537h3v6h-3zM1146 537h3v6h-3zM1153 537h1v6h-1zM1159 537h3v6h-3zM1167 537h2v6h-2zM1176 537h2v6h-2zM1203 537h3v6h-3zM1219 537h4v6h-4zM1229 537h2v6h-2zM1311 537h2v6h-2zM1363 537h2v6h-2zM570 544h2v6h-2zM580 544h4v6h-4zM611 544h7v6h-7zM624 544h4v6h-4zM671 544h2v6h-2zM675 544h4v6h-4zM687 544h2v6h-2zM691 544h2v6h-2zM754 544h5v6h-5zM768 544h1v6h-1zM780 544h1v6h-1zM1132 544h3v6h-3zM1138 544h2v6h-2zM1162 544h1v6h-1zM1174 544h2v6h-2zM1180 544h3v6h-3zM1262 544h4v6h-4zM494 551h1v6h-1zM499 551h12v6h-12zM534 551h1v6h-1zM643 551h3v6h-3zM671 551h2v6h-2zM691 551h4v6h-4zM747 551h2v6h-2zM1014 551h3v6h-3zM1020 551h3v6h-3zM1154 551h10v6h-10zM1230 551h4v6h-4zM1236 551h1v6h-1zM855 558h1v6h-1zM909 558h7v6h-7zM1189 558h2v6h-2zM1202 558h3v6h-3zM1260 558h1v6h-1zM1370 558h2v6h-2z"/>
<path fill="#1bc270" d="M534 523h2v6h-2zM539 523h2v6h-2zM552 523h3v6h-3zM563 523h1v6h-1zM1014 523h4v6h-4zM1149 523h2v6h-2zM1251 523h4v6h-4zM488 530h2v6h-2zM495 530h3v6h-3zM849 530h1v6h-1zM1279 530h1v6h-1zM894 537h1v6h-1zM1043 537h1v6h-1zM839 544h3v6h-3zM905 544h5v6h-5zM542 551h2v6h-2zM556 551h2v6h-2zM566 551h4v6h-4zM652 551h2v6h-2zM665 551h2v6h-2zM1039 551h3v6h-3zM485 558h1v6h-1zM551 558h3v6h-3zM557 558h4v6h-4zM642 558h6v6h-6zM866 558h2v6h-2zM979 558h4v6h-4zM1007 558h1v6h-1zM1164 558h4v6h-4z"/>
<path fill="#20c040" d="M536 523h3v6h-3zM541 523h5v6h-5zM584 523h3v6h-3zM595 523h4v6h-4zM602 523h5v6h-5zM872 523h2v6h-2zM877 523h1v6h-1zM885 523h1v6h-1zM899 523h3v6h-3zM1044 523h4v6h-4zM1054 523h1v6h-1zM1067 523h2v6h-2zM1075 523h2v6h-2zM1133 523h2v6h-2zM1153 523h1v6h-1zM1322 523h2v6h-2zM1375 523h4v6h-4zM1382 523h1v6h-1zM500 530h2v6h-2zM675 530h1v6h-1zM836 530h3v6h-3zM847 530h2v6h-2zM884 530h2v6h-2zM997 530h4v6h-4zM1002 530h1v6h-1zM1014 530h2v6h-2zM1116 530h7v6h-7zM1127 530h3v6h-3zM1192 530h4v6h-4zM1201 530h4v6h-4zM1234 530h4v6h-4zM1276 530h3v6h-3zM1284 530h3v6h-3zM490 537h4v6h-4zM502 537h6v6h-6zM778 537h3v6h-3zM895 537h3v6h-3zM913 537h6v6h-6zM938 537h7v6h-7zM1093 537h2v6h-2zM1258 537h4v6h-4zM1386 537h2v6h-2zM515 544h1v6h-1zM531 544h4v6h-4zM558 544h2v6h-2zM562 544h3v6h-3zM842 544h3v6h-3zM856 544h1v6h-1zM925 544h6v6h-6zM937 544h2v6h-2zM943 544h6v6h-6zM956 544h6v6h-6zM966 544h2v6h-2zM1076 544h2v6h-2zM1080 544h2v6h-2zM1199 544h3v6h-3zM1207 544h2v6h-2zM1308 544h3v6h-3zM1386 544h2v6h-2zM474 551h4v6h-4zM479 551h4v6h-4zM490 551h2v6h-2zM535 551h4v6h-4zM544 551h7v6h-7zM558 551h3v6h-3zM565 551h1v6h-1zM598 551h4v6h-4zM609 551h4v6h-4zM617 551h1v6h-1zM657 551h2v6h-2zM716 551h3v6h-3zM776 551h1v6h-1zM779 551h1v6h-1zM896 551h4v6h-4zM904 551h4v6h-4zM923 551h1v6h-1zM976 551h4v6h-4zM984 551h3v6h-3zM1062 551h3v6h-3zM1070 551h2v6h-2zM1076 551h2v6h-2zM1143 551h3v6h-3zM1352 551h4v6h-4zM1361 551h1v6h-1zM549 558h2v6h-2zM561 558h3v6h-3zM573 558h3v6h-3zM754 558h9v6h-9zM766 558h4v6h-4zM868 558h4v6h-4zM976 558h3v6h-3zM990 558h3v6h-3zM1001 558h2v6h-2zM1025 558h2v6h-2zM1159 558h4v6h-4zM1168 558h1v6h-1zM1243 558h3v6h-3z"/>
<path fill="#1ec150" d="M546 523h2v6h-2zM550 523h2v6h-2zM878 523h7v6h-7zM1022 523h2v6h-2zM1063 523h4v6h-4zM1145 523h4v6h-4zM1151 523h2v6h-2zM1383 523h2v6h-2zM491 530h4v6h-4zM498 530h2v6h-2zM541 530h3v6h-3zM547 530h2v6h-2zM682 530h4v6h-4zM688 530h5v6h-5zM696 530h3v6h-3zM701 530h7v6h-7zM818 530h2v6h-2zM826 530h4v6h-4zM844 530h3v6h-3zM886 530h3v6h-3zM948 530h3v6h-3zM957 530h2v6h-2zM1004 530h2v6h-2zM1025 530h2v6h-2zM1059 530h4v6h-4zM1103 530h4v6h-4zM1110 530h2v6h-2zM1196 530h1v6h-1zM486 537h4v6h-4zM494 537h4v6h-4zM566 537h1v6h-1zM602 537h4v6h-4zM898 537h7v6h-7zM1255 537h3v6h-3zM1368 537h3v6h-3zM535 544h2v6h-2zM539 544h2v6h-2zM603 544h1v6h-1zM832 544h1v6h-1zM931 544h4v6h-4zM962 544h4v6h-4zM968 544h2v6h-2zM976 544h5v6h-5zM1075 544h1v6h-1zM1306 544h2v6h-2zM1380 544h2v6h-2zM483 551h2v6h-2zM492 551h1v6h-1zM539 551h3v6h-3zM570 551h1v6h-1zM615 551h2v6h-2zM654 551h3v6h-3zM709 551h4v6h-4zM722 551h5v6h-5zM730 551h1v6h-1zM746 551h1v6h-1zM777 551h2v6h-2zM875 551h6v6h-6zM884 551h1v6h-1zM887 551h5v6h-5zM902 551h1v6h-1zM924 551h4v6h-4zM987 551h4v6h-4zM1138 551h5v6h-5zM1356 551h2v6h-2zM488 558h3v6h-3zM497 558h1v6h-1zM542 558h1v6h-1zM554 558h3v6h-3zM564 558h2v6h-2zM609 558h3v6h-3zM622 558h3v6h-3zM635 558h2v6h-2zM648 558h2v6h-2zM862 558h4v6h-4zM975 558h1v6h-1zM999 558h2v6h-2zM1239 558h4v6h-4z"/>
<path fill="#31c23d" d="M548 523h2v6h-2zM555 523h3v6h-3zM587 523h2v6h-2zM614 523h9v6h-9zM634 523h1v6h-1zM806 523h1v6h-1zM811 523h1v6h-1zM813 523h1v6h-1zM855 523h4v6h-4zM865 523h4v6h-4zM874 523h3v6h-3zM889 523h4v6h-4zM905 523h4v6h-4zM915 523h1v6h-1zM1012 523h2v6h-2zM1018 523h2v6h-2zM1048 523h6v6h-6zM1069 523h2v6h-2zM1073 523h2v6h-2zM1080 523h3v6h-3zM1144 523h1v6h-1zM1160 523h2v6h-2zM1187 523h1v6h-1zM1190 523h4v6h-4zM1319 523h3v6h-3zM1379 523h3v6h-3zM546 530h1v6h-1zM708 530h3v6h-3zM820 530h6v6h-6zM839 530h4v6h-4zM993 530h2v6h-2zM1009 530h2v6h-2zM1016 530h2v6h-2zM1020 530h5v6h-5zM1100 530h3v6h-3zM1114 530h2v6h-2zM1123 530h2v6h-2zM1197 530h4v6h-4zM1238 530h4v6h-4zM508 537h2v6h-2zM560 537h3v6h-3zM606 537h3v6h-3zM643 537h2v6h-2zM648 537h6v6h-6zM775 537h3v6h-3zM781 537h2v6h-2zM798 537h1v6h-1zM934 537h4v6h-4zM947 537h1v6h-1zM1104 537h6v6h-6zM1122 537h7v6h-7zM1323 537h2v6h-2zM1335 537h4v6h-4zM1371 537h13v6h-13zM608 544h3v6h-3zM660 544h1v6h-1zM837 544h2v6h-2zM850 544h6v6h-6zM939 544h2v6h-2zM953 544h3v6h-3zM973 544h2v6h-2zM981 544h1v6h-1zM1072 544h3v6h-3zM1112 544h10v6h-10zM1328 544h3v6h-3zM1375 544h1v6h-1zM485 551h3v6h-3zM553 551h3v6h-3zM561 551h4v6h-4zM604 551h1v6h-1zM608 551h1v6h-1zM613 551h2v6h-2zM659 551h6v6h-6zM708 551h1v6h-1zM731 551h4v6h-4zM740 551h4v6h-4zM764 551h2v6h-2zM815 551h2v6h-2zM829 551h4v6h-4zM839 551h1v6h-1zM885 551h2v6h-2zM900 551h2v6h-2zM903 551h1v6h-1zM910 551h2v6h-2zM915 551h8v6h-8zM980 551h1v6h-1zM993 551h1v6h-1zM1065 551h5v6h-5zM1217 551h1v6h-1zM1222 551h2v6h-2zM1375 551h2v6h-2zM474 558h8v6h-8zM494 558h1v6h-1zM569 558h1v6h-1zM618 558h4v6h-4zM630 558h2v6h-2zM637 558h3v6h-3zM641 558h1v6h-1zM972 558h3v6h-3zM993 558h1v6h-1zM995 558h4v6h-4zM1003 558h4v6h-4zM1008 558h5v6h-5zM1021 558h4v6h-4zM1083 558h2v6h-2zM1095 558h2v6h-2zM1099 558h1v6h-1zM1101 558h3v6h-3zM1235 558h4v6h-4zM1284 558h1v6h-1zM1294 558h4v6h-4z"/>
<path fill="#1dc260" d="M558 523h5v6h-5zM1020 523h2v6h-2zM1071 523h2v6h-2zM1077 523h3v6h-3zM1255 523h2v6h-2zM490 530h1v6h-1zM538 530h3v6h-3zM679 530h3v6h-3zM686 530h2v6h-2zM830 530h6v6h-6zM843 530h1v6h-1zM1013 530h1v6h-1zM1107 530h3v6h-3zM1112 530h2v6h-2zM1125 530h2v6h-2zM1280 530h4v6h-4zM1287 530h1v6h-1zM604 544h4v6h-4zM833 544h4v6h-4zM845 544h1v6h-1zM935 544h2v6h-2zM941 544h2v6h-2zM952 544h1v6h-1zM1382 544h4v6h-4zM602 551h2v6h-2zM651 551h1v6h-1zM707 551h1v6h-1zM713 551h3v6h-3zM719 551h3v6h-3zM727 551h3v6h-3zM735 551h4v6h-4zM769 551h7v6h-7zM881 551h3v6h-3zM894 551h2v6h-2zM908 551h2v6h-2zM1358 551h3v6h-3zM482 558h3v6h-3zM486 558h2v6h-2zM491 558h3v6h-3zM545 558h4v6h-4zM566 558h3v6h-3zM606 558h3v6h-3zM983 558h7v6h-7zM994 558h1v6h-1zM1163 558h1v6h-1zM1288 558h1v6h-1z"/>
<path fill="#d25d1a" d="M564 523h4v6h-4zM570 523h2v6h-2zM642 523h1v6h-1zM1085 523h3v6h-3zM1091 523h3v6h-3zM1240 523h3v6h-3zM1247 523h4v6h-4zM1359 523h1v6h-1zM1386 523h2v6h-2zM555 530h6v6h-6zM721 530h2v6h-2zM1064 530h2v6h-2zM1071 530h2v6h-2zM1095 530h2v6h-2zM1141 530h2v6h-2zM1149 530h3v6h-3zM1153 530h2v6h-2zM1208 530h4v6h-4zM1214 530h2v6h-2zM847 537h3v6h-3zM854 537h4v6h-4zM1012 544h2v6h-2zM1022 544h2v6h-2zM1034 544h2v6h-2zM1044 544h2v6h-2zM1066 544h2v6h-2zM1238 544h3v6h-3zM1246 544h2v6h-2zM1268 544h6v6h-6zM939 551h4v6h-4zM953 551h2v6h-2zM1100 551h1v6h-1zM1108 551h2v6h-2zM1318 551h4v6h-4zM598 558h3v6h-3zM724 558h7v6h-7zM733 558h2v6h-2zM741 558h3v6h-3zM811 558h6v6h-6zM940 558h2v6h-2zM946 558h3v6h-3zM960 558h2v6h-2z"/>
<path fill="#ce4316" d="M568 523h2v6h-2zM1083 523h2v6h-2zM1097 523h3v6h-3zM1104 523h1v6h-1zM714 530h7v6h-7zM759 530h2v6h-2zM768 530h2v6h-2zM866 530h2v6h-2zM1066 530h1v6h-1zM1077 530h7v6h-7zM1088 530h2v6h-2zM1147 530h1v6h-1zM1152 530h1v6h-1zM1155 530h4v6h-4zM1166 530h2v6h-2zM1206 530h1v6h-1zM1212 530h1v6h-1zM1312 530h3v6h-3zM595 537h2v6h-2zM1069 537h1v6h-1zM1078 537h2v6h-2zM1082 537h1v6h-1zM1087 537h5v6h-5zM1190 537h2v6h-2zM1194 537h2v6h-2zM1296 537h3v6h-3zM1319 537h1v6h-1zM894 544h2v6h-2zM898 544h4v6h-4zM1006 544h4v6h-4zM1024 544h4v6h-4zM1041 544h3v6h-3zM1048 544h4v6h-4zM1061 544h3v6h-3zM1068 544h2v6h-2zM1232 544h2v6h-2zM1241 544h2v6h-2zM632 551h4v6h-4zM855 551h1v6h-1zM1080 551h4v6h-4zM1265 551h4v6h-4zM780 558h2v6h-2zM808 558h1v6h-1zM942 558h2v6h-2zM949 558h1v6h-1zM962 558h4v6h-4zM968 558h1v6h-1z"/>
<path fill="#cb2a13" d="M572 523h6v6h-6zM654 523h10v6h-10zM1094 523h2v6h-2zM1102 523h2v6h-2zM1105 523h9v6h-9zM1119 523h2v6h-2zM1243 523h4v6h-4zM767 530h1v6h-1zM862 530h4v6h-4zM871 530h5v6h-5zM1084 530h4v6h-4zM1097 530h3v6h-3zM1161 530h5v6h-5zM1168 530h1v6h-1zM581 537h1v6h-1zM593 537h2v6h-2zM597 537h3v6h-3zM1073 537h5v6h-5zM1086 537h1v6h-1zM1092 537h1v6h-1zM1295 537h1v6h-1zM1299 537h2v6h-2zM1303 537h4v6h-4zM1318 537h1v6h-1zM896 544h2v6h-2zM904 544h1v6h-1zM1014 544h4v6h-4zM1053 544h4v6h-4zM638 551h1v6h-1zM1052 551h2v6h-2zM1059 551h3v6h-3zM1084 551h3v6h-3zM1094 551h3v6h-3zM1099 551h1v6h-1zM1110 551h4v6h-4zM1269 551h2v6h-2zM1323 551h4v6h-4zM798 558h3v6h-3zM806 558h2v6h-2zM969 558h3v6h-3z"/>
<path fill="#52c536" d="M589 523h6v6h-6zM599 523h3v6h-3zM632 523h2v6h-2zM807 523h4v6h-4zM860 523h5v6h-5zM871 523h1v6h-1zM886 523h2v6h-2zM893 523h6v6h-6zM911 523h4v6h-4zM1062 523h1v6h-1zM1127 523h4v6h-4zM1170 523h4v6h-4zM1177 523h4v6h-4zM1194 523h6v6h-6zM1204 523h6v6h-6zM1216 523h1v6h-1zM1259 523h3v6h-3zM1264 523h3v6h-3zM1324 523h5v6h-5zM1369 523h4v6h-4zM571 530h1v6h-1zM621 530h2v6h-2zM630 530h3v6h-3zM640 530h4v6h-4zM876 530h5v6h-5zM951 530h2v6h-2zM1001 530h1v6h-1zM1003 530h1v6h-1zM1011 530h2v6h-2zM1063 530h1v6h-1zM1205 530h1v6h-1zM498 537h3v6h-3zM565 537h1v6h-1zM567 537h3v6h-3zM645 537h3v6h-3zM772 537h3v6h-3zM791 537h1v6h-1zM923 537h2v6h-2zM945 537h2v6h-2zM948 537h1v6h-1zM1120 537h2v6h-2zM1341 537h1v6h-1zM1345 537h4v6h-4zM1384 537h2v6h-2zM529 544h2v6h-2zM538 544h1v6h-1zM543 544h2v6h-2zM560 544h2v6h-2zM635 544h1v6h-1zM655 544h4v6h-4zM663 544h1v6h-1zM695 544h2v6h-2zM699 544h1v6h-1zM708 544h2v6h-2zM712 544h3v6h-3zM846 544h4v6h-4zM866 544h7v6h-7zM1191 544h2v6h-2zM1196 544h3v6h-3zM1212 544h2v6h-2zM478 551h1v6h-1zM493 551h1v6h-1zM739 551h1v6h-1zM744 551h2v6h-2zM758 551h2v6h-2zM813 551h2v6h-2zM817 551h3v6h-3zM827 551h2v6h-2zM991 551h2v6h-2zM1179 551h1v6h-1zM1214 551h1v6h-1zM1218 551h2v6h-2zM1224 551h1v6h-1zM1362 551h4v6h-4zM1378 551h5v6h-5zM1385 551h2v6h-2zM495 558h2v6h-2zM625 558h1v6h-1zM632 558h3v6h-3zM679 558h1v6h-1zM681 558h2v6h-2zM686 558h2v6h-2zM704 558h3v6h-3zM711 558h2v6h-2zM1027 558h2v6h-2zM1097 558h2v6h-2zM1104 558h4v6h-4zM1109 558h2v6h-2zM1289 558h2v6h-2zM1298 558h2v6h-2zM1302 558h3v6h-3zM1311 558h4v6h-4zM1324 558h1v6h-1z"/>
<path fill="#42c33a" d="M607 523h7v6h-7zM627 523h5v6h-5zM803 523h3v6h-3zM812 523h1v6h-1zM842 523h4v6h-4zM848 523h7v6h-7zM888 523h1v6h-1zM1058 523h4v6h-4zM1131 523h2v6h-2zM1135 523h2v6h-2zM1162 523h4v6h-4zM1184 523h3v6h-3zM1200 523h1v6h-1zM1210 523h4v6h-4zM1224 523h4v6h-4zM1329 523h1v6h-1zM1366 523h3v6h-3zM1373 523h2v6h-2zM1385 523h1v6h-1zM544 530h2v6h-2zM569 530h2v6h-2zM572 530h2v6h-2zM578 530h3v6h-3zM646 530h4v6h-4zM676 530h3v6h-3zM693 530h3v6h-3zM699 530h2v6h-2zM850 530h4v6h-4zM889 530h3v6h-3zM953 530h4v6h-4zM995 530h2v6h-2zM1006 530h3v6h-3zM1018 530h2v6h-2zM1027 530h2v6h-2zM1242 530h4v6h-4zM1329 530h1v6h-1zM501 537h1v6h-1zM563 537h2v6h-2zM601 537h1v6h-1zM783 537h3v6h-3zM795 537h3v6h-3zM919 537h2v6h-2zM925 537h1v6h-1zM930 537h4v6h-4zM1097 537h7v6h-7zM1114 537h2v6h-2zM1262 537h5v6h-5zM1326 537h9v6h-9zM1365 537h3v6h-3zM525 544h4v6h-4zM537 544h1v6h-1zM541 544h2v6h-2zM545 544h1v6h-1zM567 544h1v6h-1zM636 544h4v6h-4zM644 544h2v6h-2zM857 544h2v6h-2zM878 544h10v6h-10zM922 544h3v6h-3zM949 544h3v6h-3zM970 544h3v6h-3zM975 544h1v6h-1zM1070 544h2v6h-2zM1078 544h2v6h-2zM1193 544h3v6h-3zM1205 544h2v6h-2zM1376 544h4v6h-4zM488 551h2v6h-2zM605 551h3v6h-3zM760 551h1v6h-1zM766 551h3v6h-3zM780 551h6v6h-6zM820 551h2v6h-2zM892 551h2v6h-2zM912 551h3v6h-3zM928 551h2v6h-2zM981 551h3v6h-3zM1072 551h4v6h-4zM1176 551h3v6h-3zM1180 551h3v6h-3zM1215 551h2v6h-2zM1366 551h2v6h-2zM1370 551h2v6h-2zM1377 551h1v6h-1zM1383 551h2v6h-2zM1387 551h1v6h-1zM543 558h2v6h-2zM570 558h3v6h-3zM612 558h6v6h-6zM626 558h4v6h-4zM640 558h1v6h-1zM662 558h4v6h-4zM668 558h6v6h-6zM675 558h4v6h-4zM763 558h3v6h-3zM1081 558h2v6h-2zM1108 558h1v6h-1zM1285 558h3v6h-3zM1291 558h3v6h-3zM1305 558h1v6h-1zM1309 558h2v6h-2zM1315 558h6v6h-6z"/>
<path fill="#74c830" d="M623 523h2v6h-2zM846 523h2v6h-2zM870 523h1v6h-1zM1174 523h3v6h-3zM1188 523h2v6h-2zM1214 523h2v6h-2zM1222 523h2v6h-2zM1257 523h2v6h-2zM1365 523h1v6h-1zM617 530h4v6h-4zM623 530h6v6h-6zM633 530h7v6h-7zM644 530h2v6h-2zM1330 530h1v6h-1zM1210 537h5v6h-5zM1217 537h2v6h-2zM1308 537h3v6h-3zM1356 537h3v6h-3zM654 544h1v6h-1zM661 544h2v6h-2zM693 544h2v6h-2zM697 544h2v6h-2zM700 544h8v6h-8zM859 544h4v6h-4zM873 544h2v6h-2zM995 544h4v6h-4zM1135 544h3v6h-3zM1149 544h3v6h-3zM1334 544h2v6h-2zM1339 544h9v6h-9zM1357 544h2v6h-2zM511 551h2v6h-2zM522 551h1v6h-1zM524 551h3v6h-3zM650 551h1v6h-1zM695 551h4v6h-4zM751 551h3v6h-3zM756 551h2v6h-2zM810 551h3v6h-3zM822 551h5v6h-5zM857 551h4v6h-4zM1225 551h3v6h-3zM1237 551h4v6h-4zM1368 551h2v6h-2zM651 558h2v6h-2zM660 558h2v6h-2zM666 558h2v6h-2zM680 558h1v6h-1zM683 558h3v6h-3zM707 558h2v6h-2zM716 558h2v6h-2zM896 558h2v6h-2zM1075 558h6v6h-6zM1085 558h4v6h-4zM1092 558h3v6h-3zM1200 558h2v6h-2z"/>
<path fill="#63c633" d="M625 523h2v6h-2zM859 523h1v6h-1zM869 523h1v6h-1zM902 523h3v6h-3zM909 523h2v6h-2zM1055 523h3v6h-3zM1137 523h2v6h-2zM1141 523h3v6h-3zM1166 523h4v6h-4zM1181 523h3v6h-3zM1201 523h3v6h-3zM1217 523h5v6h-5zM1228 523h4v6h-4zM1262 523h2v6h-2zM574 530h4v6h-4zM629 530h1v6h-1zM881 530h3v6h-3zM1232 530h2v6h-2zM1246 530h2v6h-2zM1331 530h4v6h-4zM786 537h5v6h-5zM792 537h3v6h-3zM921 537h2v6h-2zM926 537h4v6h-4zM1095 537h2v6h-2zM1110 537h4v6h-4zM1116 537h4v6h-4zM1227 537h2v6h-2zM1325 537h1v6h-1zM1339 537h2v6h-2zM1342 537h3v6h-3zM1349 537h3v6h-3zM516 544h9v6h-9zM565 544h2v6h-2zM646 544h8v6h-8zM659 544h1v6h-1zM664 544h7v6h-7zM683 544h4v6h-4zM710 544h1v6h-1zM875 544h3v6h-3zM888 544h5v6h-5zM1190 544h1v6h-1zM1202 544h3v6h-3zM1209 544h3v6h-3zM1331 544h3v6h-3zM1348 544h4v6h-4zM749 551h2v6h-2zM754 551h2v6h-2zM761 551h3v6h-3zM833 551h6v6h-6zM1183 551h5v6h-5zM1220 551h2v6h-2zM1228 551h2v6h-2zM1372 551h3v6h-3zM650 558h1v6h-1zM709 558h2v6h-2zM718 558h2v6h-2zM1089 558h3v6h-3zM1300 558h2v6h-2zM1306 558h3v6h-3zM1321 558h3v6h-3z"/>
<path fill="#d5761d" d="M635 523h7v6h-7zM664 523h4v6h-4zM710 523h4v6h-4zM1088 523h2v6h-2zM1096 523h1v6h-1zM1349 523h4v6h-4zM1354 523h2v6h-2zM564 530h2v6h-2zM761 530h4v6h-4zM1248 544h1v6h-1zM618 551h3v6h-3zM943 551h5v6h-5zM580 558h1v6h-1zM583 558h2v6h-2zM588 558h6v6h-6zM605 558h1v6h-1zM720 558h4v6h-4zM735 558h3v6h-3zM824 558h4v6h-4zM1061 558h3v6h-3zM1069 558h5v6h-5z"/>
<path fill="#d59d20" d="M671 523h3v6h-3zM716 523h3v6h-3zM760 523h2v6h-2zM825 523h1v6h-1zM1306 523h5v6h-5zM1315 523h2v6h-2zM1356 523h1v6h-1zM1364 523h1v6h-1zM566 530h3v6h-3zM1294 530h6v6h-6zM1304 530h1v6h-1zM576 537h2v6h-2zM622 537h1v6h-1zM1273 537h5v6h-5zM1280 537h3v6h-3zM1226 544h2v6h-2zM1234 544h4v6h-4zM1243 544h1v6h-1zM1253 544h7v6h-7zM593 551h3v6h-3zM930 551h2v6h-2zM935 551h4v6h-4zM948 551h4v6h-4zM1315 551h3v6h-3zM1338 551h1v6h-1zM522 558h1v6h-1zM585 558h3v6h-3zM601 558h4v6h-4zM820 558h1v6h-1zM832 558h4v6h-4zM849 558h1v6h-1zM1013 558h1v6h-1zM1044 558h2v6h-2zM1049 558h2v6h-2zM1074 558h1v6h-1z"/>
<path fill="#d89020" d="M719 523h1v6h-1zM1357 523h2v6h-2zM1360 523h4v6h-4zM549 530h2v6h-2zM561 530h3v6h-3zM1283 537h6v6h-6zM1291 537h1v6h-1zM1228 544h4v6h-4zM1244 544h2v6h-2zM1249 544h4v6h-4zM1260 544h2v6h-2zM952 551h1v6h-1zM957 551h6v6h-6zM1322 551h1v6h-1zM576 558h4v6h-4zM581 558h2v6h-2zM731 558h2v6h-2zM821 558h3v6h-3zM841 558h1v6h-1zM845 558h4v6h-4zM1043 558h1v6h-1zM1057 558h3v6h-3z"/>
<path fill="#85ca2d" d="M720 523h3v6h-3zM1139 523h2v6h-2zM612 530h2v6h-2zM650 530h3v6h-3zM799 530h4v6h-4zM812 530h1v6h-1zM961 530h4v6h-4zM976 530h3v6h-3zM474 537h2v6h-2zM518 537h2v6h-2zM1012 537h4v6h-4zM1155 537h4v6h-4zM1162 537h3v6h-3zM1231 537h1v6h-1zM1241 537h3v6h-3zM1245 537h4v6h-4zM1352 537h4v6h-4zM548 544h2v6h-2zM572 544h1v6h-1zM579 544h1v6h-1zM584 544h3v6h-3zM588 544h4v6h-4zM640 544h4v6h-4zM711 544h1v6h-1zM777 544h2v6h-2zM781 544h1v6h-1zM863 544h3v6h-3zM999 544h5v6h-5zM1122 544h1v6h-1zM1126 544h2v6h-2zM1163 544h5v6h-5zM1183 544h5v6h-5zM1336 544h3v6h-3zM1352 544h2v6h-2zM513 551h2v6h-2zM646 551h2v6h-2zM705 551h2v6h-2zM1034 551h2v6h-2zM1147 551h5v6h-5zM1234 551h2v6h-2zM653 558h7v6h-7zM674 558h1v6h-1zM713 558h3v6h-3zM744 558h3v6h-3zM898 558h2v6h-2zM1100 558h1v6h-1zM1178 558h3v6h-3zM1183 558h4v6h-4zM1192 558h2v6h-2zM1199 558h1v6h-1zM1336 558h3v6h-3zM1346 558h2v6h-2zM1354 558h7v6h-7z"/>
<path fill="#ceb620" d="M739 523h2v6h-2zM755 523h1v6h-1zM920 523h2v6h-2zM928 523h2v6h-2zM1303 523h3v6h-3zM1345 523h4v6h-4zM658 530h1v6h-1zM1130 530h3v6h-3zM1364 530h2v6h-2zM1368 530h2v6h-2zM1373 530h6v6h-6zM1381 530h2v6h-2zM573 537h1v6h-1zM579 537h2v6h-2zM615 537h4v6h-4zM753 537h3v6h-3zM1003 537h2v6h-2zM1056 537h2v6h-2zM1149 537h2v6h-2zM1169 537h3v6h-3zM1174 537h2v6h-2zM1278 537h2v6h-2zM1292 537h1v6h-1zM775 544h2v6h-2zM1156 544h4v6h-4zM583 551h2v6h-2zM862 551h8v6h-8zM970 551h4v6h-4zM1118 551h1v6h-1zM1172 551h2v6h-2zM1339 551h2v6h-2zM1343 551h9v6h-9zM526 558h2v6h-2zM530 558h4v6h-4zM541 558h1v6h-1zM916 558h2v6h-2zM930 558h3v6h-3zM955 558h4v6h-4zM1039 558h4v6h-4zM1055 558h2v6h-2zM1064 558h4v6h-4zM1120 558h6v6h-6zM1127 558h4v6h-4zM1142 558h4v6h-4zM1156 558h2v6h-2zM1246 558h4v6h-4zM1255 558h1v6h-1zM1325 558h2v6h-2z"/>
<path fill="#c81010" d="M1090 523h1v6h-1zM1100 523h2v6h-2zM1114 523h5v6h-5zM1121 523h6v6h-6zM711 530h3v6h-3zM765 530h2v6h-2zM868 530h3v6h-3zM1067 530h4v6h-4zM1073 530h4v6h-4zM1090 530h5v6h-5zM1140 530h1v6h-1zM1143 530h4v6h-4zM1148 530h1v6h-1zM1159 530h2v6h-2zM1169 530h1v6h-1zM1207 530h1v6h-1zM1213 530h1v6h-1zM1315 530h2v6h-2zM550 537h10v6h-10zM582 537h11v6h-11zM600 537h1v6h-1zM850 537h4v6h-4zM1070 537h3v6h-3zM1080 537h2v6h-2zM1083 537h3v6h-3zM1189 537h1v6h-1zM1192 537h2v6h-2zM1196 537h7v6h-7zM1293 537h2v6h-2zM1301 537h2v6h-2zM1313 537h5v6h-5zM1320 537h3v6h-3zM893 544h1v6h-1zM902 544h2v6h-2zM1004 544h2v6h-2zM1010 544h2v6h-2zM1018 544h4v6h-4zM1028 544h6v6h-6zM1036 544h5v6h-5zM1046 544h2v6h-2zM1052 544h1v6h-1zM1057 544h4v6h-4zM1064 544h2v6h-2zM636 551h2v6h-2zM639 551h4v6h-4zM840 551h15v6h-15zM1054 551h5v6h-5zM1078 551h2v6h-2zM1087 551h7v6h-7zM1097 551h2v6h-2zM1101 551h7v6h-7zM1261 551h4v6h-4zM1327 551h1v6h-1zM770 558h10v6h-10zM782 558h16v6h-16zM801 558h5v6h-5zM809 558h2v6h-2zM817 558h3v6h-3zM938 558h2v6h-2zM944 558h2v6h-2zM950 558h4v6h-4zM966 558h2v6h-2z"/>
<path fill="#10c1e2" d="M741 530h2v6h-2zM745 530h4v6h-4zM756 530h3v6h-3zM770 530h2v6h-2zM775 530h4v6h-4zM783 530h3v6h-3zM902 530h3v6h-3zM913 530h4v6h-4zM919 530h1v6h-1zM922 530h3v6h-3zM1178 530h2v6h-2zM1216 530h2v6h-2zM704 537h2v6h-2zM709 537h4v6h-4zM744 537h3v6h-3zM799 537h2v6h-2zM474 544h3v6h-3zM592 544h4v6h-4zM1087 544h3v6h-3zM1107 544h2v6h-2zM1295 544h3v6h-3zM1241 551h2v6h-2zM1301 551h2v6h-2z"/>
<path fill="#10bae3" d="M749 530h1v6h-1zM699 537h1v6h-1zM706 537h3v6h-3zM597 544h2v6h-2zM601 544h1v6h-1zM1098 544h3v6h-3z"/>
</g>
<line x1="474" y1="564.5" x2="1388" y2="564.5" stroke="#000" stroke-width="1"/>
<rect x="474" y="635" width="914" height="167" fill="#000"/>
<g shape-rendering="crispEdges">
<path fill="#d04e1a" d="M474 635h5.66v6h-5.66zM592.86 635h11.32v6h-11.32zM694.74 635h16.98v6h-16.98zM734.36 635h5.66v6h-5.66zM802.28 635h5.66v6h-5.66zM819.26 635h5.66v6h-5.66zM915.48 635h5.66v6h-5.66zM977.74 635h5.66v6h-5.66zM1079.62 635h5.66v6h-5.66zM1198.48 635h5.66v6h-5.66zM1283.38 635h5.66v6h-5.66zM1300.36 635h5.66v6h-5.66zM1328.66 635h11.32v6h-11.32zM1362.62 635h5.66v6h-5.66zM474 642h5.66v6h-5.66zM592.86 642h5.66v6h-5.66zM734.36 642h5.66v6h-5.66zM796.62 642h5.66v6h-5.66zM819.26 642h5.66v6h-5.66zM915.48 642h5.66v6h-5.66zM972.08 642h5.66v6h-5.66zM1079.62 642h5.66v6h-5.66zM1107.92 642h5.66v6h-5.66zM1119.24 642h5.66v6h-5.66zM1192.82 642h11.32v6h-11.32zM1294.7 642h5.66v6h-5.66zM1317.34 642h5.66v6h-5.66zM474 649h16.98v6h-16.98zM723.04 649h5.66v6h-5.66zM734.36 649h11.32v6h-11.32zM796.62 649h5.66v6h-5.66zM813.6 649h5.66v6h-5.66zM915.48 649h5.66v6h-5.66zM1096.6 649h5.66v6h-5.66zM1124.9 649h5.66v6h-5.66zM1187.16 649h5.66v6h-5.66zM474 656h5.66v6h-5.66zM524.94 656h11.32v6h-11.32zM598.52 656h5.66v6h-5.66zM689.08 656h11.32v6h-11.32zM706.06 656h11.32v6h-11.32zM807.94 656h5.66v6h-5.66zM926.8 656h5.66v6h-5.66zM977.74 656h5.66v6h-5.66zM1085.28 656h11.32v6h-11.32zM1102.26 656h5.66v6h-5.66zM1181.5 656h5.66v6h-5.66zM1204.14 656h5.66v6h-5.66zM1277.72 656h11.32v6h-11.32zM1300.36 656h11.32v6h-11.32zM1362.62 656h5.66v6h-5.66zM479.66 663h5.66v6h-5.66zM519.28 663h5.66v6h-5.66zM592.86 663h5.66v6h-5.66zM706.06 663h5.66v6h-5.66zM819.26 663h5.66v6h-5.66zM921.14 663h11.32v6h-11.32zM966.42 663h5.66v6h-5.66zM1175.84 663h5.66v6h-5.66zM1187.16 663h5.66v6h-5.66zM1204.14 663h5.66v6h-5.66zM1272.06 663h5.66v6h-5.66zM1323 663h5.66v6h-5.66zM1339.98 663h5.66v6h-5.66zM1362.62 663h5.66v6h-5.66zM474 670h5.66v6h-5.66zM507.96 670h5.66v6h-5.66zM524.94 670h5.66v6h-5.66zM536.26 670h5.66v6h-5.66zM598.52 670h11.32v6h-11.32zM683.42 670h11.32v6h-11.32zM700.4 670h5.66v6h-5.66zM717.38 670h11.32v6h-11.32zM740.02 670h5.66v6h-5.66zM915.48 670h5.66v6h-5.66zM972.08 670h5.66v6h-5.66zM989.06 670h5.66v6h-5.66zM1079.62 670h16.98v6h-16.98zM1124.9 670h5.66v6h-5.66zM1181.5 670h5.66v6h-5.66zM1198.48 670h5.66v6h-5.66zM1277.72 670h5.66v6h-5.66zM1294.7 670h5.66v6h-5.66zM1306.02 670h11.32v6h-11.32zM689.08 677h5.66v6h-5.66zM728.7 677h11.32v6h-11.32zM796.62 677h5.66v6h-5.66zM960.76 677h5.66v6h-5.66zM983.4 677h5.66v6h-5.66zM1079.62 677h5.66v6h-5.66zM1090.94 677h5.66v6h-5.66zM1102.26 677h5.66v6h-5.66zM1113.58 677h11.32v6h-11.32zM1272.06 677h11.32v6h-11.32zM485.32 684h5.66v6h-5.66zM689.08 684h5.66v6h-5.66zM740.02 684h5.66v6h-5.66zM796.62 684h5.66v6h-5.66zM807.94 684h5.66v6h-5.66zM921.14 684h5.66v6h-5.66zM977.74 684h5.66v6h-5.66zM1090.94 684h5.66v6h-5.66zM1102.26 684h5.66v6h-5.66zM1113.58 684h5.66v6h-5.66zM1289.04 684h5.66v6h-5.66zM1311.68 684h11.32v6h-11.32zM485.32 691h5.66v5h-5.66zM598.52 691h5.66v5h-5.66zM689.08 691h5.66v5h-5.66zM711.72 691h5.66v5h-5.66zM802.28 691h11.32v5h-11.32zM819.26 691h5.66v5h-5.66zM921.14 691h5.66v5h-5.66zM966.42 691h5.66v5h-5.66zM1107.92 691h5.66v5h-5.66zM1175.84 691h5.66v5h-5.66zM1198.48 691h5.66v5h-5.66zM1294.7 691h5.66v5h-5.66zM474 697h5.66v6h-5.66zM519.28 697h5.66v6h-5.66zM689.08 697h11.32v6h-11.32zM728.7 697h11.32v6h-11.32zM819.26 697h5.66v6h-5.66zM909.82 697h5.66v6h-5.66zM972.08 697h5.66v6h-5.66zM1085.28 697h5.66v6h-5.66zM1187.16 697h5.66v6h-5.66zM1204.14 697h5.66v6h-5.66zM1289.04 697h5.66v6h-5.66zM1311.68 697h11.32v6h-11.32zM1328.66 697h5.66v6h-5.66zM485.32 704h5.66v6h-5.66zM519.28 704h5.66v6h-5.66zM592.86 704h5.66v6h-5.66zM615.5 704h5.66v6h-5.66zM689.08 704h5.66v6h-5.66zM802.28 704h5.66v6h-5.66zM966.42 704h5.66v6h-5.66zM977.74 704h5.66v6h-5.66zM989.06 704h5.66v6h-5.66zM1102.26 704h11.32v6h-11.32zM1187.16 704h11.32v6h-11.32zM1317.34 704h5.66v6h-5.66zM604.18 711h5.66v6h-5.66zM615.5 711h5.66v6h-5.66zM683.42 711h5.66v6h-5.66zM717.38 711h11.32v6h-11.32zM796.62 711h5.66v6h-5.66zM921.14 711h5.66v6h-5.66zM966.42 711h5.66v6h-5.66zM989.06 711h5.66v6h-5.66zM1079.62 711h11.32v6h-11.32zM1113.58 711h16.98v6h-16.98zM1181.5 711h5.66v6h-5.66zM1204.14 711h5.66v6h-5.66zM1272.06 711h5.66v6h-5.66zM474 718h5.66v6h-5.66zM711.72 718h5.66v6h-5.66zM728.7 718h5.66v6h-5.66zM802.28 718h5.66v6h-5.66zM813.6 718h5.66v6h-5.66zM926.8 718h5.66v6h-5.66zM960.76 718h5.66v6h-5.66zM1102.26 718h5.66v6h-5.66zM1300.36 718h16.98v6h-16.98zM1351.3 718h5.66v6h-5.66zM513.62 725h5.66v6h-5.66zM598.52 725h5.66v6h-5.66zM694.74 725h5.66v6h-5.66zM723.04 725h5.66v6h-5.66zM740.02 725h5.66v6h-5.66zM807.94 725h5.66v6h-5.66zM909.82 725h5.66v6h-5.66zM977.74 725h5.66v6h-5.66zM1113.58 725h5.66v6h-5.66zM1187.16 725h5.66v6h-5.66zM1198.48 725h5.66v6h-5.66zM1277.72 725h5.66v6h-5.66zM1328.66 725h5.66v6h-5.66zM485.32 732h5.66v6h-5.66zM513.62 732h5.66v6h-5.66zM536.26 732h5.66v6h-5.66zM689.08 732h5.66v6h-5.66zM723.04 732h11.32v6h-11.32zM802.28 732h5.66v6h-5.66zM813.6 732h5.66v6h-5.66zM960.76 732h5.66v6h-5.66zM1102.26 732h5.66v6h-5.66zM1277.72 732h5.66v6h-5.66zM1289.04 732h5.66v6h-5.66zM1328.66 732h5.66v6h-5.66zM592.86 739h5.66v6h-5.66zM660.78 739h11.32v6h-11.32zM813.6 739h5.66v6h-5.66zM960.76 739h5.66v6h-5.66zM977.74 739h11.32v6h-11.32zM1090.94 739h5.66v6h-5.66zM1107.92 739h5.66v6h-5.66zM1277.72 739h5.66v6h-5.66zM1300.36 739h11.32v6h-11.32zM1317.34 739h11.32v6h-11.32zM1339.98 739h5.66v6h-5.66zM485.32 746h5.66v6h-5.66zM507.96 746h11.32v6h-11.32zM626.82 746h5.66v6h-5.66zM638.14 746h5.66v6h-5.66zM649.46 746h5.66v6h-5.66zM672.1 746h5.66v6h-5.66zM819.26 746h5.66v6h-5.66zM909.82 746h5.66v6h-5.66zM966.42 746h5.66v6h-5.66zM983.4 746h11.32v6h-11.32zM1102.26 746h11.32v6h-11.32zM1175.84 746h5.66v6h-5.66zM1187.16 746h5.66v6h-5.66zM1272.06 746h5.66v6h-5.66zM1289.04 746h5.66v6h-5.66zM1300.36 746h5.66v6h-5.66zM1317.34 746h5.66v6h-5.66zM1328.66 746h5.66v6h-5.66zM519.28 753h5.66v6h-5.66zM536.26 753h5.66v6h-5.66zM592.86 753h5.66v6h-5.66zM677.76 753h5.66v6h-5.66zM819.26 753h5.66v6h-5.66zM1119.24 753h11.32v6h-11.32zM1192.82 753h5.66v6h-5.66zM1317.34 753h5.66v6h-5.66zM632.48 760h5.66v6h-5.66zM677.76 760h5.66v6h-5.66zM1272.06 760h5.66v6h-5.66zM1328.66 760h11.32v6h-11.32zM1351.3 760h5.66v6h-5.66zM485.32 767h5.66v6h-5.66zM609.84 767h5.66v6h-5.66zM711.72 767h5.66v6h-5.66zM909.82 767h11.32v6h-11.32zM966.42 767h5.66v6h-5.66zM977.74 767h5.66v6h-5.66zM989.06 767h5.66v6h-5.66zM1085.28 767h5.66v6h-5.66zM1102.26 767h5.66v6h-5.66zM1119.24 767h5.66v6h-5.66zM1187.16 767h5.66v6h-5.66zM1272.06 767h5.66v6h-5.66zM1317.34 767h5.66v6h-5.66zM524.94 774h5.66v6h-5.66zM598.52 774h5.66v6h-5.66zM655.12 774h5.66v6h-5.66zM926.8 774h5.66v6h-5.66zM983.4 774h5.66v6h-5.66zM1107.92 774h5.66v6h-5.66zM1181.5 774h11.32v6h-11.32zM1283.38 774h5.66v6h-5.66zM1294.7 774h5.66v6h-5.66zM1317.34 774h5.66v6h-5.66zM626.82 781h5.66v6h-5.66zM683.42 781h5.66v6h-5.66zM807.94 781h5.66v6h-5.66zM977.74 781h11.32v6h-11.32zM1119.24 781h11.32v6h-11.32zM1192.82 781h11.32v6h-11.32zM1283.38 781h5.66v6h-5.66zM1306.02 781h5.66v6h-5.66zM1334.32 781h5.66v6h-5.66zM479.66 788h5.66v6h-5.66zM598.52 788h11.32v6h-11.32zM660.78 788h5.66v6h-5.66zM689.08 788h5.66v6h-5.66zM796.62 788h5.66v6h-5.66zM819.26 788h5.66v6h-5.66zM909.82 788h11.32v6h-11.32zM960.76 788h5.66v6h-5.66zM1096.6 788h5.66v6h-5.66zM1113.58 788h5.66v6h-5.66zM1181.5 788h11.32v6h-11.32zM1272.06 788h5.66v6h-5.66zM1334.32 788h5.66v6h-5.66zM474 795h5.66v6h-5.66zM485.32 795h5.66v6h-5.66zM609.84 795h5.66v6h-5.66zM638.14 795h5.66v6h-5.66zM728.7 795h5.66v6h-5.66zM740.02 795h5.66v6h-5.66zM909.82 795h11.32v6h-11.32zM926.8 795h5.66v6h-5.66zM1085.28 795h5.66v6h-5.66zM1175.84 795h5.66v6h-5.66zM1283.38 795h5.66v6h-5.66zM1311.68 795h5.66v6h-5.66z"/>
<path fill="#d25a1c" d="M479.66 635h5.66v6h-5.66zM524.94 635h11.32v6h-11.32zM909.82 635h5.66v6h-5.66zM983.4 635h5.66v6h-5.66zM1096.6 635h5.66v6h-5.66zM1272.06 635h5.66v6h-5.66zM1323 635h5.66v6h-5.66zM479.66 642h5.66v6h-5.66zM513.62 642h5.66v6h-5.66zM689.08 642h5.66v6h-5.66zM700.4 642h5.66v6h-5.66zM723.04 642h5.66v6h-5.66zM921.14 642h5.66v6h-5.66zM966.42 642h5.66v6h-5.66zM989.06 642h5.66v6h-5.66zM1090.94 642h16.98v6h-16.98zM1289.04 642h5.66v6h-5.66zM1323 642h5.66v6h-5.66zM502.3 649h11.32v6h-11.32zM519.28 649h5.66v6h-5.66zM536.26 649h5.66v6h-5.66zM909.82 649h5.66v6h-5.66zM921.14 649h5.66v6h-5.66zM977.74 649h5.66v6h-5.66zM989.06 649h5.66v6h-5.66zM1017.36 649h5.66v6h-5.66zM1323 649h5.66v6h-5.66zM507.96 656h11.32v6h-11.32zM723.04 656h11.32v6h-11.32zM1011.7 656h5.66v6h-5.66zM1113.58 656h5.66v6h-5.66zM1311.68 656h5.66v6h-5.66zM1323 656h5.66v6h-5.66zM524.94 663h5.66v6h-5.66zM977.74 663h5.66v6h-5.66zM1079.62 663h5.66v6h-5.66zM1090.94 663h11.32v6h-11.32zM1107.92 663h5.66v6h-5.66zM1300.36 663h11.32v6h-11.32zM513.62 670h5.66v6h-5.66zM592.86 670h5.66v6h-5.66zM728.7 670h11.32v6h-11.32zM966.42 670h5.66v6h-5.66zM977.74 670h5.66v6h-5.66zM1102.26 670h5.66v6h-5.66zM1119.24 670h5.66v6h-5.66zM1289.04 670h5.66v6h-5.66zM1323 670h11.32v6h-11.32zM1362.62 670h5.66v6h-5.66zM485.32 677h5.66v6h-5.66zM615.5 677h5.66v6h-5.66zM694.74 677h11.32v6h-11.32zM717.38 677h11.32v6h-11.32zM740.02 677h5.66v6h-5.66zM915.48 677h11.32v6h-11.32zM972.08 677h11.32v6h-11.32zM989.06 677h5.66v6h-5.66zM1124.9 677h5.66v6h-5.66zM1294.7 677h5.66v6h-5.66zM490.98 684h5.66v6h-5.66zM694.74 684h11.32v6h-11.32zM723.04 684h16.98v6h-16.98zM915.48 684h5.66v6h-5.66zM926.8 684h5.66v6h-5.66zM960.76 684h5.66v6h-5.66zM1323 684h11.32v6h-11.32zM519.28 691h5.66v5h-5.66zM700.4 691h5.66v5h-5.66zM734.36 691h5.66v5h-5.66zM926.8 691h5.66v5h-5.66zM983.4 691h5.66v5h-5.66zM1017.36 691h11.32v5h-11.32zM1090.94 691h11.32v5h-11.32zM1300.36 691h5.66v5h-5.66zM1317.34 691h5.66v5h-5.66zM479.66 697h5.66v6h-5.66zM524.94 697h5.66v6h-5.66zM536.26 697h5.66v6h-5.66zM592.86 697h5.66v6h-5.66zM609.84 697h5.66v6h-5.66zM706.06 697h5.66v6h-5.66zM717.38 697h11.32v6h-11.32zM960.76 697h5.66v6h-5.66zM1017.36 697h11.32v6h-11.32zM1107.92 697h11.32v6h-11.32zM1283.38 697h5.66v6h-5.66zM1306.02 697h5.66v6h-5.66zM1334.32 697h5.66v6h-5.66zM479.66 704h5.66v6h-5.66zM496.64 704h5.66v6h-5.66zM513.62 704h5.66v6h-5.66zM694.74 704h5.66v6h-5.66zM734.36 704h5.66v6h-5.66zM983.4 704h5.66v6h-5.66zM1085.28 704h5.66v6h-5.66zM1096.6 704h5.66v6h-5.66zM1294.7 704h5.66v6h-5.66zM1328.66 704h5.66v6h-5.66zM507.96 711h5.66v6h-5.66zM519.28 711h11.32v6h-11.32zM711.72 711h5.66v6h-5.66zM728.7 711h11.32v6h-11.32zM926.8 711h5.66v6h-5.66zM960.76 711h5.66v6h-5.66zM1011.7 711h5.66v6h-5.66zM1102.26 711h11.32v6h-11.32zM1277.72 711h5.66v6h-5.66zM1300.36 711h5.66v6h-5.66zM1328.66 711h11.32v6h-11.32zM536.26 718h5.66v6h-5.66zM689.08 718h5.66v6h-5.66zM734.36 718h5.66v6h-5.66zM909.82 718h11.32v6h-11.32zM983.4 718h5.66v6h-5.66zM1085.28 718h11.32v6h-11.32zM1317.34 718h11.32v6h-11.32zM1334.32 718h5.66v6h-5.66zM474 725h5.66v6h-5.66zM507.96 725h5.66v6h-5.66zM530.6 725h11.32v6h-11.32zM609.84 725h5.66v6h-5.66zM700.4 725h5.66v6h-5.66zM717.38 725h5.66v6h-5.66zM728.7 725h5.66v6h-5.66zM926.8 725h5.66v6h-5.66zM960.76 725h5.66v6h-5.66zM989.06 725h5.66v6h-5.66zM1119.24 725h5.66v6h-5.66zM1283.38 725h5.66v6h-5.66zM1294.7 725h11.32v6h-11.32zM524.94 732h5.66v6h-5.66zM683.42 732h5.66v6h-5.66zM711.72 732h11.32v6h-11.32zM734.36 732h5.66v6h-5.66zM972.08 732h5.66v6h-5.66zM989.06 732h5.66v6h-5.66zM1079.62 732h11.32v6h-11.32zM1096.6 732h5.66v6h-5.66zM1294.7 732h5.66v6h-5.66zM621.16 739h5.66v6h-5.66zM921.14 739h5.66v6h-5.66zM1096.6 739h5.66v6h-5.66zM1124.9 739h5.66v6h-5.66zM1311.68 739h5.66v6h-5.66zM1334.32 739h5.66v6h-5.66zM530.6 746h5.66v6h-5.66zM592.86 746h5.66v6h-5.66zM615.5 746h5.66v6h-5.66zM666.44 746h5.66v6h-5.66zM1085.28 746h5.66v6h-5.66zM1283.38 746h5.66v6h-5.66zM1306.02 746h11.32v6h-11.32zM1362.62 746h5.66v6h-5.66zM496.64 753h5.66v6h-5.66zM524.94 753h11.32v6h-11.32zM638.14 753h5.66v6h-5.66zM655.12 753h5.66v6h-5.66zM666.44 753h11.32v6h-11.32zM915.48 753h5.66v6h-5.66zM926.8 753h5.66v6h-5.66zM960.76 753h5.66v6h-5.66zM1085.28 753h5.66v6h-5.66zM1102.26 753h5.66v6h-5.66zM1113.58 753h5.66v6h-5.66zM1289.04 753h5.66v6h-5.66zM1300.36 753h11.32v6h-11.32zM1362.62 753h5.66v6h-5.66zM592.86 760h16.98v6h-16.98zM666.44 760h5.66v6h-5.66zM977.74 760h16.98v6h-16.98zM1096.6 760h11.32v6h-11.32zM1124.9 760h5.66v6h-5.66zM1277.72 760h5.66v6h-5.66zM1306.02 760h5.66v6h-5.66zM1317.34 760h5.66v6h-5.66zM1362.62 760h5.66v6h-5.66zM598.52 767h5.66v6h-5.66zM638.14 767h11.32v6h-11.32zM672.1 767h5.66v6h-5.66zM926.8 767h5.66v6h-5.66zM972.08 767h5.66v6h-5.66zM1113.58 767h5.66v6h-5.66zM1124.9 767h5.66v6h-5.66zM1277.72 767h5.66v6h-5.66zM1306.02 767h5.66v6h-5.66zM1323 767h11.32v6h-11.32zM1362.62 767h5.66v6h-5.66zM479.66 774h5.66v6h-5.66zM604.18 774h5.66v6h-5.66zM909.82 774h5.66v6h-5.66zM960.76 774h5.66v6h-5.66zM977.74 774h5.66v6h-5.66zM1079.62 774h5.66v6h-5.66zM1124.9 774h5.66v6h-5.66zM1323 774h5.66v6h-5.66zM1334.32 774h5.66v6h-5.66zM519.28 781h5.66v6h-5.66zM536.26 781h5.66v6h-5.66zM592.86 781h5.66v6h-5.66zM621.16 781h5.66v6h-5.66zM632.48 781h5.66v6h-5.66zM666.44 781h5.66v6h-5.66zM909.82 781h11.32v6h-11.32zM926.8 781h5.66v6h-5.66zM966.42 781h11.32v6h-11.32zM1085.28 781h5.66v6h-5.66zM1102.26 781h11.32v6h-11.32zM1289.04 781h5.66v6h-5.66zM1317.34 781h5.66v6h-5.66zM1328.66 781h5.66v6h-5.66zM513.62 788h5.66v6h-5.66zM524.94 788h5.66v6h-5.66zM536.26 788h5.66v6h-5.66zM638.14 788h5.66v6h-5.66zM655.12 788h5.66v6h-5.66zM666.44 788h5.66v6h-5.66zM677.76 788h5.66v6h-5.66zM921.14 788h5.66v6h-5.66zM989.06 788h5.66v6h-5.66zM1085.28 788h11.32v6h-11.32zM1300.36 788h5.66v6h-5.66zM1323 788h5.66v6h-5.66zM479.66 795h5.66v6h-5.66zM507.96 795h5.66v6h-5.66zM519.28 795h5.66v6h-5.66zM626.82 795h5.66v6h-5.66zM660.78 795h11.32v6h-11.32zM960.76 795h5.66v6h-5.66zM977.74 795h5.66v6h-5.66zM1090.94 795h5.66v6h-5.66zM1102.26 795h11.32v6h-11.32zM1272.06 795h5.66v6h-5.66zM1300.36 795h5.66v6h-5.66zM1323 795h5.66v6h-5.66zM1362.62 795h5.66v6h-5.66z"/>
<path fill="#cb2e15" d="M485.32 635h11.32v6h-11.32zM615.5 635h5.66v6h-5.66zM655.12 635h5.66v6h-5.66zM994.72 635h11.32v6h-11.32zM1011.7 635h5.66v6h-5.66zM1175.84 635h5.66v6h-5.66zM1249.42 635h5.66v6h-5.66zM1345.64 635h5.66v6h-5.66zM490.98 642h5.66v6h-5.66zM609.84 642h5.66v6h-5.66zM802.28 642h5.66v6h-5.66zM813.6 642h5.66v6h-5.66zM1000.38 642h5.66v6h-5.66zM1011.7 642h5.66v6h-5.66zM1181.5 642h5.66v6h-5.66zM1351.3 642h5.66v6h-5.66zM490.98 649h5.66v6h-5.66zM745.68 649h5.66v6h-5.66zM1000.38 649h5.66v6h-5.66zM1040 649h5.66v6h-5.66zM1192.82 649h5.66v6h-5.66zM1345.64 649h5.66v6h-5.66zM541.92 656h5.66v6h-5.66zM604.18 656h16.98v6h-16.98zM796.62 656h5.66v6h-5.66zM1017.36 656h5.66v6h-5.66zM1294.7 656h5.66v6h-5.66zM1345.64 656h5.66v6h-5.66zM496.64 663h5.66v6h-5.66zM564.56 663h5.66v6h-5.66zM643.8 663h5.66v6h-5.66zM796.62 663h5.66v6h-5.66zM1023.02 663h5.66v6h-5.66zM1181.5 663h5.66v6h-5.66zM1351.3 663h5.66v6h-5.66zM490.98 670h5.66v6h-5.66zM541.92 670h5.66v6h-5.66zM564.56 670h5.66v6h-5.66zM609.84 670h5.66v6h-5.66zM819.26 670h5.66v6h-5.66zM1006.04 670h11.32v6h-11.32zM1023.02 670h5.66v6h-5.66zM1187.16 670h5.66v6h-5.66zM1204.14 670h5.66v6h-5.66zM1345.64 670h5.66v6h-5.66zM541.92 677h5.66v6h-5.66zM553.24 677h11.32v6h-11.32zM598.52 677h5.66v6h-5.66zM802.28 677h11.32v6h-11.32zM887.18 677h5.66v6h-5.66zM1000.38 677h22.64v6h-22.64zM1181.5 677h5.66v6h-5.66zM1226.78 677h5.66v6h-5.66zM609.84 684h5.66v6h-5.66zM802.28 684h5.66v6h-5.66zM813.6 684h11.32v6h-11.32zM1175.84 684h5.66v6h-5.66zM1187.16 684h5.66v6h-5.66zM1204.14 684h5.66v6h-5.66zM1249.42 684h5.66v6h-5.66zM1277.72 684h11.32v6h-11.32zM1351.3 684h5.66v6h-5.66zM496.64 691h5.66v5h-5.66zM1000.38 691h11.32v5h-11.32zM1249.42 691h5.66v5h-5.66zM1272.06 691h11.32v5h-11.32zM598.52 697h5.66v6h-5.66zM1051.32 697h5.66v6h-5.66zM1175.84 697h5.66v6h-5.66zM1192.82 697h5.66v6h-5.66zM1345.64 697h5.66v6h-5.66zM1356.96 697h5.66v6h-5.66zM609.84 704h5.66v6h-5.66zM768.32 704h5.66v6h-5.66zM807.94 704h11.32v6h-11.32zM1000.38 704h5.66v6h-5.66zM1181.5 704h5.66v6h-5.66zM1345.64 704h11.32v6h-11.32zM541.92 711h5.66v6h-5.66zM655.12 711h5.66v6h-5.66zM666.44 711h5.66v6h-5.66zM802.28 711h5.66v6h-5.66zM1006.04 711h5.66v6h-5.66zM1023.02 711h5.66v6h-5.66zM1062.64 711h5.66v6h-5.66zM1153.2 711h5.66v6h-5.66zM1164.52 711h5.66v6h-5.66zM1187.16 711h5.66v6h-5.66zM1345.64 711h5.66v6h-5.66zM621.16 718h5.66v6h-5.66zM819.26 718h5.66v6h-5.66zM994.72 718h5.66v6h-5.66zM1006.04 718h16.98v6h-16.98zM1073.96 718h5.66v6h-5.66zM1204.14 718h5.66v6h-5.66zM496.64 725h5.66v6h-5.66zM638.14 725h5.66v6h-5.66zM802.28 725h5.66v6h-5.66zM819.26 725h11.32v6h-11.32zM864.54 725h5.66v6h-5.66zM1023.02 725h5.66v6h-5.66zM1181.5 725h5.66v6h-5.66zM1204.14 725h5.66v6h-5.66zM474 732h5.66v6h-5.66zM490.98 732h5.66v6h-5.66zM502.3 732h5.66v6h-5.66zM598.52 732h5.66v6h-5.66zM819.26 732h5.66v6h-5.66zM853.22 732h5.66v6h-5.66zM892.84 732h5.66v6h-5.66zM994.72 732h5.66v6h-5.66zM1006.04 732h5.66v6h-5.66zM1187.16 732h5.66v6h-5.66zM1204.14 732h5.66v6h-5.66zM1351.3 732h5.66v6h-5.66zM689.08 739h5.66v6h-5.66zM734.36 739h5.66v6h-5.66zM796.62 739h5.66v6h-5.66zM807.94 739h5.66v6h-5.66zM1153.2 739h5.66v6h-5.66zM1187.16 739h11.32v6h-11.32zM1345.64 739h11.32v6h-11.32zM490.98 746h16.98v6h-16.98zM541.92 746h5.66v6h-5.66zM694.74 746h16.98v6h-16.98zM802.28 746h5.66v6h-5.66zM813.6 746h5.66v6h-5.66zM994.72 746h5.66v6h-5.66zM1181.5 746h5.66v6h-5.66zM1192.82 746h5.66v6h-5.66zM1351.3 746h5.66v6h-5.66zM490.98 753h5.66v6h-5.66zM689.08 753h5.66v6h-5.66zM700.4 753h5.66v6h-5.66zM711.72 753h5.66v6h-5.66zM745.68 753h5.66v6h-5.66zM813.6 753h5.66v6h-5.66zM824.92 753h5.66v6h-5.66zM1283.38 753h5.66v6h-5.66zM1294.7 753h5.66v6h-5.66zM1339.98 753h5.66v6h-5.66zM490.98 760h5.66v6h-5.66zM683.42 760h5.66v6h-5.66zM700.4 760h11.32v6h-11.32zM723.04 760h5.66v6h-5.66zM1000.38 760h5.66v6h-5.66zM1011.7 760h5.66v6h-5.66zM1023.02 760h5.66v6h-5.66zM1187.16 760h5.66v6h-5.66zM1204.14 760h5.66v6h-5.66zM1283.38 760h5.66v6h-5.66zM1294.7 760h5.66v6h-5.66zM1356.96 760h5.66v6h-5.66zM496.64 767h5.66v6h-5.66zM581.54 767h5.66v6h-5.66zM796.62 767h5.66v6h-5.66zM819.26 767h5.66v6h-5.66zM836.24 767h5.66v6h-5.66zM1011.7 767h5.66v6h-5.66zM1051.32 767h5.66v6h-5.66zM1192.82 767h5.66v6h-5.66zM1232.44 767h5.66v6h-5.66zM1294.7 767h5.66v6h-5.66zM700.4 774h5.66v6h-5.66zM711.72 774h5.66v6h-5.66zM723.04 774h5.66v6h-5.66zM734.36 774h11.32v6h-11.32zM807.94 774h16.98v6h-16.98zM858.88 774h11.32v6h-11.32zM881.52 774h5.66v6h-5.66zM892.84 774h5.66v6h-5.66zM994.72 774h5.66v6h-5.66zM1130.56 774h5.66v6h-5.66zM1192.82 774h5.66v6h-5.66zM1339.98 774h5.66v6h-5.66zM490.98 781h11.32v6h-11.32zM700.4 781h5.66v6h-5.66zM819.26 781h5.66v6h-5.66zM994.72 781h5.66v6h-5.66zM1011.7 781h5.66v6h-5.66zM1023.02 781h5.66v6h-5.66zM1034.34 781h5.66v6h-5.66zM1136.22 781h5.66v6h-5.66zM1175.84 781h5.66v6h-5.66zM1187.16 781h5.66v6h-5.66zM1339.98 781h5.66v6h-5.66zM1351.3 781h5.66v6h-5.66zM683.42 788h5.66v6h-5.66zM706.06 788h5.66v6h-5.66zM717.38 788h11.32v6h-11.32zM751.34 788h5.66v6h-5.66zM1000.38 788h16.98v6h-16.98zM1073.96 788h5.66v6h-5.66zM1294.7 788h5.66v6h-5.66zM1339.98 788h5.66v6h-5.66zM502.3 795h5.66v6h-5.66zM541.92 795h5.66v6h-5.66zM723.04 795h5.66v6h-5.66zM796.62 795h16.98v6h-16.98zM994.72 795h5.66v6h-5.66zM1130.56 795h5.66v6h-5.66zM1181.5 795h5.66v6h-5.66zM1192.82 795h5.66v6h-5.66zM1204.14 795h5.66v6h-5.66zM1226.78 795h5.66v6h-5.66z"/>
<path fill="#c92413" d="M496.64 635h5.66v6h-5.66zM519.28 635h5.66v6h-5.66zM609.84 635h5.66v6h-5.66zM689.08 635h5.66v6h-5.66zM757 635h5.66v6h-5.66zM1379.6 635h5.66v6h-5.66zM541.92 642h5.66v6h-5.66zM632.48 642h5.66v6h-5.66zM773.98 642h11.32v6h-11.32zM864.54 642h5.66v6h-5.66zM1141.88 642h5.66v6h-5.66zM1215.46 642h5.66v6h-5.66zM1356.96 642h5.66v6h-5.66zM643.8 649h5.66v6h-5.66zM847.56 649h5.66v6h-5.66zM966.42 649h5.66v6h-5.66zM994.72 649h5.66v6h-5.66zM1311.68 649h5.66v6h-5.66zM1351.3 649h11.32v6h-11.32zM502.3 656h5.66v6h-5.66zM536.26 656h5.66v6h-5.66zM621.16 656h5.66v6h-5.66zM655.12 656h5.66v6h-5.66zM677.76 656h5.66v6h-5.66zM700.4 656h5.66v6h-5.66zM853.22 656h5.66v6h-5.66zM915.48 656h5.66v6h-5.66zM1006.04 656h5.66v6h-5.66zM1260.74 656h5.66v6h-5.66zM541.92 663h5.66v6h-5.66zM615.5 663h5.66v6h-5.66zM745.68 663h5.66v6h-5.66zM994.72 663h11.32v6h-11.32zM1017.36 663h5.66v6h-5.66zM1040 663h5.66v6h-5.66zM1226.78 663h5.66v6h-5.66zM1356.96 663h5.66v6h-5.66zM587.2 670h5.66v6h-5.66zM638.14 670h5.66v6h-5.66zM694.74 670h5.66v6h-5.66zM802.28 670h5.66v6h-5.66zM892.84 670h5.66v6h-5.66zM1153.2 670h5.66v6h-5.66zM490.98 677h16.98v6h-16.98zM643.8 677h5.66v6h-5.66zM813.6 677h5.66v6h-5.66zM841.9 677h5.66v6h-5.66zM1028.68 677h5.66v6h-5.66zM1056.98 677h5.66v6h-5.66zM1130.56 677h5.66v6h-5.66zM1187.16 677h5.66v6h-5.66zM1351.3 677h11.32v6h-11.32zM604.18 684h5.66v6h-5.66zM649.46 684h5.66v6h-5.66zM994.72 684h5.66v6h-5.66zM1034.34 684h5.66v6h-5.66zM1062.64 684h5.66v6h-5.66zM1192.82 684h5.66v6h-5.66zM1215.46 684h5.66v6h-5.66zM1345.64 684h5.66v6h-5.66zM1368.28 684h5.66v6h-5.66zM655.12 691h5.66v5h-5.66zM694.74 691h5.66v5h-5.66zM728.7 691h5.66v5h-5.66zM881.52 691h11.32v5h-11.32zM904.16 691h5.66v5h-5.66zM994.72 691h5.66v5h-5.66zM1119.24 691h5.66v5h-5.66zM1136.22 691h11.32v5h-11.32zM1158.86 691h5.66v5h-5.66zM1226.78 691h5.66v5h-5.66zM1345.64 691h5.66v5h-5.66zM1356.96 691h5.66v5h-5.66zM490.98 697h5.66v6h-5.66zM502.3 697h5.66v6h-5.66zM558.9 697h5.66v6h-5.66zM779.64 697h5.66v6h-5.66zM904.16 697h5.66v6h-5.66zM932.46 697h5.66v6h-5.66zM1000.38 697h5.66v6h-5.66zM1011.7 697h5.66v6h-5.66zM1068.3 697h5.66v6h-5.66zM1339.98 697h5.66v6h-5.66zM490.98 704h5.66v6h-5.66zM502.3 704h5.66v6h-5.66zM541.92 704h5.66v6h-5.66zM626.82 704h5.66v6h-5.66zM672.1 704h5.66v6h-5.66zM745.68 704h5.66v6h-5.66zM757 704h5.66v6h-5.66zM796.62 704h5.66v6h-5.66zM841.9 704h5.66v6h-5.66zM938.12 704h5.66v6h-5.66zM972.08 704h5.66v6h-5.66zM994.72 704h5.66v6h-5.66zM1011.7 704h11.32v6h-11.32zM1034.34 704h5.66v6h-5.66zM1283.38 704h5.66v6h-5.66zM1323 704h5.66v6h-5.66zM1339.98 704h5.66v6h-5.66zM496.64 711h5.66v6h-5.66zM887.18 711h11.32v6h-11.32zM1000.38 711h5.66v6h-5.66zM1192.82 711h5.66v6h-5.66zM1351.3 711h5.66v6h-5.66zM490.98 718h5.66v6h-5.66zM541.92 718h5.66v6h-5.66zM570.22 718h5.66v6h-5.66zM632.48 718h5.66v6h-5.66zM677.76 718h5.66v6h-5.66zM847.56 718h11.32v6h-11.32zM887.18 718h5.66v6h-5.66zM1345.64 718h5.66v6h-5.66zM1356.96 718h5.66v6h-5.66zM502.3 725h5.66v6h-5.66zM553.24 725h11.32v6h-11.32zM796.62 725h5.66v6h-5.66zM881.52 725h5.66v6h-5.66zM892.84 725h5.66v6h-5.66zM943.78 725h5.66v6h-5.66zM994.72 725h5.66v6h-5.66zM1006.04 725h5.66v6h-5.66zM1090.94 725h5.66v6h-5.66zM1339.98 725h5.66v6h-5.66zM1351.3 725h5.66v6h-5.66zM541.92 732h5.66v6h-5.66zM604.18 732h5.66v6h-5.66zM615.5 732h5.66v6h-5.66zM864.54 732h5.66v6h-5.66zM938.12 732h5.66v6h-5.66zM1175.84 732h5.66v6h-5.66zM1198.48 732h5.66v6h-5.66zM1339.98 732h5.66v6h-5.66zM490.98 739h5.66v6h-5.66zM502.3 739h5.66v6h-5.66zM581.54 739h5.66v6h-5.66zM683.42 739h5.66v6h-5.66zM700.4 739h5.66v6h-5.66zM1011.7 739h11.32v6h-11.32zM1045.66 739h5.66v6h-5.66zM1068.3 739h5.66v6h-5.66zM1356.96 739h5.66v6h-5.66zM1368.28 739h5.66v6h-5.66zM689.08 746h5.66v6h-5.66zM711.72 746h11.32v6h-11.32zM740.02 746h5.66v6h-5.66zM785.3 746h5.66v6h-5.66zM904.16 746h5.66v6h-5.66zM1136.22 746h11.32v6h-11.32zM1345.64 746h5.66v6h-5.66zM1373.94 746h5.66v6h-5.66zM626.82 753h5.66v6h-5.66zM683.42 753h5.66v6h-5.66zM723.04 753h5.66v6h-5.66zM740.02 753h5.66v6h-5.66zM1017.36 753h5.66v6h-5.66zM1028.68 753h5.66v6h-5.66zM1051.32 753h5.66v6h-5.66zM1130.56 753h5.66v6h-5.66zM1209.8 753h11.32v6h-11.32zM1323 753h5.66v6h-5.66zM502.3 760h5.66v6h-5.66zM524.94 760h5.66v6h-5.66zM575.88 760h5.66v6h-5.66zM802.28 760h11.32v6h-11.32zM853.22 760h5.66v6h-5.66zM926.8 760h5.66v6h-5.66zM1006.04 760h5.66v6h-5.66zM1232.44 760h5.66v6h-5.66zM490.98 767h5.66v6h-5.66zM502.3 767h5.66v6h-5.66zM683.42 767h5.66v6h-5.66zM700.4 767h5.66v6h-5.66zM723.04 767h5.66v6h-5.66zM734.36 767h11.32v6h-11.32zM813.6 767h5.66v6h-5.66zM1000.38 767h11.32v6h-11.32zM1090.94 767h5.66v6h-5.66zM1221.12 767h5.66v6h-5.66zM541.92 774h5.66v6h-5.66zM689.08 774h5.66v6h-5.66zM706.06 774h5.66v6h-5.66zM728.7 774h5.66v6h-5.66zM762.66 774h5.66v6h-5.66zM802.28 774h5.66v6h-5.66zM955.1 774h5.66v6h-5.66zM1011.7 774h5.66v6h-5.66zM1023.02 774h5.66v6h-5.66zM1198.48 774h5.66v6h-5.66zM1232.44 774h5.66v6h-5.66zM502.3 781h5.66v6h-5.66zM541.92 781h5.66v6h-5.66zM672.1 781h5.66v6h-5.66zM689.08 781h5.66v6h-5.66zM723.04 781h16.98v6h-16.98zM813.6 781h5.66v6h-5.66zM949.44 781h11.32v6h-11.32zM1000.38 781h5.66v6h-5.66zM1113.58 781h5.66v6h-5.66zM592.86 788h5.66v6h-5.66zM841.9 788h5.66v6h-5.66zM1017.36 788h5.66v6h-5.66zM1209.8 788h5.66v6h-5.66zM1249.42 788h5.66v6h-5.66zM1289.04 788h5.66v6h-5.66zM1345.64 788h11.32v6h-11.32zM490.98 795h5.66v6h-5.66zM598.52 795h5.66v6h-5.66zM689.08 795h5.66v6h-5.66zM711.72 795h5.66v6h-5.66zM734.36 795h5.66v6h-5.66zM813.6 795h5.66v6h-5.66zM904.16 795h5.66v6h-5.66zM1006.04 795h5.66v6h-5.66zM1062.64 795h5.66v6h-5.66zM1136.22 795h5.66v6h-5.66zM1158.86 795h5.66v6h-5.66zM1339.98 795h5.66v6h-5.66z"/>
<path fill="#c71a12" d="M502.3 635h5.66v6h-5.66zM643.8 635h5.66v6h-5.66zM740.02 635h5.66v6h-5.66zM921.14 635h5.66v6h-5.66zM1017.36 635h5.66v6h-5.66zM1073.96 635h5.66v6h-5.66zM1339.98 635h5.66v6h-5.66zM1351.3 635h5.66v6h-5.66zM502.3 642h5.66v6h-5.66zM875.86 642h5.66v6h-5.66zM926.8 642h5.66v6h-5.66zM983.4 642h5.66v6h-5.66zM1006.04 642h5.66v6h-5.66zM1017.36 642h5.66v6h-5.66zM1243.76 642h5.66v6h-5.66zM1345.64 642h5.66v6h-5.66zM541.92 649h5.66v6h-5.66zM660.78 649h5.66v6h-5.66zM858.88 649h5.66v6h-5.66zM1006.04 649h5.66v6h-5.66zM1317.34 649h5.66v6h-5.66zM490.98 656h5.66v6h-5.66zM921.14 656h5.66v6h-5.66zM1000.38 656h5.66v6h-5.66zM1051.32 656h5.66v6h-5.66zM1198.48 656h5.66v6h-5.66zM1339.98 656h5.66v6h-5.66zM1351.3 656h11.32v6h-11.32zM1373.94 656h5.66v6h-5.66zM490.98 663h5.66v6h-5.66zM581.54 663h5.66v6h-5.66zM672.1 663h5.66v6h-5.66zM734.36 663h5.66v6h-5.66zM892.84 663h5.66v6h-5.66zM983.4 663h5.66v6h-5.66zM1249.42 663h5.66v6h-5.66zM1345.64 663h5.66v6h-5.66zM496.64 670h5.66v6h-5.66zM649.46 670h5.66v6h-5.66zM1000.38 670h5.66v6h-5.66zM1017.36 670h5.66v6h-5.66zM1339.98 670h5.66v6h-5.66zM1356.96 670h5.66v6h-5.66zM507.96 677h5.66v6h-5.66zM824.92 677h5.66v6h-5.66zM994.72 677h5.66v6h-5.66zM1198.48 677h5.66v6h-5.66zM1339.98 677h5.66v6h-5.66zM496.64 684h5.66v6h-5.66zM1017.36 684h11.32v6h-11.32zM1266.4 684h5.66v6h-5.66zM1339.98 684h5.66v6h-5.66zM1356.96 684h5.66v6h-5.66zM490.98 691h5.66v5h-5.66zM502.3 691h5.66v5h-5.66zM773.98 691h5.66v5h-5.66zM1187.16 691h5.66v5h-5.66zM1266.4 691h5.66v5h-5.66zM1306.02 691h5.66v5h-5.66zM1339.98 691h5.66v5h-5.66zM541.92 697h5.66v6h-5.66zM587.2 697h5.66v6h-5.66zM660.78 697h5.66v6h-5.66zM898.5 697h5.66v6h-5.66zM994.72 697h5.66v6h-5.66zM1170.18 697h5.66v6h-5.66zM723.04 704h5.66v6h-5.66zM490.98 711h5.66v6h-5.66zM915.48 711h5.66v6h-5.66zM994.72 711h5.66v6h-5.66zM1017.36 711h5.66v6h-5.66zM807.94 718h5.66v6h-5.66zM1000.38 718h5.66v6h-5.66zM1339.98 718h5.66v6h-5.66zM1373.94 718h11.32v6h-11.32zM490.98 725h5.66v6h-5.66zM541.92 725h5.66v6h-5.66zM592.86 725h5.66v6h-5.66zM677.76 725h5.66v6h-5.66zM813.6 725h5.66v6h-5.66zM904.16 725h5.66v6h-5.66zM1011.7 725h5.66v6h-5.66zM1232.44 725h5.66v6h-5.66zM1272.06 725h5.66v6h-5.66zM1323 725h5.66v6h-5.66zM1345.64 725h5.66v6h-5.66zM1356.96 725h5.66v6h-5.66zM836.24 732h5.66v6h-5.66zM1000.38 732h5.66v6h-5.66zM1017.36 732h5.66v6h-5.66zM1158.86 732h5.66v6h-5.66zM1260.74 732h5.66v6h-5.66zM1311.68 732h5.66v6h-5.66zM1345.64 732h5.66v6h-5.66zM1362.62 732h5.66v6h-5.66zM541.92 739h5.66v6h-5.66zM626.82 739h5.66v6h-5.66zM694.74 739h5.66v6h-5.66zM717.38 739h11.32v6h-11.32zM836.24 739h5.66v6h-5.66zM892.84 739h5.66v6h-5.66zM1006.04 739h5.66v6h-5.66zM1023.02 739h5.66v6h-5.66zM1294.7 739h5.66v6h-5.66zM734.36 746h5.66v6h-5.66zM1006.04 746h11.32v6h-11.32zM502.3 753h5.66v6h-5.66zM604.18 753h5.66v6h-5.66zM643.8 753h5.66v6h-5.66zM717.38 753h5.66v6h-5.66zM728.7 753h5.66v6h-5.66zM1011.7 753h5.66v6h-5.66zM1023.02 753h5.66v6h-5.66zM1345.64 753h11.32v6h-11.32zM541.92 760h5.66v6h-5.66zM711.72 760h5.66v6h-5.66zM728.7 760h11.32v6h-11.32zM785.3 760h5.66v6h-5.66zM796.62 760h5.66v6h-5.66zM1164.52 760h5.66v6h-5.66zM1238.1 760h5.66v6h-5.66zM1339.98 760h5.66v6h-5.66zM541.92 767h5.66v6h-5.66zM689.08 767h5.66v6h-5.66zM994.72 767h5.66v6h-5.66zM1023.02 767h5.66v6h-5.66zM1339.98 767h11.32v6h-11.32zM1379.6 767h5.66v6h-5.66zM490.98 774h16.98v6h-16.98zM660.78 774h5.66v6h-5.66zM717.38 774h5.66v6h-5.66zM779.64 774h5.66v6h-5.66zM870.2 774h5.66v6h-5.66zM1175.84 774h5.66v6h-5.66zM1221.12 774h5.66v6h-5.66zM1345.64 774h11.32v6h-11.32zM694.74 781h5.66v6h-5.66zM717.38 781h5.66v6h-5.66zM740.02 781h5.66v6h-5.66zM785.3 781h5.66v6h-5.66zM864.54 781h5.66v6h-5.66zM989.06 781h5.66v6h-5.66zM1006.04 781h5.66v6h-5.66zM1017.36 781h5.66v6h-5.66zM490.98 788h5.66v6h-5.66zM547.58 788h5.66v6h-5.66zM575.88 788h5.66v6h-5.66zM694.74 788h11.32v6h-11.32zM740.02 788h5.66v6h-5.66zM1023.02 788h5.66v6h-5.66zM1068.3 788h5.66v6h-5.66zM1119.24 788h5.66v6h-5.66zM1147.54 788h5.66v6h-5.66zM1192.82 788h5.66v6h-5.66zM1266.4 788h5.66v6h-5.66zM694.74 795h5.66v6h-5.66zM717.38 795h5.66v6h-5.66zM1017.36 795h5.66v6h-5.66zM1356.96 795h5.66v6h-5.66z"/>
<path fill="#d78220" d="M507.96 635h5.66v6h-5.66zM519.28 642h5.66v6h-5.66zM807.94 642h5.66v6h-5.66zM1373.94 642h5.66v6h-5.66zM513.62 649h5.66v6h-5.66zM530.6 649h5.66v6h-5.66zM1385.26 649h2.74v6h-2.74zM507.96 663h5.66v6h-5.66zM479.66 670h11.32v6h-11.32zM519.28 670h5.66v6h-5.66zM796.62 670h5.66v6h-5.66zM1283.38 670h5.66v6h-5.66zM530.6 677h5.66v6h-5.66zM519.28 684h5.66v6h-5.66zM598.52 684h5.66v6h-5.66zM615.5 684h5.66v6h-5.66zM507.96 691h5.66v5h-5.66zM609.84 691h5.66v5h-5.66zM1272.06 697h5.66v6h-5.66zM513.62 711h5.66v6h-5.66zM530.6 711h5.66v6h-5.66zM592.86 711h5.66v6h-5.66zM1198.48 711h5.66v6h-5.66zM1175.84 725h5.66v6h-5.66zM1379.6 725h5.66v6h-5.66zM479.66 732h5.66v6h-5.66zM609.84 732h5.66v6h-5.66zM507.96 739h5.66v6h-5.66zM536.26 739h5.66v6h-5.66zM643.8 739h5.66v6h-5.66zM802.28 739h5.66v6h-5.66zM1198.48 739h5.66v6h-5.66zM1272.06 739h5.66v6h-5.66zM524.94 746h5.66v6h-5.66zM604.18 746h5.66v6h-5.66zM1379.6 746h5.66v6h-5.66zM485.32 753h5.66v6h-5.66zM507.96 753h5.66v6h-5.66zM660.78 753h5.66v6h-5.66zM1204.14 753h5.66v6h-5.66zM1272.06 753h5.66v6h-5.66zM626.82 760h5.66v6h-5.66zM655.12 760h11.32v6h-11.32zM1379.6 760h5.66v6h-5.66zM802.28 767h5.66v6h-5.66zM507.96 774h11.32v6h-11.32zM536.26 774h5.66v6h-5.66zM615.5 774h5.66v6h-5.66zM796.62 774h5.66v6h-5.66zM530.6 781h5.66v6h-5.66zM598.52 781h5.66v6h-5.66zM609.84 781h5.66v6h-5.66zM649.46 781h5.66v6h-5.66zM485.32 788h5.66v6h-5.66zM632.48 788h5.66v6h-5.66zM615.5 795h5.66v6h-5.66zM677.76 795h5.66v6h-5.66zM819.26 795h5.66v6h-5.66z"/>
<path fill="#d67320" d="M513.62 635h5.66v6h-5.66zM536.26 635h5.66v6h-5.66zM717.38 635h11.32v6h-11.32zM960.76 635h16.98v6h-16.98zM507.96 642h5.66v6h-5.66zM524.94 642h5.66v6h-5.66zM909.82 642h5.66v6h-5.66zM960.76 642h5.66v6h-5.66zM977.74 642h5.66v6h-5.66zM926.8 649h5.66v6h-5.66zM960.76 649h5.66v6h-5.66zM972.08 649h5.66v6h-5.66zM983.4 649h5.66v6h-5.66zM734.36 656h5.66v6h-5.66zM530.6 663h11.32v6h-11.32zM1119.24 663h5.66v6h-5.66zM921.14 670h11.32v6h-11.32zM960.76 670h5.66v6h-5.66zM524.94 677h5.66v6h-5.66zM909.82 677h5.66v6h-5.66zM926.8 677h5.66v6h-5.66zM1328.66 677h5.66v6h-5.66zM524.94 684h11.32v6h-11.32zM909.82 684h5.66v6h-5.66zM983.4 684h5.66v6h-5.66zM513.62 697h5.66v6h-5.66zM989.06 697h5.66v6h-5.66zM530.6 704h11.32v6h-11.32zM915.48 704h5.66v6h-5.66zM960.76 704h5.66v6h-5.66zM977.74 711h11.32v6h-11.32zM1306.02 711h5.66v6h-5.66zM507.96 718h5.66v6h-5.66zM524.94 718h5.66v6h-5.66zM717.38 718h5.66v6h-5.66zM921.14 718h5.66v6h-5.66zM519.28 725h11.32v6h-11.32zM915.48 725h5.66v6h-5.66zM983.4 725h5.66v6h-5.66zM1317.34 725h5.66v6h-5.66zM507.96 732h5.66v6h-5.66zM915.48 732h5.66v6h-5.66zM926.8 732h5.66v6h-5.66zM977.74 732h5.66v6h-5.66zM513.62 739h5.66v6h-5.66zM530.6 739h5.66v6h-5.66zM604.18 739h5.66v6h-5.66zM615.5 739h5.66v6h-5.66zM649.46 739h11.32v6h-11.32zM915.48 739h5.66v6h-5.66zM1079.62 739h5.66v6h-5.66zM536.26 746h5.66v6h-5.66zM632.48 746h5.66v6h-5.66zM643.8 746h5.66v6h-5.66zM677.76 746h5.66v6h-5.66zM915.48 746h5.66v6h-5.66zM972.08 746h5.66v6h-5.66zM513.62 753h5.66v6h-5.66zM598.52 753h5.66v6h-5.66zM615.5 753h11.32v6h-11.32zM632.48 753h5.66v6h-5.66zM649.46 753h5.66v6h-5.66zM909.82 753h5.66v6h-5.66zM921.14 753h5.66v6h-5.66zM966.42 753h5.66v6h-5.66zM983.4 753h5.66v6h-5.66zM507.96 760h5.66v6h-5.66zM615.5 760h5.66v6h-5.66zM643.8 760h5.66v6h-5.66zM915.48 760h5.66v6h-5.66zM972.08 760h5.66v6h-5.66zM519.28 767h11.32v6h-11.32zM615.5 767h5.66v6h-5.66zM655.12 767h11.32v6h-11.32zM921.14 767h5.66v6h-5.66zM983.4 767h5.66v6h-5.66zM530.6 774h5.66v6h-5.66zM621.16 774h5.66v6h-5.66zM643.8 774h5.66v6h-5.66zM666.44 774h5.66v6h-5.66zM677.76 774h5.66v6h-5.66zM972.08 774h5.66v6h-5.66zM507.96 781h11.32v6h-11.32zM524.94 781h5.66v6h-5.66zM604.18 781h5.66v6h-5.66zM615.5 781h5.66v6h-5.66zM660.78 781h5.66v6h-5.66zM921.14 781h5.66v6h-5.66zM960.76 781h5.66v6h-5.66zM519.28 788h5.66v6h-5.66zM615.5 788h5.66v6h-5.66zM626.82 788h5.66v6h-5.66zM977.74 788h5.66v6h-5.66zM513.62 795h5.66v6h-5.66zM530.6 795h11.32v6h-11.32zM604.18 795h5.66v6h-5.66zM655.12 795h5.66v6h-5.66zM672.1 795h5.66v6h-5.66zM921.14 795h5.66v6h-5.66zM983.4 795h5.66v6h-5.66z"/>
<path fill="#cc3817" d="M541.92 635h5.66v6h-5.66zM683.42 635h5.66v6h-5.66zM796.62 635h5.66v6h-5.66zM813.6 635h5.66v6h-5.66zM1181.5 635h5.66v6h-5.66zM1192.82 635h5.66v6h-5.66zM1204.14 635h5.66v6h-5.66zM1289.04 635h11.32v6h-11.32zM1317.34 635h5.66v6h-5.66zM485.32 642h5.66v6h-5.66zM615.5 642h5.66v6h-5.66zM717.38 642h5.66v6h-5.66zM994.72 642h5.66v6h-5.66zM1204.14 642h5.66v6h-5.66zM1272.06 642h5.66v6h-5.66zM1283.38 642h5.66v6h-5.66zM1328.66 642h5.66v6h-5.66zM496.64 649h5.66v6h-5.66zM598.52 649h5.66v6h-5.66zM683.42 649h5.66v6h-5.66zM802.28 649h5.66v6h-5.66zM819.26 649h5.66v6h-5.66zM1023.02 649h5.66v6h-5.66zM1119.24 649h5.66v6h-5.66zM1181.5 649h5.66v6h-5.66zM1198.48 649h11.32v6h-11.32zM1272.06 649h16.98v6h-16.98zM1294.7 649h5.66v6h-5.66zM1362.62 649h5.66v6h-5.66zM496.64 656h5.66v6h-5.66zM592.86 656h5.66v6h-5.66zM813.6 656h11.32v6h-11.32zM994.72 656h5.66v6h-5.66zM1023.02 656h5.66v6h-5.66zM1272.06 656h5.66v6h-5.66zM1289.04 656h5.66v6h-5.66zM485.32 663h5.66v6h-5.66zM598.52 663h5.66v6h-5.66zM802.28 663h5.66v6h-5.66zM813.6 663h5.66v6h-5.66zM1011.7 663h5.66v6h-5.66zM1289.04 663h11.32v6h-11.32zM502.3 670h5.66v6h-5.66zM615.5 670h5.66v6h-5.66zM807.94 670h5.66v6h-5.66zM994.72 670h5.66v6h-5.66zM1175.84 670h5.66v6h-5.66zM479.66 677h5.66v6h-5.66zM592.86 677h5.66v6h-5.66zM604.18 677h11.32v6h-11.32zM819.26 677h5.66v6h-5.66zM1023.02 677h5.66v6h-5.66zM1192.82 677h5.66v6h-5.66zM1204.14 677h5.66v6h-5.66zM474 684h11.32v6h-11.32zM1006.04 684h11.32v6h-11.32zM1181.5 684h5.66v6h-5.66zM1198.48 684h5.66v6h-5.66zM1272.06 684h5.66v6h-5.66zM474 691h11.32v5h-11.32zM683.42 691h5.66v5h-5.66zM796.62 691h5.66v5h-5.66zM813.6 691h5.66v5h-5.66zM1011.7 691h5.66v5h-5.66zM485.32 697h5.66v6h-5.66zM496.64 697h5.66v6h-5.66zM615.5 697h5.66v6h-5.66zM802.28 697h11.32v6h-11.32zM1006.04 697h5.66v6h-5.66zM1124.9 697h5.66v6h-5.66zM474 704h5.66v6h-5.66zM700.4 704h5.66v6h-5.66zM1006.04 704h5.66v6h-5.66zM1175.84 704h5.66v6h-5.66zM1204.14 704h5.66v6h-5.66zM1272.06 704h11.32v6h-11.32zM485.32 711h5.66v6h-5.66zM502.3 711h5.66v6h-5.66zM813.6 711h5.66v6h-5.66zM1175.84 711h5.66v6h-5.66zM1289.04 711h5.66v6h-5.66zM485.32 718h5.66v6h-5.66zM496.64 718h11.32v6h-11.32zM592.86 718h5.66v6h-5.66zM609.84 718h11.32v6h-11.32zM796.62 718h5.66v6h-5.66zM1023.02 718h5.66v6h-5.66zM1187.16 718h16.98v6h-16.98zM1277.72 718h11.32v6h-11.32zM1294.7 718h5.66v6h-5.66zM1000.38 725h5.66v6h-5.66zM1192.82 725h5.66v6h-5.66zM496.64 732h5.66v6h-5.66zM592.86 732h5.66v6h-5.66zM796.62 732h5.66v6h-5.66zM807.94 732h5.66v6h-5.66zM1011.7 732h5.66v6h-5.66zM1124.9 732h5.66v6h-5.66zM1192.82 732h5.66v6h-5.66zM1272.06 732h5.66v6h-5.66zM479.66 739h11.32v6h-11.32zM1181.5 739h5.66v6h-5.66zM1204.14 739h5.66v6h-5.66zM1283.38 739h5.66v6h-5.66zM474 746h11.32v6h-11.32zM683.42 746h5.66v6h-5.66zM807.94 746h5.66v6h-5.66zM1000.38 746h5.66v6h-5.66zM1017.36 746h11.32v6h-11.32zM1198.48 746h11.32v6h-11.32zM1277.72 746h5.66v6h-5.66zM1294.7 746h5.66v6h-5.66zM479.66 753h5.66v6h-5.66zM796.62 753h5.66v6h-5.66zM994.72 753h11.32v6h-11.32zM479.66 760h11.32v6h-11.32zM819.26 760h5.66v6h-5.66zM994.72 760h5.66v6h-5.66zM1085.28 760h5.66v6h-5.66zM1192.82 760h5.66v6h-5.66zM479.66 767h5.66v6h-5.66zM807.94 767h5.66v6h-5.66zM1198.48 767h5.66v6h-5.66zM1289.04 767h5.66v6h-5.66zM474 774h5.66v6h-5.66zM683.42 774h5.66v6h-5.66zM1000.38 774h5.66v6h-5.66zM1277.72 774h5.66v6h-5.66zM1289.04 774h5.66v6h-5.66zM479.66 781h11.32v6h-11.32zM802.28 781h5.66v6h-5.66zM1272.06 781h5.66v6h-5.66zM1294.7 781h5.66v6h-5.66zM496.64 788h11.32v6h-11.32zM541.92 788h5.66v6h-5.66zM807.94 788h5.66v6h-5.66zM994.72 788h5.66v6h-5.66zM1107.92 788h5.66v6h-5.66zM1198.48 788h11.32v6h-11.32zM1283.38 788h5.66v6h-5.66zM1011.7 795h5.66v6h-5.66zM1023.02 795h5.66v6h-5.66zM1187.16 795h5.66v6h-5.66zM1277.72 795h5.66v6h-5.66zM1289.04 795h11.32v6h-11.32z"/>
<path fill="#c51010" d="M547.58 635h45.28v6h-45.28zM621.16 635h22.64v6h-22.64zM649.46 635h5.66v6h-5.66zM660.78 635h22.64v6h-22.64zM745.68 635h11.32v6h-11.32zM762.66 635h33.96v6h-33.96zM824.92 635h84.9v6h-84.9zM932.46 635h28.3v6h-28.3zM1006.04 635h5.66v6h-5.66zM1023.02 635h50.94v6h-50.94zM1130.56 635h45.28v6h-45.28zM1209.8 635h39.62v6h-39.62zM1255.08 635h16.98v6h-16.98zM1356.96 635h5.66v6h-5.66zM496.64 642h5.66v6h-5.66zM547.58 642h45.28v6h-45.28zM621.16 642h11.32v6h-11.32zM638.14 642h45.28v6h-45.28zM745.68 642h28.3v6h-28.3zM785.3 642h11.32v6h-11.32zM824.92 642h39.62v6h-39.62zM870.2 642h5.66v6h-5.66zM881.52 642h28.3v6h-28.3zM932.46 642h28.3v6h-28.3zM1023.02 642h56.6v6h-56.6zM1124.9 642h16.98v6h-16.98zM1147.54 642h28.3v6h-28.3zM1209.8 642h5.66v6h-5.66zM1221.12 642h22.64v6h-22.64zM1249.42 642h22.64v6h-22.64zM1339.98 642h5.66v6h-5.66zM547.58 649h45.28v6h-45.28zM604.18 649h5.66v6h-5.66zM621.16 649h22.64v6h-22.64zM649.46 649h11.32v6h-11.32zM666.44 649h16.98v6h-16.98zM751.34 649h45.28v6h-45.28zM824.92 649h22.64v6h-22.64zM853.22 649h5.66v6h-5.66zM864.54 649h45.28v6h-45.28zM932.46 649h28.3v6h-28.3zM1011.7 649h5.66v6h-5.66zM1028.68 649h11.32v6h-11.32zM1045.66 649h33.96v6h-33.96zM1130.56 649h45.28v6h-45.28zM1209.8 649h62.26v6h-62.26zM1339.98 649h5.66v6h-5.66zM547.58 656h45.28v6h-45.28zM626.82 656h28.3v6h-28.3zM660.78 656h16.98v6h-16.98zM745.68 656h50.94v6h-50.94zM824.92 656h28.3v6h-28.3zM858.88 656h50.94v6h-50.94zM932.46 656h28.3v6h-28.3zM1028.68 656h22.64v6h-22.64zM1056.98 656h22.64v6h-22.64zM1130.56 656h45.28v6h-45.28zM1192.82 656h5.66v6h-5.66zM1209.8 656h50.94v6h-50.94zM1266.4 656h5.66v6h-5.66zM502.3 663h5.66v6h-5.66zM547.58 663h16.98v6h-16.98zM570.22 663h11.32v6h-11.32zM587.2 663h5.66v6h-5.66zM621.16 663h22.64v6h-22.64zM649.46 663h22.64v6h-22.64zM677.76 663h5.66v6h-5.66zM751.34 663h45.28v6h-45.28zM824.92 663h67.92v6h-67.92zM898.5 663h11.32v6h-11.32zM932.46 663h28.3v6h-28.3zM1006.04 663h5.66v6h-5.66zM1028.68 663h11.32v6h-11.32zM1045.66 663h33.96v6h-33.96zM1130.56 663h45.28v6h-45.28zM1209.8 663h16.98v6h-16.98zM1232.44 663h16.98v6h-16.98zM1255.08 663h16.98v6h-16.98zM1283.38 663h5.66v6h-5.66zM547.58 670h16.98v6h-16.98zM570.22 670h16.98v6h-16.98zM621.16 670h16.98v6h-16.98zM643.8 670h5.66v6h-5.66zM655.12 670h28.3v6h-28.3zM745.68 670h50.94v6h-50.94zM824.92 670h67.92v6h-67.92zM898.5 670h11.32v6h-11.32zM932.46 670h28.3v6h-28.3zM1028.68 670h50.94v6h-50.94zM1130.56 670h22.64v6h-22.64zM1158.86 670h16.98v6h-16.98zM1209.8 670h62.26v6h-62.26zM1351.3 670h5.66v6h-5.66zM547.58 677h5.66v6h-5.66zM564.56 677h28.3v6h-28.3zM621.16 677h22.64v6h-22.64zM649.46 677h33.96v6h-33.96zM745.68 677h50.94v6h-50.94zM830.58 677h11.32v6h-11.32zM847.56 677h39.62v6h-39.62zM892.84 677h16.98v6h-16.98zM932.46 677h28.3v6h-28.3zM1034.34 677h22.64v6h-22.64zM1062.64 677h16.98v6h-16.98zM1136.22 677h39.62v6h-39.62zM1209.8 677h16.98v6h-16.98zM1232.44 677h39.62v6h-39.62zM1345.64 677h5.66v6h-5.66zM502.3 684h5.66v6h-5.66zM547.58 684h45.28v6h-45.28zM621.16 684h28.3v6h-28.3zM655.12 684h28.3v6h-28.3zM745.68 684h50.94v6h-50.94zM824.92 684h84.9v6h-84.9zM932.46 684h28.3v6h-28.3zM966.42 684h5.66v6h-5.66zM1028.68 684h5.66v6h-5.66zM1040 684h22.64v6h-22.64zM1068.3 684h11.32v6h-11.32zM1130.56 684h45.28v6h-45.28zM1209.8 684h5.66v6h-5.66zM1221.12 684h28.3v6h-28.3zM1255.08 684h11.32v6h-11.32zM547.58 691h45.28v5h-45.28zM615.5 691h39.62v5h-39.62zM660.78 691h22.64v5h-22.64zM745.68 691h28.3v5h-28.3zM779.64 691h16.98v5h-16.98zM824.92 691h56.6v5h-56.6zM892.84 691h11.32v5h-11.32zM932.46 691h28.3v5h-28.3zM1028.68 691h50.94v5h-50.94zM1130.56 691h5.66v5h-5.66zM1147.54 691h11.32v5h-11.32zM1164.52 691h11.32v5h-11.32zM1209.8 691h16.98v5h-16.98zM1232.44 691h16.98v5h-16.98zM1255.08 691h11.32v5h-11.32zM1351.3 691h5.66v5h-5.66zM547.58 697h11.32v6h-11.32zM564.56 697h22.64v6h-22.64zM621.16 697h39.62v6h-39.62zM666.44 697h16.98v6h-16.98zM745.68 697h33.96v6h-33.96zM785.3 697h11.32v6h-11.32zM824.92 697h73.58v6h-73.58zM938.12 697h22.64v6h-22.64zM1028.68 697h22.64v6h-22.64zM1056.98 697h11.32v6h-11.32zM1073.96 697h5.66v6h-5.66zM1130.56 697h39.62v6h-39.62zM1209.8 697h62.26v6h-62.26zM1351.3 697h5.66v6h-5.66zM524.94 704h5.66v6h-5.66zM547.58 704h45.28v6h-45.28zM621.16 704h5.66v6h-5.66zM632.48 704h39.62v6h-39.62zM677.76 704h5.66v6h-5.66zM751.34 704h5.66v6h-5.66zM762.66 704h5.66v6h-5.66zM773.98 704h22.64v6h-22.64zM824.92 704h16.98v6h-16.98zM847.56 704h62.26v6h-62.26zM932.46 704h5.66v6h-5.66zM943.78 704h16.98v6h-16.98zM1023.02 704h11.32v6h-11.32zM1040 704h39.62v6h-39.62zM1130.56 704h45.28v6h-45.28zM1209.8 704h62.26v6h-62.26zM1356.96 704h5.66v6h-5.66zM547.58 711h45.28v6h-45.28zM621.16 711h33.96v6h-33.96zM660.78 711h5.66v6h-5.66zM672.1 711h11.32v6h-11.32zM745.68 711h50.94v6h-50.94zM824.92 711h62.26v6h-62.26zM898.5 711h16.98v6h-16.98zM932.46 711h28.3v6h-28.3zM1028.68 711h33.96v6h-33.96zM1068.3 711h11.32v6h-11.32zM1130.56 711h22.64v6h-22.64zM1158.86 711h5.66v6h-5.66zM1170.18 711h5.66v6h-5.66zM1209.8 711h62.26v6h-62.26zM1339.98 711h5.66v6h-5.66zM1356.96 711h5.66v6h-5.66zM479.66 718h5.66v6h-5.66zM547.58 718h22.64v6h-22.64zM575.88 718h16.98v6h-16.98zM626.82 718h5.66v6h-5.66zM638.14 718h39.62v6h-39.62zM745.68 718h50.94v6h-50.94zM824.92 718h22.64v6h-22.64zM858.88 718h28.3v6h-28.3zM892.84 718h16.98v6h-16.98zM932.46 718h28.3v6h-28.3zM989.06 718h5.66v6h-5.66zM1028.68 718h45.28v6h-45.28zM1130.56 718h45.28v6h-45.28zM1209.8 718h62.26v6h-62.26zM547.58 725h5.66v6h-5.66zM564.56 725h28.3v6h-28.3zM621.16 725h16.98v6h-16.98zM643.8 725h33.96v6h-33.96zM745.68 725h50.94v6h-50.94zM830.58 725h33.96v6h-33.96zM870.2 725h11.32v6h-11.32zM887.18 725h5.66v6h-5.66zM898.5 725h5.66v6h-5.66zM932.46 725h11.32v6h-11.32zM949.44 725h11.32v6h-11.32zM1017.36 725h5.66v6h-5.66zM1028.68 725h50.94v6h-50.94zM1130.56 725h45.28v6h-45.28zM1209.8 725h22.64v6h-22.64zM1238.1 725h33.96v6h-33.96zM547.58 732h45.28v6h-45.28zM621.16 732h62.26v6h-62.26zM745.68 732h50.94v6h-50.94zM824.92 732h11.32v6h-11.32zM841.9 732h11.32v6h-11.32zM858.88 732h5.66v6h-5.66zM870.2 732h22.64v6h-22.64zM898.5 732h11.32v6h-11.32zM932.46 732h5.66v6h-5.66zM943.78 732h16.98v6h-16.98zM1023.02 732h56.6v6h-56.6zM1130.56 732h28.3v6h-28.3zM1164.52 732h11.32v6h-11.32zM1209.8 732h50.94v6h-50.94zM1266.4 732h5.66v6h-5.66zM1334.32 732h5.66v6h-5.66zM1356.96 732h5.66v6h-5.66zM496.64 739h5.66v6h-5.66zM547.58 739h33.96v6h-33.96zM587.2 739h5.66v6h-5.66zM706.06 739h11.32v6h-11.32zM728.7 739h5.66v6h-5.66zM740.02 739h56.6v6h-56.6zM824.92 739h11.32v6h-11.32zM841.9 739h50.94v6h-50.94zM898.5 739h11.32v6h-11.32zM932.46 739h28.3v6h-28.3zM1028.68 739h16.98v6h-16.98zM1051.32 739h16.98v6h-16.98zM1073.96 739h5.66v6h-5.66zM1130.56 739h22.64v6h-22.64zM1158.86 739h16.98v6h-16.98zM1209.8 739h62.26v6h-62.26zM547.58 746h45.28v6h-45.28zM723.04 746h11.32v6h-11.32zM745.68 746h39.62v6h-39.62zM790.96 746h5.66v6h-5.66zM824.92 746h79.24v6h-79.24zM932.46 746h28.3v6h-28.3zM1028.68 746h50.94v6h-50.94zM1130.56 746h5.66v6h-5.66zM1147.54 746h28.3v6h-28.3zM1209.8 746h62.26v6h-62.26zM1339.98 746h5.66v6h-5.66zM1356.96 746h5.66v6h-5.66zM547.58 753h45.28v6h-45.28zM694.74 753h5.66v6h-5.66zM706.06 753h5.66v6h-5.66zM734.36 753h5.66v6h-5.66zM751.34 753h45.28v6h-45.28zM802.28 753h5.66v6h-5.66zM830.58 753h79.24v6h-79.24zM932.46 753h28.3v6h-28.3zM972.08 753h5.66v6h-5.66zM1006.04 753h5.66v6h-5.66zM1034.34 753h16.98v6h-16.98zM1056.98 753h22.64v6h-22.64zM1136.22 753h39.62v6h-39.62zM1221.12 753h50.94v6h-50.94zM1356.96 753h5.66v6h-5.66zM496.64 760h5.66v6h-5.66zM547.58 760h28.3v6h-28.3zM581.54 760h11.32v6h-11.32zM689.08 760h11.32v6h-11.32zM717.38 760h5.66v6h-5.66zM740.02 760h45.28v6h-45.28zM790.96 760h5.66v6h-5.66zM824.92 760h28.3v6h-28.3zM858.88 760h50.94v6h-50.94zM932.46 760h28.3v6h-28.3zM1017.36 760h5.66v6h-5.66zM1028.68 760h50.94v6h-50.94zM1130.56 760h33.96v6h-33.96zM1170.18 760h5.66v6h-5.66zM1209.8 760h22.64v6h-22.64zM1243.76 760h28.3v6h-28.3zM1323 760h5.66v6h-5.66zM1345.64 760h5.66v6h-5.66zM547.58 767h33.96v6h-33.96zM587.2 767h5.66v6h-5.66zM694.74 767h5.66v6h-5.66zM706.06 767h5.66v6h-5.66zM717.38 767h5.66v6h-5.66zM728.7 767h5.66v6h-5.66zM745.68 767h50.94v6h-50.94zM824.92 767h11.32v6h-11.32zM841.9 767h67.92v6h-67.92zM932.46 767h28.3v6h-28.3zM1017.36 767h5.66v6h-5.66zM1028.68 767h22.64v6h-22.64zM1056.98 767h22.64v6h-22.64zM1096.6 767h5.66v6h-5.66zM1130.56 767h45.28v6h-45.28zM1204.14 767h16.98v6h-16.98zM1226.78 767h5.66v6h-5.66zM1238.1 767h33.96v6h-33.96zM1351.3 767h11.32v6h-11.32zM547.58 774h45.28v6h-45.28zM649.46 774h5.66v6h-5.66zM694.74 774h5.66v6h-5.66zM745.68 774h16.98v6h-16.98zM768.32 774h11.32v6h-11.32zM785.3 774h11.32v6h-11.32zM824.92 774h33.96v6h-33.96zM875.86 774h5.66v6h-5.66zM887.18 774h5.66v6h-5.66zM898.5 774h11.32v6h-11.32zM932.46 774h22.64v6h-22.64zM1006.04 774h5.66v6h-5.66zM1017.36 774h5.66v6h-5.66zM1028.68 774h50.94v6h-50.94zM1136.22 774h39.62v6h-39.62zM1209.8 774h11.32v6h-11.32zM1226.78 774h5.66v6h-5.66zM1238.1 774h33.96v6h-33.96zM1356.96 774h5.66v6h-5.66zM547.58 781h45.28v6h-45.28zM706.06 781h11.32v6h-11.32zM745.68 781h39.62v6h-39.62zM790.96 781h5.66v6h-5.66zM824.92 781h39.62v6h-39.62zM870.2 781h39.62v6h-39.62zM932.46 781h16.98v6h-16.98zM1028.68 781h5.66v6h-5.66zM1040 781h39.62v6h-39.62zM1130.56 781h5.66v6h-5.66zM1141.88 781h33.96v6h-33.96zM1209.8 781h62.26v6h-62.26zM1345.64 781h5.66v6h-5.66zM1356.96 781h5.66v6h-5.66zM553.24 788h22.64v6h-22.64zM581.54 788h11.32v6h-11.32zM711.72 788h5.66v6h-5.66zM728.7 788h11.32v6h-11.32zM745.68 788h5.66v6h-5.66zM757 788h39.62v6h-39.62zM824.92 788h16.98v6h-16.98zM847.56 788h62.26v6h-62.26zM932.46 788h28.3v6h-28.3zM983.4 788h5.66v6h-5.66zM1028.68 788h39.62v6h-39.62zM1130.56 788h16.98v6h-16.98zM1153.2 788h22.64v6h-22.64zM1215.46 788h33.96v6h-33.96zM1255.08 788h11.32v6h-11.32zM1356.96 788h5.66v6h-5.66zM496.64 795h5.66v6h-5.66zM547.58 795h45.28v6h-45.28zM700.4 795h11.32v6h-11.32zM745.68 795h50.94v6h-50.94zM824.92 795h79.24v6h-79.24zM932.46 795h28.3v6h-28.3zM1028.68 795h33.96v6h-33.96zM1068.3 795h11.32v6h-11.32zM1141.88 795h16.98v6h-16.98zM1164.52 795h11.32v6h-11.32zM1209.8 795h16.98v6h-16.98zM1232.44 795h39.62v6h-39.62zM1345.64 795h11.32v6h-11.32z"/>
<path fill="#ce4218" d="M604.18 635h5.66v6h-5.66zM711.72 635h5.66v6h-5.66zM728.7 635h5.66v6h-5.66zM807.94 635h5.66v6h-5.66zM1085.28 635h11.32v6h-11.32zM1113.58 635h5.66v6h-5.66zM1187.16 635h5.66v6h-5.66zM1277.72 635h5.66v6h-5.66zM1306.02 635h5.66v6h-5.66zM598.52 642h11.32v6h-11.32zM683.42 642h5.66v6h-5.66zM728.7 642h5.66v6h-5.66zM740.02 642h5.66v6h-5.66zM1113.58 642h5.66v6h-5.66zM1175.84 642h5.66v6h-5.66zM1187.16 642h5.66v6h-5.66zM1277.72 642h5.66v6h-5.66zM1306.02 642h5.66v6h-5.66zM1334.32 642h5.66v6h-5.66zM592.86 649h5.66v6h-5.66zM609.84 649h11.32v6h-11.32zM689.08 649h11.32v6h-11.32zM717.38 649h5.66v6h-5.66zM728.7 649h5.66v6h-5.66zM807.94 649h5.66v6h-5.66zM1090.94 649h5.66v6h-5.66zM1107.92 649h11.32v6h-11.32zM1175.84 649h5.66v6h-5.66zM1289.04 649h5.66v6h-5.66zM1306.02 649h5.66v6h-5.66zM1328.66 649h11.32v6h-11.32zM479.66 656h11.32v6h-11.32zM683.42 656h5.66v6h-5.66zM717.38 656h5.66v6h-5.66zM740.02 656h5.66v6h-5.66zM802.28 656h5.66v6h-5.66zM966.42 656h5.66v6h-5.66zM1107.92 656h5.66v6h-5.66zM1175.84 656h5.66v6h-5.66zM1187.16 656h5.66v6h-5.66zM1328.66 656h11.32v6h-11.32zM474 663h5.66v6h-5.66zM604.18 663h11.32v6h-11.32zM683.42 663h11.32v6h-11.32zM700.4 663h5.66v6h-5.66zM711.72 663h5.66v6h-5.66zM723.04 663h11.32v6h-11.32zM807.94 663h5.66v6h-5.66zM989.06 663h5.66v6h-5.66zM1102.26 663h5.66v6h-5.66zM1192.82 663h11.32v6h-11.32zM1277.72 663h5.66v6h-5.66zM1334.32 663h5.66v6h-5.66zM813.6 670h5.66v6h-5.66zM1107.92 670h5.66v6h-5.66zM1192.82 670h5.66v6h-5.66zM1272.06 670h5.66v6h-5.66zM1334.32 670h5.66v6h-5.66zM474 677h5.66v6h-5.66zM683.42 677h5.66v6h-5.66zM706.06 677h5.66v6h-5.66zM1096.6 677h5.66v6h-5.66zM1175.84 677h5.66v6h-5.66zM1283.38 677h11.32v6h-11.32zM1300.36 677h11.32v6h-11.32zM541.92 684h5.66v6h-5.66zM592.86 684h5.66v6h-5.66zM706.06 684h16.98v6h-16.98zM972.08 684h5.66v6h-5.66zM1000.38 684h5.66v6h-5.66zM1079.62 684h5.66v6h-5.66zM1096.6 684h5.66v6h-5.66zM1107.92 684h5.66v6h-5.66zM1124.9 684h5.66v6h-5.66zM1294.7 684h11.32v6h-11.32zM1334.32 684h5.66v6h-5.66zM541.92 691h5.66v5h-5.66zM592.86 691h5.66v5h-5.66zM604.18 691h5.66v5h-5.66zM717.38 691h11.32v5h-11.32zM960.76 691h5.66v5h-5.66zM1079.62 691h5.66v5h-5.66zM1102.26 691h5.66v5h-5.66zM1181.5 691h5.66v5h-5.66zM1192.82 691h5.66v5h-5.66zM1204.14 691h5.66v5h-5.66zM1283.38 691h11.32v5h-11.32zM1334.32 691h5.66v5h-5.66zM1362.62 691h5.66v5h-5.66zM604.18 697h5.66v6h-5.66zM700.4 697h5.66v6h-5.66zM740.02 697h5.66v6h-5.66zM796.62 697h5.66v6h-5.66zM813.6 697h5.66v6h-5.66zM966.42 697h5.66v6h-5.66zM1079.62 697h5.66v6h-5.66zM1090.94 697h5.66v6h-5.66zM1102.26 697h5.66v6h-5.66zM1119.24 697h5.66v6h-5.66zM1181.5 697h5.66v6h-5.66zM1198.48 697h5.66v6h-5.66zM1277.72 697h5.66v6h-5.66zM1294.7 697h11.32v6h-11.32zM1323 697h5.66v6h-5.66zM1362.62 697h5.66v6h-5.66zM598.52 704h11.32v6h-11.32zM683.42 704h5.66v6h-5.66zM706.06 704h16.98v6h-16.98zM728.7 704h5.66v6h-5.66zM740.02 704h5.66v6h-5.66zM819.26 704h5.66v6h-5.66zM926.8 704h5.66v6h-5.66zM1119.24 704h5.66v6h-5.66zM1198.48 704h5.66v6h-5.66zM1289.04 704h5.66v6h-5.66zM1300.36 704h5.66v6h-5.66zM1311.68 704h5.66v6h-5.66zM1334.32 704h5.66v6h-5.66zM474 711h11.32v6h-11.32zM598.52 711h5.66v6h-5.66zM609.84 711h5.66v6h-5.66zM700.4 711h5.66v6h-5.66zM740.02 711h5.66v6h-5.66zM807.94 711h5.66v6h-5.66zM819.26 711h5.66v6h-5.66zM1283.38 711h5.66v6h-5.66zM1294.7 711h5.66v6h-5.66zM1323 711h5.66v6h-5.66zM1362.62 711h5.66v6h-5.66zM598.52 718h11.32v6h-11.32zM683.42 718h5.66v6h-5.66zM694.74 718h5.66v6h-5.66zM977.74 718h5.66v6h-5.66zM1096.6 718h5.66v6h-5.66zM1107.92 718h5.66v6h-5.66zM1124.9 718h5.66v6h-5.66zM1175.84 718h11.32v6h-11.32zM1272.06 718h5.66v6h-5.66zM1289.04 718h5.66v6h-5.66zM1328.66 718h5.66v6h-5.66zM479.66 725h11.32v6h-11.32zM604.18 725h5.66v6h-5.66zM615.5 725h5.66v6h-5.66zM683.42 725h5.66v6h-5.66zM711.72 725h5.66v6h-5.66zM1096.6 725h5.66v6h-5.66zM1107.92 725h5.66v6h-5.66zM1289.04 725h5.66v6h-5.66zM1306.02 725h5.66v6h-5.66zM1334.32 725h5.66v6h-5.66zM694.74 732h11.32v6h-11.32zM740.02 732h5.66v6h-5.66zM1181.5 732h5.66v6h-5.66zM1283.38 732h5.66v6h-5.66zM474 739h5.66v6h-5.66zM819.26 739h5.66v6h-5.66zM994.72 739h11.32v6h-11.32zM1113.58 739h5.66v6h-5.66zM1175.84 739h5.66v6h-5.66zM1289.04 739h5.66v6h-5.66zM1362.62 739h5.66v6h-5.66zM796.62 746h5.66v6h-5.66zM921.14 746h5.66v6h-5.66zM977.74 746h5.66v6h-5.66zM1079.62 746h5.66v6h-5.66zM1090.94 746h11.32v6h-11.32zM1334.32 746h5.66v6h-5.66zM474 753h5.66v6h-5.66zM541.92 753h5.66v6h-5.66zM807.94 753h5.66v6h-5.66zM1107.92 753h5.66v6h-5.66zM1175.84 753h16.98v6h-16.98zM1198.48 753h5.66v6h-5.66zM1277.72 753h5.66v6h-5.66zM474 760h5.66v6h-5.66zM813.6 760h5.66v6h-5.66zM909.82 760h5.66v6h-5.66zM921.14 760h5.66v6h-5.66zM960.76 760h5.66v6h-5.66zM1107.92 760h16.98v6h-16.98zM1175.84 760h11.32v6h-11.32zM1198.48 760h5.66v6h-5.66zM1289.04 760h5.66v6h-5.66zM1311.68 760h5.66v6h-5.66zM474 767h5.66v6h-5.66zM960.76 767h5.66v6h-5.66zM1107.92 767h5.66v6h-5.66zM1175.84 767h11.32v6h-11.32zM1283.38 767h5.66v6h-5.66zM1334.32 767h5.66v6h-5.66zM485.32 774h5.66v6h-5.66zM1085.28 774h5.66v6h-5.66zM1119.24 774h5.66v6h-5.66zM1204.14 774h5.66v6h-5.66zM1272.06 774h5.66v6h-5.66zM1306.02 774h5.66v6h-5.66zM1362.62 774h5.66v6h-5.66zM474 781h5.66v6h-5.66zM796.62 781h5.66v6h-5.66zM1079.62 781h5.66v6h-5.66zM1090.94 781h5.66v6h-5.66zM1181.5 781h5.66v6h-5.66zM1204.14 781h5.66v6h-5.66zM1277.72 781h5.66v6h-5.66zM1311.68 781h5.66v6h-5.66zM1323 781h5.66v6h-5.66zM474 788h5.66v6h-5.66zM802.28 788h5.66v6h-5.66zM813.6 788h5.66v6h-5.66zM972.08 788h5.66v6h-5.66zM1079.62 788h5.66v6h-5.66zM1102.26 788h5.66v6h-5.66zM1124.9 788h5.66v6h-5.66zM1175.84 788h5.66v6h-5.66zM1277.72 788h5.66v6h-5.66zM1306.02 788h16.98v6h-16.98zM1328.66 788h5.66v6h-5.66zM1362.62 788h5.66v6h-5.66zM683.42 795h5.66v6h-5.66zM972.08 795h5.66v6h-5.66zM1000.38 795h5.66v6h-5.66zM1079.62 795h5.66v6h-5.66zM1096.6 795h5.66v6h-5.66zM1124.9 795h5.66v6h-5.66zM1198.48 795h5.66v6h-5.66zM1306.02 795h5.66v6h-5.66zM1317.34 795h5.66v6h-5.66z"/>
<path fill="#d4661e" d="M926.8 635h5.66v6h-5.66zM989.06 635h5.66v6h-5.66zM1102.26 635h11.32v6h-11.32zM1119.24 635h5.66v6h-5.66zM1311.68 635h5.66v6h-5.66zM530.6 642h11.32v6h-11.32zM694.74 642h5.66v6h-5.66zM711.72 642h5.66v6h-5.66zM1085.28 642h5.66v6h-5.66zM1311.68 642h5.66v6h-5.66zM1362.62 642h5.66v6h-5.66zM524.94 649h5.66v6h-5.66zM700.4 649h16.98v6h-16.98zM1079.62 649h11.32v6h-11.32zM1102.26 649h5.66v6h-5.66zM1300.36 649h5.66v6h-5.66zM519.28 656h5.66v6h-5.66zM909.82 656h5.66v6h-5.66zM960.76 656h5.66v6h-5.66zM972.08 656h5.66v6h-5.66zM983.4 656h11.32v6h-11.32zM1096.6 656h5.66v6h-5.66zM1119.24 656h11.32v6h-11.32zM1317.34 656h5.66v6h-5.66zM513.62 663h5.66v6h-5.66zM717.38 663h5.66v6h-5.66zM740.02 663h5.66v6h-5.66zM909.82 663h11.32v6h-11.32zM960.76 663h5.66v6h-5.66zM972.08 663h5.66v6h-5.66zM1085.28 663h5.66v6h-5.66zM1113.58 663h5.66v6h-5.66zM1124.9 663h5.66v6h-5.66zM1311.68 663h11.32v6h-11.32zM530.6 670h5.66v6h-5.66zM706.06 670h11.32v6h-11.32zM909.82 670h5.66v6h-5.66zM983.4 670h5.66v6h-5.66zM1113.58 670h5.66v6h-5.66zM1300.36 670h5.66v6h-5.66zM1317.34 670h5.66v6h-5.66zM519.28 677h5.66v6h-5.66zM536.26 677h5.66v6h-5.66zM711.72 677h5.66v6h-5.66zM966.42 677h5.66v6h-5.66zM1085.28 677h5.66v6h-5.66zM1107.92 677h5.66v6h-5.66zM1311.68 677h16.98v6h-16.98zM1334.32 677h5.66v6h-5.66zM1362.62 677h5.66v6h-5.66zM507.96 684h11.32v6h-11.32zM536.26 684h5.66v6h-5.66zM683.42 684h5.66v6h-5.66zM989.06 684h5.66v6h-5.66zM1119.24 684h5.66v6h-5.66zM1306.02 684h5.66v6h-5.66zM1362.62 684h5.66v6h-5.66zM513.62 691h5.66v5h-5.66zM524.94 691h11.32v5h-11.32zM706.06 691h5.66v5h-5.66zM740.02 691h5.66v5h-5.66zM909.82 691h5.66v5h-5.66zM972.08 691h11.32v5h-11.32zM989.06 691h5.66v5h-5.66zM1113.58 691h5.66v5h-5.66zM1311.68 691h5.66v5h-5.66zM1323 691h5.66v5h-5.66zM507.96 697h5.66v6h-5.66zM530.6 697h5.66v6h-5.66zM711.72 697h5.66v6h-5.66zM915.48 697h16.98v6h-16.98zM977.74 697h11.32v6h-11.32zM1096.6 697h5.66v6h-5.66zM507.96 704h5.66v6h-5.66zM909.82 704h5.66v6h-5.66zM921.14 704h5.66v6h-5.66zM1079.62 704h5.66v6h-5.66zM1090.94 704h5.66v6h-5.66zM1113.58 704h5.66v6h-5.66zM1124.9 704h5.66v6h-5.66zM1306.02 704h5.66v6h-5.66zM1362.62 704h5.66v6h-5.66zM536.26 711h5.66v6h-5.66zM689.08 711h11.32v6h-11.32zM706.06 711h5.66v6h-5.66zM972.08 711h5.66v6h-5.66zM1090.94 711h5.66v6h-5.66zM1311.68 711h5.66v6h-5.66zM519.28 718h5.66v6h-5.66zM530.6 718h5.66v6h-5.66zM700.4 718h11.32v6h-11.32zM740.02 718h5.66v6h-5.66zM966.42 718h11.32v6h-11.32zM1079.62 718h5.66v6h-5.66zM1113.58 718h5.66v6h-5.66zM1362.62 718h5.66v6h-5.66zM689.08 725h5.66v6h-5.66zM706.06 725h5.66v6h-5.66zM734.36 725h5.66v6h-5.66zM921.14 725h5.66v6h-5.66zM966.42 725h11.32v6h-11.32zM1079.62 725h11.32v6h-11.32zM1102.26 725h5.66v6h-5.66zM1124.9 725h5.66v6h-5.66zM1311.68 725h5.66v6h-5.66zM519.28 732h5.66v6h-5.66zM530.6 732h5.66v6h-5.66zM706.06 732h5.66v6h-5.66zM909.82 732h5.66v6h-5.66zM921.14 732h5.66v6h-5.66zM966.42 732h5.66v6h-5.66zM983.4 732h5.66v6h-5.66zM1090.94 732h5.66v6h-5.66zM1107.92 732h16.98v6h-16.98zM1300.36 732h11.32v6h-11.32zM1317.34 732h11.32v6h-11.32zM519.28 739h11.32v6h-11.32zM598.52 739h5.66v6h-5.66zM609.84 739h5.66v6h-5.66zM632.48 739h11.32v6h-11.32zM672.1 739h11.32v6h-11.32zM909.82 739h5.66v6h-5.66zM926.8 739h5.66v6h-5.66zM972.08 739h5.66v6h-5.66zM989.06 739h5.66v6h-5.66zM1085.28 739h5.66v6h-5.66zM1102.26 739h5.66v6h-5.66zM1119.24 739h5.66v6h-5.66zM1328.66 739h5.66v6h-5.66zM519.28 746h5.66v6h-5.66zM609.84 746h5.66v6h-5.66zM621.16 746h5.66v6h-5.66zM655.12 746h11.32v6h-11.32zM926.8 746h5.66v6h-5.66zM960.76 746h5.66v6h-5.66zM1113.58 746h16.98v6h-16.98zM1323 746h5.66v6h-5.66zM977.74 753h5.66v6h-5.66zM989.06 753h5.66v6h-5.66zM1079.62 753h5.66v6h-5.66zM1090.94 753h11.32v6h-11.32zM1311.68 753h5.66v6h-5.66zM1328.66 753h5.66v6h-5.66zM513.62 760h5.66v6h-5.66zM530.6 760h11.32v6h-11.32zM609.84 760h5.66v6h-5.66zM621.16 760h5.66v6h-5.66zM638.14 760h5.66v6h-5.66zM649.46 760h5.66v6h-5.66zM966.42 760h5.66v6h-5.66zM1079.62 760h5.66v6h-5.66zM1300.36 760h5.66v6h-5.66zM507.96 767h5.66v6h-5.66zM530.6 767h11.32v6h-11.32zM592.86 767h5.66v6h-5.66zM604.18 767h5.66v6h-5.66zM621.16 767h16.98v6h-16.98zM666.44 767h5.66v6h-5.66zM677.76 767h5.66v6h-5.66zM1079.62 767h5.66v6h-5.66zM1311.68 767h5.66v6h-5.66zM519.28 774h5.66v6h-5.66zM592.86 774h5.66v6h-5.66zM632.48 774h11.32v6h-11.32zM672.1 774h5.66v6h-5.66zM915.48 774h11.32v6h-11.32zM966.42 774h5.66v6h-5.66zM989.06 774h5.66v6h-5.66zM1090.94 774h16.98v6h-16.98zM1113.58 774h5.66v6h-5.66zM1311.68 774h5.66v6h-5.66zM638.14 781h11.32v6h-11.32zM655.12 781h5.66v6h-5.66zM677.76 781h5.66v6h-5.66zM1096.6 781h5.66v6h-5.66zM1300.36 781h5.66v6h-5.66zM1362.62 781h5.66v6h-5.66zM507.96 788h5.66v6h-5.66zM530.6 788h5.66v6h-5.66zM609.84 788h5.66v6h-5.66zM621.16 788h5.66v6h-5.66zM643.8 788h5.66v6h-5.66zM524.94 795h5.66v6h-5.66zM592.86 795h5.66v6h-5.66zM621.16 795h5.66v6h-5.66zM643.8 795h5.66v6h-5.66zM966.42 795h5.66v6h-5.66zM989.06 795h5.66v6h-5.66zM1113.58 795h11.32v6h-11.32zM1328.66 795h5.66v6h-5.66z"/>
<path fill="#d8a020" d="M1124.9 635h5.66v6h-5.66zM706.06 642h5.66v6h-5.66zM1300.36 642h5.66v6h-5.66zM1079.62 656h5.66v6h-5.66zM1368.28 656h5.66v6h-5.66zM1385.26 656h2.74v6h-2.74zM694.74 663h5.66v6h-5.66zM1328.66 663h5.66v6h-5.66zM1379.6 663h5.66v6h-5.66zM1096.6 670h5.66v6h-5.66zM1373.94 677h5.66v6h-5.66zM1085.28 684h5.66v6h-5.66zM1085.28 691h5.66v5h-5.66zM1124.9 691h5.66v5h-5.66zM1328.66 691h5.66v5h-5.66zM1368.28 691h11.32v5h-11.32zM1385.26 697h2.74v6h-2.74zM1373.94 704h5.66v6h-5.66zM1096.6 711h5.66v6h-5.66zM1317.34 711h5.66v6h-5.66zM723.04 718h5.66v6h-5.66zM1119.24 718h5.66v6h-5.66zM1362.62 725h5.66v6h-5.66zM1373.94 739h11.32v6h-11.32zM1368.28 746h5.66v6h-5.66zM1334.32 753h5.66v6h-5.66zM1090.94 760h5.66v6h-5.66zM1373.94 760h5.66v6h-5.66zM1300.36 767h5.66v6h-5.66zM1385.26 767h2.74v6h-2.74zM1300.36 774h5.66v6h-5.66zM1328.66 774h5.66v6h-5.66zM1368.28 774h5.66v6h-5.66zM1379.6 781h5.66v6h-5.66zM1373.94 788h5.66v6h-5.66zM1334.32 795h5.66v6h-5.66zM1368.28 795h5.66v6h-5.66z"/>
<path fill="#d8ab22" d="M1368.28 635h5.66v6h-5.66zM1368.28 642h5.66v6h-5.66zM1379.6 642h5.66v6h-5.66zM1368.28 677h5.66v6h-5.66zM915.48 691h5.66v5h-5.66zM1379.6 704h5.66v6h-5.66zM1368.28 711h5.66v6h-5.66zM1379.6 711h8.4v6h-8.4zM1368.28 725h5.66v6h-5.66zM1385.26 725h2.74v6h-2.74zM1379.6 732h5.66v6h-5.66zM966.42 739h5.66v6h-5.66zM1385.26 746h2.74v6h-2.74zM1368.28 753h5.66v6h-5.66zM1385.26 760h2.74v6h-2.74zM1373.94 767h5.66v6h-5.66zM1385.26 774h2.74v6h-2.74zM1385.26 781h2.74v6h-2.74zM926.8 788h5.66v6h-5.66zM966.42 788h5.66v6h-5.66zM1385.26 788h2.74v6h-2.74zM1373.94 795h11.32v6h-11.32z"/>
<path fill="#d79120" d="M1373.94 635h5.66v6h-5.66zM1385.26 642h2.74v6h-2.74zM1373.94 649h11.32v6h-11.32zM1379.6 656h5.66v6h-5.66zM1368.28 663h11.32v6h-11.32zM1368.28 670h19.72v6h-19.72zM1385.26 684h2.74v6h-2.74zM1385.26 691h2.74v5h-2.74zM683.42 697h5.66v6h-5.66zM1368.28 697h5.66v6h-5.66zM1379.6 697h5.66v6h-5.66zM1373.94 711h5.66v6h-5.66zM1368.28 718h5.66v6h-5.66zM1368.28 732h11.32v6h-11.32zM1385.26 732h2.74v6h-2.74zM1379.6 753h5.66v6h-5.66zM1368.28 760h5.66v6h-5.66zM1379.6 774h5.66v6h-5.66zM1368.28 781h11.32v6h-11.32zM1385.26 795h2.74v6h-2.74z"/>
<path fill="#d8b624" d="M1385.26 635h2.74v6h-2.74zM1368.28 649h5.66v6h-5.66zM1385.26 663h2.74v6h-2.74zM513.62 677h5.66v6h-5.66zM1379.6 677h5.66v6h-5.66zM1373.94 684h11.32v6h-11.32zM536.26 691h5.66v5h-5.66zM1379.6 691h5.66v5h-5.66zM1373.94 697h5.66v6h-5.66zM1368.28 704h5.66v6h-5.66zM1385.26 704h2.74v6h-2.74zM513.62 718h5.66v6h-5.66zM1385.26 718h2.74v6h-2.74zM1373.94 725h5.66v6h-5.66zM1385.26 739h2.74v6h-2.74zM598.52 746h5.66v6h-5.66zM609.84 753h5.66v6h-5.66zM1385.26 753h2.74v6h-2.74zM519.28 760h5.66v6h-5.66zM672.1 760h5.66v6h-5.66zM513.62 767h5.66v6h-5.66zM649.46 767h5.66v6h-5.66zM1368.28 767h5.66v6h-5.66zM609.84 774h5.66v6h-5.66zM626.82 774h5.66v6h-5.66zM1373.94 774h5.66v6h-5.66zM649.46 788h5.66v6h-5.66zM672.1 788h5.66v6h-5.66zM1379.6 788h5.66v6h-5.66zM632.48 795h5.66v6h-5.66zM649.46 795h5.66v6h-5.66z"/>
<path fill="#d8cc28" d="M1385.26 677h2.74v6h-2.74zM1373.94 753h5.66v6h-5.66zM1368.28 788h5.66v6h-5.66z"/>
</g>
<line x1="474" y1="802" x2="1388" y2="802" stroke="#000" stroke-width="1.2"/>
<rect x="1208" y="123" width="18" height="5" fill="#00009a"/>
<rect x="1226" y="123" width="18" height="5" fill="#0000ee"/>
<rect x="1244" y="123" width="18" height="5" fill="#0050f0"/>
<rect x="1262" y="123" width="18" height="5" fill="#10a0f8"/>
<rect x="1280" y="123" width="18" height="5" fill="#00f8f8"/>
<rect x="1298" y="123" width="18" height="5" fill="#50f8a8"/>
<rect x="1316" y="123" width="18" height="5" fill="#a8f048"/>
<rect x="1334" y="123" width="18" height="5" fill="#f8f800"/>
<rect x="1352" y="123" width="18" height="5" fill="#f8a000"/>
<rect x="1370" y="123" width="18" height="5" fill="#ff5500"/>
<text x="1208" y="142.8" text-anchor="middle" font-size="10">0.5</text>
<text x="1244" y="142.8" text-anchor="middle" font-size="10">0.6</text>
<text x="1280" y="142.8" text-anchor="middle" font-size="10">0.7</text>
<text x="1316" y="142.8" text-anchor="middle" font-size="10">0.8</text>
<text x="1352" y="142.8" text-anchor="middle" font-size="10">0.9</text>
<text x="1388" y="142.8" text-anchor="middle" font-size="10">1</text>
<rect x="1208" y="368" width="6" height="5.2" fill="#1080f0"/>
<rect x="1214" y="368" width="6" height="5.2" fill="#108aee"/>
<rect x="1220" y="368" width="6" height="5.2" fill="#1094ec"/>
<rect x="1226" y="368" width="6" height="5.2" fill="#109ee9"/>
<rect x="1232" y="368" width="6" height="5.2" fill="#10a8e7"/>
<rect x="1238" y="368" width="6" height="5.2" fill="#10b2e5"/>
<rect x="1244" y="368" width="6" height="5.2" fill="#10bce3"/>
<rect x="1250" y="368" width="6" height="5.2" fill="#10c6e1"/>
<rect x="1256" y="368" width="6" height="5.2" fill="#12c7cf"/>
<rect x="1262" y="368" width="6" height="5.2" fill="#14c6b9"/>
<rect x="1268" y="368" width="6" height="5.2" fill="#16c5a3"/>
<rect x="1274" y="368" width="6" height="5.2" fill="#18c48d"/>
<rect x="1280" y="368" width="6" height="5.2" fill="#1ac377"/>
<rect x="1286" y="368" width="6" height="5.2" fill="#1dc261"/>
<rect x="1292" y="368" width="6" height="5.2" fill="#1fc14b"/>
<rect x="1298" y="368" width="6" height="5.2" fill="#2cc13e"/>
<rect x="1304" y="368" width="6" height="5.2" fill="#43c339"/>
<rect x="1310" y="368" width="6" height="5.2" fill="#5ac635"/>
<rect x="1316" y="368" width="6" height="5.2" fill="#71c831"/>
<rect x="1322" y="368" width="6" height="5.2" fill="#88ca2c"/>
<rect x="1328" y="368" width="6" height="5.2" fill="#9fcc28"/>
<rect x="1334" y="368" width="6" height="5.2" fill="#b7ce23"/>
<rect x="1340" y="368" width="6" height="5.2" fill="#c9cc20"/>
<rect x="1346" y="368" width="6" height="5.2" fill="#ceba20"/>
<rect x="1352" y="368" width="6" height="5.2" fill="#d2a820"/>
<rect x="1358" y="368" width="6" height="5.2" fill="#d69720"/>
<rect x="1364" y="368" width="6" height="5.2" fill="#d57a1d"/>
<rect x="1370" y="368" width="6" height="5.2" fill="#d15719"/>
<rect x="1376" y="368" width="6" height="5.2" fill="#cc3314"/>
<rect x="1382" y="368" width="6" height="5.2" fill="#c81010"/>
<rect x="1208" y="609.5" width="6" height="5.2" fill="#1080f0"/>
<rect x="1214" y="609.5" width="6" height="5.2" fill="#108aee"/>
<rect x="1220" y="609.5" width="6" height="5.2" fill="#1094ec"/>
<rect x="1226" y="609.5" width="6" height="5.2" fill="#109ee9"/>
<rect x="1232" y="609.5" width="6" height="5.2" fill="#10a8e7"/>
<rect x="1238" y="609.5" width="6" height="5.2" fill="#10b2e5"/>
<rect x="1244" y="609.5" width="6" height="5.2" fill="#10bce3"/>
<rect x="1250" y="609.5" width="6" height="5.2" fill="#10c6e1"/>
<rect x="1256" y="609.5" width="6" height="5.2" fill="#12c7cf"/>
<rect x="1262" y="609.5" width="6" height="5.2" fill="#14c6b9"/>
<rect x="1268" y="609.5" width="6" height="5.2" fill="#16c5a3"/>
<rect x="1274" y="609.5" width="6" height="5.2" fill="#18c48d"/>
<rect x="1280" y="609.5" width="6" height="5.2" fill="#1ac377"/>
<rect x="1286" y="609.5" width="6" height="5.2" fill="#1dc261"/>
<rect x="1292" y="609.5" width="6" height="5.2" fill="#1fc14b"/>
<rect x="1298" y="609.5" width="6" height="5.2" fill="#2cc13e"/>
<rect x="1304" y="609.5" width="6" height="5.2" fill="#43c339"/>
<rect x="1310" y="609.5" width="6" height="5.2" fill="#5ac635"/>
<rect x="1316" y="609.5" width="6" height="5.2" fill="#71c831"/>
<rect x="1322" y="609.5" width="6" height="5.2" fill="#88ca2c"/>
<rect x="1328" y="609.5" width="6" height="5.2" fill="#9fcc28"/>
<rect x="1334" y="609.5" width="6" height="5.2" fill="#b7ce23"/>
<rect x="1340" y="609.5" width="6" height="5.2" fill="#c9cc20"/>
<rect x="1346" y="609.5" width="6" height="5.2" fill="#ceba20"/>
<rect x="1352" y="609.5" width="6" height="5.2" fill="#d2a820"/>
<rect x="1358" y="609.5" width="6" height="5.2" fill="#d69720"/>
<rect x="1364" y="609.5" width="6" height="5.2" fill="#d57a1d"/>
<rect x="1370" y="609.5" width="6" height="5.2" fill="#d15719"/>
<rect x="1376" y="609.5" width="6" height="5.2" fill="#cc3314"/>
<rect x="1382" y="609.5" width="6" height="5.2" fill="#c81010"/>
<text x="1208" y="388.7" text-anchor="middle" font-size="10">-125</text>
<text x="1268" y="388.7" text-anchor="middle" font-size="10">-105</text>
<text x="1328" y="388.7" text-anchor="middle" font-size="10">-85</text>
<text x="1388" y="388.7" text-anchor="middle" font-size="10">-65</text>
<text x="1208" y="631" text-anchor="middle" font-size="10">-125</text>
<text x="1268" y="631" text-anchor="middle" font-size="10">-105</text>
<text x="1328" y="631" text-anchor="middle" font-size="10">-85</text>
<text x="1388" y="631" text-anchor="middle" font-size="10">-65</text>
<text x="1391" y="160" font-size="10">-20</text>
<text x="1391" y="187.3" font-size="10">-40</text>
<text x="1391" y="219.3" font-size="10">-60</text>
<text x="1391" y="251.3" font-size="10">-80</text>
<text x="1391" y="283.3" font-size="10">-100</text>
<text x="1391" y="314.5" font-size="10">-120</text>
<line x1="1388" y1="152" x2="1388" y2="312" stroke="#000" stroke-width="1"/>
<text x="0" y="0" font-size="10" transform="translate(1438.5,231.5) rotate(-90)" text-anchor="middle">Power (dBm) per MHz</text>
<text x="0" y="0" font-size="10" transform="translate(1438.5,480.5) rotate(-90)" text-anchor="middle">Time</text>
<text x="0" y="0" font-size="10" transform="translate(1438.5,718.5) rotate(-90)" text-anchor="middle">Time</text>
<text x="490.5" y="327.2" text-anchor="middle" font-size="10">5100</text>
<text x="591.5" y="327.2" text-anchor="middle" font-size="10">5200</text>
<text x="704.7" y="327.2" text-anchor="middle" font-size="10">5300</text>
<text x="817.9" y="327.2" text-anchor="middle" font-size="10">5400</text>
<text x="931.1" y="327.2" text-anchor="middle" font-size="10">5500</text>
<text x="1044.3" y="327.2" text-anchor="middle" font-size="10">5600</text>
<text x="1157.5" y="327.2" text-anchor="middle" font-size="10">5700</text>
<text x="1270.7" y="327.2" text-anchor="middle" font-size="10">5800</text>
<text x="1383.0" y="327.2" text-anchor="middle" font-size="10">5900</text>
<text x="490.5" y="581.2" text-anchor="middle" font-size="10">5100</text>
<line x1="478.3" y1="565.0" x2="478.3" y2="571.0" stroke="#000" stroke-width="1"/>
<text x="591.5" y="581.2" text-anchor="middle" font-size="10">5200</text>
<line x1="591.5" y1="565.0" x2="591.5" y2="571.0" stroke="#000" stroke-width="1"/>
<text x="704.7" y="581.2" text-anchor="middle" font-size="10">5300</text>
<line x1="704.7" y1="565.0" x2="704.7" y2="571.0" stroke="#000" stroke-width="1"/>
<text x="817.9" y="581.2" text-anchor="middle" font-size="10">5400</text>
<line x1="817.9" y1="565.0" x2="817.9" y2="571.0" stroke="#000" stroke-width="1"/>
<text x="931.1" y="581.2" text-anchor="middle" font-size="10">5500</text>
<line x1="931.1" y1="565.0" x2="931.1" y2="571.0" stroke="#000" stroke-width="1"/>
<text x="1044.3" y="581.2" text-anchor="middle" font-size="10">5600</text>
<line x1="1044.3" y1="565.0" x2="1044.3" y2="571.0" stroke="#000" stroke-width="1"/>
<text x="1157.5" y="581.2" text-anchor="middle" font-size="10">5700</text>
<line x1="1157.5" y1="565.0" x2="1157.5" y2="571.0" stroke="#000" stroke-width="1"/>
<text x="1270.7" y="581.2" text-anchor="middle" font-size="10">5800</text>
<line x1="1270.7" y1="565.0" x2="1270.7" y2="571.0" stroke="#000" stroke-width="1"/>
<text x="1383.0" y="581.2" text-anchor="middle" font-size="10">5900</text>
<line x1="1383.9" y1="565.0" x2="1383.9" y2="571.0" stroke="#000" stroke-width="1"/>
<text x="490.5" y="819.6" text-anchor="middle" font-size="10">5100</text>
<line x1="478.3" y1="803.4" x2="478.3" y2="809.4" stroke="#000" stroke-width="1"/>
<text x="591.5" y="819.6" text-anchor="middle" font-size="10">5200</text>
<line x1="591.5" y1="803.4" x2="591.5" y2="809.4" stroke="#000" stroke-width="1"/>
<text x="704.7" y="819.6" text-anchor="middle" font-size="10">5300</text>
<line x1="704.7" y1="803.4" x2="704.7" y2="809.4" stroke="#000" stroke-width="1"/>
<text x="817.9" y="819.6" text-anchor="middle" font-size="10">5400</text>
<line x1="817.9" y1="803.4" x2="817.9" y2="809.4" stroke="#000" stroke-width="1"/>
<text x="931.1" y="819.6" text-anchor="middle" font-size="10">5500</text>
<line x1="931.1" y1="803.4" x2="931.1" y2="809.4" stroke="#000" stroke-width="1"/>
<text x="1044.3" y="819.6" text-anchor="middle" font-size="10">5600</text>
<line x1="1044.3" y1="803.4" x2="1044.3" y2="809.4" stroke="#000" stroke-width="1"/>
<text x="1157.5" y="819.6" text-anchor="middle" font-size="10">5700</text>
<line x1="1157.5" y1="803.4" x2="1157.5" y2="809.4" stroke="#000" stroke-width="1"/>
<text x="1270.7" y="819.6" text-anchor="middle" font-size="10">5800</text>
<line x1="1270.7" y1="803.4" x2="1270.7" y2="809.4" stroke="#000" stroke-width="1"/>
<text x="1383.0" y="819.6" text-anchor="middle" font-size="10">5900</text>
<line x1="1383.9" y1="803.4" x2="1383.9" y2="809.4" stroke="#000" stroke-width="1"/>
<text x="1396.4" y="656.1" font-size="10.5">08:42</text>
<text x="1396.4" y="677.1" font-size="10.5">08:45</text>
<text x="1396.4" y="698.1" font-size="10.5">08:48</text>
<text x="1396.4" y="719.1" font-size="10.5">08:51</text>
<text x="1396.4" y="740.1" font-size="10.5">08:54</text>
<text x="1396.4" y="761.1" font-size="10.5">08:57</text>
<text x="1396.4" y="782.1" font-size="10.5">09 PM</text>
<text x="1396.4" y="803.1" font-size="10.5">09:03</text></svg>
</body></html>
